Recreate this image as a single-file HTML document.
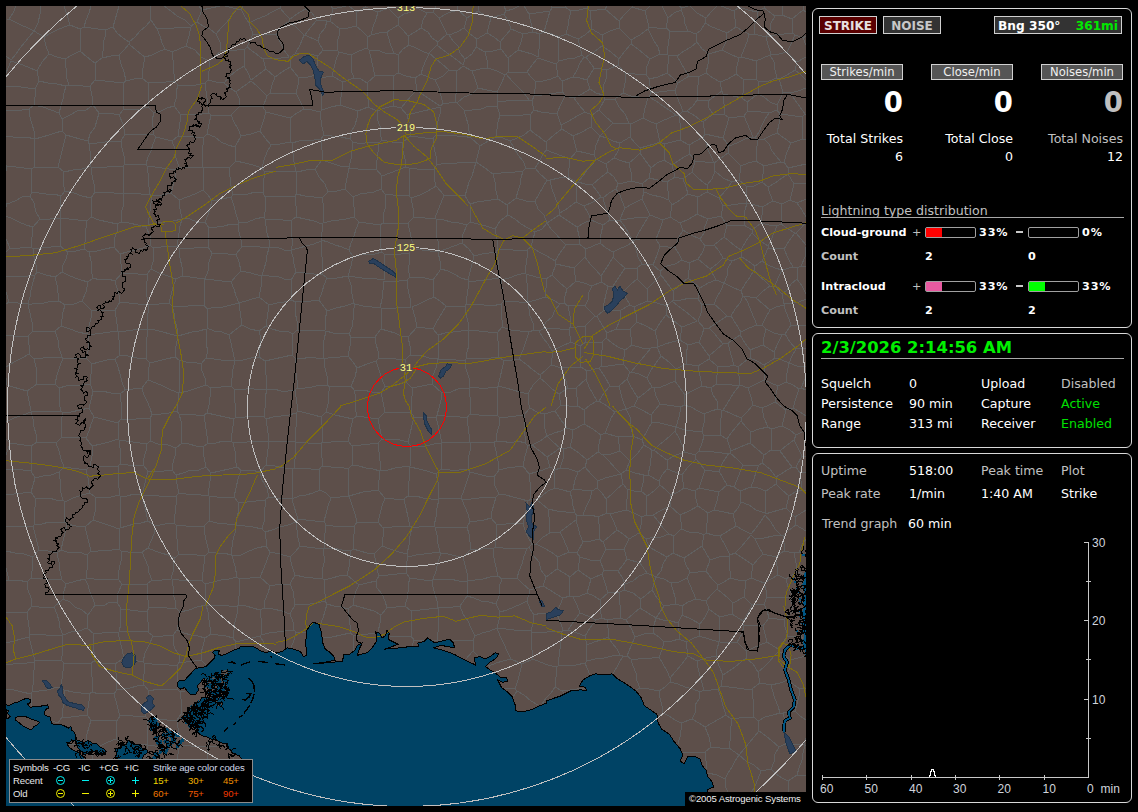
<!DOCTYPE html>
<html lang="en">
<head>
<meta charset="utf-8">
<title>Lightning Tracker</title>
<style>
html,body{margin:0;padding:0;background:#000;}
body{width:1138px;height:812px;position:relative;overflow:hidden;font-family:"DejaVu Sans","Liberation Sans",sans-serif;color:#fff;}
.map{position:absolute;left:6px;top:6px;}
.panel{position:absolute;border:1px solid #d8d8d8;border-radius:6px;box-sizing:border-box;}
.t{position:absolute;white-space:nowrap;line-height:20px;font-size:12.6px;margin-top:1px;}
.r{text-align:right;}
.g{color:#c0c0c0;}
.gr{color:#00e000;}
.b{font-weight:bold;}
.btn{position:absolute;box-sizing:border-box;border:1px solid #d0d0d0;text-align:center;white-space:nowrap;}
.hl{position:absolute;height:1px;background:#a8a8a8;}
.bar{position:absolute;box-sizing:border-box;border:1px solid #a0a0a0;border-radius:2px;height:11px;width:51px;}
.bar i{position:absolute;left:0;top:0;bottom:0;display:block;}
.s11{font-size:11.2px;}
.lg{font-family:"Liberation Sans",sans-serif;font-size:9.6px;letter-spacing:-0.15px;line-height:12px;margin-top:1px;}
</style>
</head>
<body>
<svg class="map" width="800" height="800" viewBox="6 6 800 800" shape-rendering="crispEdges">
<rect x="6" y="6" width="800" height="800" fill="#5d4f4a"/>
<g fill="#004365" stroke="none">
<path d="M6,704.8 9.2,705.6 13.2,703.2 17.2,702.4 22,700 26,698.4 30,699.2 30.8,702.4 27.6,704 30,707.2 38,706.4 45.2,705.6 47.9,704.8 48.4,708 45.2,709.6 44.4,714.4 46.8,716 50,716.8 51.6,723.2 54,724.8 58.8,724 63.6,725.6 68.4,728 70.8,726.4 72,730.4 74.8,732.8 75.6,736.8 77.2,740 81.2,741.6 84.4,742.4 87.6,740.8 90.8,741.6 93.2,744 96.4,743.2 100.4,747.2 103.6,748.8 106,751.2 105.2,754.4 102,755.2 98.8,753.6 95.6,752 91.6,750.4 87.6,753.6 83.6,754.4 81.2,751.2 78,748 74.8,740.8 71.6,740 69.2,743.2 66.8,742.4 68.4,746.4 73.2,750.4 78,752 81.2,755.2 84.4,758 84.4,810 6,810Z"/>
<path d="M6,696 6,696Z"/>
<path d="M114.9,760 116.5,753.6 114.9,748.8 119.7,748 121.3,744 126.1,744.8 127.7,740.8 132.5,741.6 134.1,744 138.9,744.8 142.1,748 146.9,749.6 147.7,752.8 143.7,755.2 142.1,760Z"/>
<path d="M149.3,718.4 152.5,716.8 156,716 156,731.2 152.5,730.4 150.1,726.4 150.9,722.4Z"/>
<path d="M242.4,760 239.2,755.7 232.8,753.3 228.8,748.5 227.2,743.7 221.6,742.9 216.8,740.5 210.4,738.9 205.6,736.5 201.6,735.7 197.6,732.4 195.2,727.6 191.2,726 188,722 184,719.6 182.4,716.4 187.2,714.8 188,710 192.8,706.8 194.4,702.8 200,701.2 201.6,697.2 206.4,698 208.8,694.8 207.2,691.6 204,688.4 204.8,684.4 204,678 201.6,681.2 197.6,685.2 198.4,690 196,694 191.2,694.8 187.2,691.6 184.8,687.6 180,689.2 177.6,686.8 177.1,682.8 180,680.4 184.8,680.4 187.2,677.2 191.2,673.2 194.4,669.2 199.2,667.6 205.6,666.8 210.4,662 214.4,658 215.2,655.6 212.8,652.4 215.2,650 219.2,650.8 218.4,654 221.6,655.6 228,653.2 234.4,650 239.2,648.4 240.8,646 252.1,646 256.9,648.4 261.7,651.6 266.5,652.4 271.3,650.8 276.1,653.2 276,652.8 282.2,651.6 287.1,647.9 293.2,649.1 300.6,651.6 303.1,656.5 306.8,655.3 305.6,643 306.8,630.6 310.5,624.5 313,622 319.1,624.5 321.6,633.1 322.8,643 325.3,649.1 329,651.6 333.9,656.5 335.1,660.2 325.3,662.2 313,663.9 342.5,661.4 343.8,654 349.9,654 354.8,650.3 357.3,645.4 362.2,643 359.8,647.9 357.3,655.3 367.2,652.8 372.1,647.9 377,640.5 375.8,631.9 379.5,633.1 381.9,638 385.6,635.6 386.9,630.6 389.3,633.1 388.1,639.3 393,641.7 398,644.2 391.8,646.7 384.4,649.1 399.2,647.9 409,646.7 418.9,646.7 417.7,643 423.8,641.7 427.5,638 431.2,640.5 434.9,643 443.5,640.5 449.7,639.3 453.4,643 454.6,647.9 448.5,646.7 441.1,645.4 433.7,647.9 443.5,650.3 453.4,654 465.7,660.2 475.6,665.1 474.3,657.7 480.5,656.5 484.2,659 490.3,656.5 495.3,652.8 499,654 495.3,659 489.1,662.7 485.4,666.4 490.3,670.1 496.5,673.8 500.2,677.4 506.4,677.4 507.6,681.1 502.7,682.4 497.7,679.9 501.4,687.3 507.6,692.2 512.5,697.2 515,704.5 515,710.7 522.4,711.9 532.2,709.5 539.6,705.8 546,703.3 546,700.9 553.4,698.4 560.8,695.9 570.6,691 580.5,689.8 586.7,691 585.4,687.3 579.3,686.1 583,679.9 589.1,676.2 595.3,673.8 605.1,675 612,673.8 617.4,678.7 627.3,684.8 635.9,691 640.9,697.2 644.5,705.8 651.9,710.7 656.9,714.4 658.1,723 661.8,729.2 669.2,734.1 674.1,741.5 680.3,748.9 682.7,755.1 680.3,761.2 684,763.7 687.7,756.3 693.8,756.3 700,758.7 702.4,766.1 706.1,769.8 707.4,776 712.3,782.2 713.5,787.1 707.4,789.5 708.6,806 708.6,806 242.4,806Z"/>
</g>
<g fill="#5d4f4a" stroke="#000" stroke-width="1">
<path d="M15.6,717.6 20.4,716 26,716.8 31.6,719.2 36.4,720.8 39.6,722.4 37.2,724.8 34,726.4 31.6,729.6 28.4,728.8 23.6,726.4 19.6,723.2 15.6,720Z"/>
<path d="M6,709.6 8.4,710.4 7.6,713.3 10,716.5 7.9,718.4 6,718.1Z"/>
</g>
<path d="M6,165 7,166 M6,171 7,166 M9,19 7,19 M9,19 13,13 16,6 M382,140 379,143 M382,140 392,142 402,143 M376,169 377,160 378,152 379,143 M376,169 382,176 M382,176 390,173 398,170 406,167 M406,167 405,159 403,151 402,143 M349,168 349,167 M349,168 358,169 367,169 376,169 M379,143 370,142 361,144 353,142 M349,167 351,159 352,151 353,142 M499,278 501,280 M499,278 492,279 484,280 476,281 468,281 M501,280 502,287 503,294 504,301 M468,281 468,289 467,296 466,304 M466,304 475,304 484,305 492,306 501,304 M501,304 504,301 M469,330 468,322 466,314 465,306 M469,330 461,331 453,332 445,333 438,335 M438,335 433,329 M465,306 456,306 446,306 M433,329 437,321 442,313 446,306 M718,804 724,800 730,796 M718,804 718,806 M750,803 750,806 M750,803 748,800 M748,800 739,798 730,796 M804,744 795,744 785,744 M804,744 806,738 M795,711 800,716 806,720 M795,711 783,713 M785,744 785,736 783,729 785,721 783,713 M711,803 718,804 M711,803 709,804 M805,745 803,753 802,760 799,768 797,775 M805,745 806,746 M797,775 806,776 M788,781 797,775 M788,781 782,778 776,774 771,769 M804,744 805,745 M771,769 774,762 775,754 779,747 M785,744 779,747 M795,711 797,704 799,696 800,689 M800,689 806,688 M802,456 796,467 M802,456 798,448 794,440 M794,440 787,445 780,451 M780,451 786,459 792,467 M792,467 796,467 M437,640 442,640 M452,640 462,640 473,640 M437,640 438,632 438,624 438,616 438,608 M473,640 475,636 M460,606 463,614 468,621 471,628 475,636 M460,606 453,607 446,607 438,608 M437,640 432,640 M424,640 414,640 M414,640 411,636 M411,636 411,628 412,619 411,611 M438,608 429,609 420,610 411,611 M375,633 368,634 360,635 353,635 M378,632 380,623 381,615 M381,615 374,611 367,609 360,607 353,605 M350,633 353,635 M350,633 350,625 349,617 348,609 M348,609 353,605 M353,651 353,643 353,635 M324,580 332,578 339,576 347,575 M324,580 324,587 325,594 325,601 M325,601 327,604 M327,604 334,606 341,607 348,609 M353,605 354,598 356,591 359,585 M347,575 353,580 359,585 M119,631 126,631 134,631 141,631 148,632 M119,631 121,624 120,616 121,609 M121,609 130,610 138,611 147,611 M148,632 149,625 147,618 147,611 M266,112 263,107 M266,112 274,114 282,116 290,118 M263,107 267,96 M290,118 297,113 304,109 M267,96 270,93 M270,93 278,93 287,93 296,93 M304,109 300,101 296,93 M9,19 15,22 21,25 28,28 34,31 M41,6 40,14 38,23 34,31 M6,56 11,60 M11,60 16,54 20,48 25,42 29,37 34,31 M349,168 347,178 345,189 M345,189 337,191 328,192 M322,160 331,163 340,166 349,167 M322,160 315,169 M315,169 319,177 325,184 328,192 M295,605 303,604 310,604 317,603 325,601 M295,605 294,598 293,591 290,584 M322,578 313,578 304,577 295,575 M322,578 324,580 M290,584 295,575 M350,139 341,137 332,136 324,135 M350,139 351,132 355,125 357,118 358,111 M340,105 349,108 358,111 M340,105 331,107 322,110 M324,135 322,127 321,120 320,112 M322,110 320,112 M322,160 322,150 321,139 M353,142 350,139 M321,139 324,135 M528,302 529,309 530,316 533,323 534,330 M527,302 519,302 512,301 504,301 M534,330 529,332 M501,304 501,312 502,320 502,327 M502,327 511,330 520,331 529,332 M468,469 459,470 450,470 441,469 M468,469 470,472 M436,474 441,469 M436,474 438,482 438,490 439,499 M470,472 467,481 464,490 461,498 M439,499 447,498 454,498 461,498 M436,135 433,138 M436,135 436,128 438,121 440,114 440,107 M433,138 425,138 418,137 410,136 M410,136 410,129 409,122 407,115 M407,115 415,113 423,111 432,109 440,107 M636,690 640,688 M640,688 649,689 659,691 M658,717 663,713 M663,713 662,706 660,698 659,691 M678,744 680,737 681,730 681,723 M681,723 675,720 669,716 663,713 M603,542 610,536 617,530 M603,542 606,549 M617,530 623,534 629,539 M629,539 624,549 M606,549 615,549 624,549 M629,539 639,533 M646,539 639,533 M646,539 649,547 M649,547 644,555 640,563 M640,563 627,559 M624,549 627,559 M473,651 473,640 M473,651 478,656 M488,665 489,666 M489,666 496,663 503,661 511,659 M475,636 482,633 490,631 497,628 M511,659 507,651 504,644 500,636 497,628 M489,666 489,668 M504,688 515,689 M515,689 518,680 520,672 522,664 M511,659 522,664 M555,687 551,693 546,698 542,704 M555,687 556,677 556,667 M556,667 548,665 540,662 533,659 M538,705 531,701 524,695 517,691 M517,691 515,689 M533,659 522,664 M776,806 783,804 790,801 M790,801 796,806 M750,803 763,806 M788,781 788,791 790,801 M771,769 761,771 M761,771 758,779 755,786 751,793 748,800 M806,803 800,806 M780,713 783,713 M780,713 778,706 775,699 773,692 771,685 M800,689 794,685 788,680 M788,680 780,683 771,685 M746,658 753,664 758,672 M746,658 741,662 735,667 729,671 723,675 M752,689 744,689 737,688 729,687 721,686 M752,689 760,683 M723,675 721,686 M760,683 758,672 M664,642 672,641 679,639 M664,642 662,650 659,657 M670,678 667,671 663,664 659,657 M670,678 676,671 682,664 688,656 M688,656 687,649 686,642 M686,642 679,639 M631,659 638,659 645,658 652,658 659,657 M631,659 633,666 636,673 637,681 640,688 M670,682 665,687 659,691 M670,682 670,678 M719,642 709,639 699,636 M719,642 717,649 716,656 M697,661 706,658 716,656 M697,661 688,656 M699,636 692,639 686,642 M806,491 802,490 M802,490 801,481 800,473 M800,473 806,472 M802,456 806,456 M796,467 800,473 M782,426 784,418 786,410 M782,426 771,429 M771,429 768,427 M768,427 764,418 762,408 M786,410 775,402 M762,408 769,405 775,402 M794,440 796,435 M780,451 771,450 M796,435 790,430 782,426 M771,450 771,443 771,436 771,429 M799,389 793,385 786,382 M799,389 796,398 793,408 M793,408 786,410 M778,386 786,382 M778,386 776,394 775,402 M120,771 122,761 M120,771 129,770 138,769 146,768 M146,768 147,754 M147,749 148,745 M148,745 147,744 M147,744 140,745 M176,803 176,796 174,789 171,782 171,775 M176,804 166,805 156,806 M153,775 162,775 171,775 M153,775 148,782 146,791 142,799 M142,799 152,806 M176,806 176,804 M146,768 153,775 M148,745 155,746 163,747 171,748 179,749 M179,749 177,759 177,770 M177,770 171,775 M206,796 207,788 208,780 M206,796 198,797 191,799 183,801 176,803 M177,770 184,771 191,775 200,776 207,779 M207,779 208,780 M350,633 341,635 332,637 323,638 M327,604 325,611 323,618 320,625 M240,799 240,806 M240,799 233,799 225,800 217,800 209,801 M209,801 210,806 M241,797 240,799 M206,796 209,801 M241,794 239,787 237,780 235,774 M235,774 228,775 221,777 214,779 208,780 M467,596 474,598 481,601 489,602 496,604 M467,596 467,588 468,581 M468,581 475,580 483,579 490,577 498,576 M496,604 499,596 499,587 502,579 M502,579 498,576 M460,606 467,596 M500,612 499,620 497,628 M500,612 496,604 M527,601 530,590 M527,601 521,604 514,607 507,610 500,612 M530,590 523,584 517,578 M517,578 509,578 502,579 M381,615 387,608 M359,585 367,583 376,581 M387,608 385,601 382,594 377,588 376,581 M411,636 404,636 397,636 390,637 M411,611 405,606 M387,608 396,607 405,606 M438,608 437,601 435,594 433,587 432,580 M432,580 424,580 417,579 410,578 M405,606 407,599 408,592 408,585 410,578 M473,651 466,659 M437,640 437,641 M552,351 548,344 543,338 539,331 M552,351 562,346 571,342 M539,331 543,329 M571,342 569,329 M543,329 551,328 560,329 569,329 M353,549 351,551 M353,549 360,551 367,553 374,554 M351,551 350,559 349,567 347,575 M376,581 379,576 M374,554 376,562 377,569 379,576 M410,578 406,573 M379,576 388,575 397,574 406,573 M119,115 109,113 99,113 M119,115 123,124 125,134 M99,113 97,120 95,127 90,134 88,141 M89,144 88,141 M89,144 97,143 105,142 113,141 121,141 M121,141 125,134 M119,115 123,110 M148,107 140,109 132,109 123,110 M148,107 154,113 M125,134 134,134 143,134 153,134 M154,113 152,120 153,127 153,134 M209,113 202,114 195,114 188,114 181,115 M209,113 208,106 207,98 206,91 205,83 M205,83 196,85 187,85 178,85 M178,85 176,92 176,99 174,106 M174,106 181,115 M154,113 161,111 167,108 174,106 M153,134 156,137 M156,137 164,139 172,141 M181,115 180,122 179,129 178,136 M178,136 172,141 M353,549 353,542 354,534 354,527 M383,528 383,537 382,546 M383,528 378,522 M378,522 368,522 357,522 M374,554 382,546 M354,527 357,522 M410,526 401,526 392,527 383,528 M410,526 408,517 406,508 404,499 M378,522 380,514 382,506 385,498 M385,498 394,499 404,499 M436,474 427,471 419,469 410,467 M439,499 431,499 423,498 416,496 408,496 M408,496 408,489 409,481 409,474 410,467 M117,602 118,593 122,584 M117,602 121,609 M149,608 147,611 M149,608 148,600 147,592 147,584 M147,584 138,584 130,584 122,584 M803,38 795,35 M803,38 806,45 M797,62 806,57 M797,62 787,52 M787,52 791,44 795,35 M645,11 647,19 649,27 M645,11 650,6 M649,27 657,28 666,28 M666,28 668,18 M662,6 668,18 M647,289 642,284 637,279 M647,289 654,282 661,275 M653,265 660,271 M653,265 642,264 M637,279 637,268 M661,275 660,271 M637,268 642,264 M462,243 463,234 467,225 M462,243 469,249 474,256 M474,256 482,254 489,253 496,252 M467,225 470,222 M470,222 478,224 486,226 495,229 M495,229 497,239 498,249 M498,249 496,252 M438,252 446,249 454,246 462,243 M438,252 439,244 436,236 437,227 436,219 M436,219 444,220 451,222 459,223 467,225 M468,280 461,278 454,274 448,271 441,269 M468,280 470,272 472,264 474,256 M441,269 440,261 438,252 M468,280 468,281 M499,278 498,270 498,260 496,252 M498,199 507,205 M498,199 491,200 484,201 477,202 470,204 M470,204 470,213 470,222 M495,229 500,221 508,215 M508,215 507,205 M11,61 6,73 M270,93 272,85 275,77 M296,93 298,85 299,78 M275,77 282,72 290,67 M299,78 290,67 M280,8 285,14 290,19 M280,8 280,6 M290,19 297,14 305,9 M305,6 305,9 M243,6 241,9 M241,9 245,17 249,23 M249,23 257,19 265,16 272,12 280,8 M178,85 174,81 M148,107 148,99 148,91 148,83 M174,81 166,82 157,82 148,83 M123,110 123,101 123,92 123,83 M126,81 123,83 M126,81 134,79 142,78 M142,78 148,83 M11,61 20,64 28,67 37,71 M44,37 34,31 M44,37 46,46 49,54 M49,54 42,62 37,71 M35,89 39,81 M35,89 28,88 21,87 13,86 6,86 M39,81 37,71 M438,252 430,251 422,250 414,249 M414,249 412,241 410,232 408,223 M436,219 435,218 M408,223 414,217 M435,218 425,218 414,217 M434,169 437,165 M434,169 434,178 436,186 M437,165 445,163 453,164 461,162 469,163 476,162 M436,186 444,195 M444,195 454,195 465,196 M465,196 467,189 469,182 472,176 474,169 476,162 M409,168 406,167 M409,168 417,169 426,169 434,169 M433,138 434,147 436,156 437,165 M402,143 410,136 M409,168 409,178 409,187 409,196 M409,196 411,198 M411,198 420,195 428,191 436,186 M436,135 443,135 450,135 457,136 464,136 471,138 M471,138 480,146 M480,146 478,154 476,162 M435,218 438,210 441,203 444,195 M411,198 413,208 414,217 M470,204 465,196 M493,174 495,182 496,191 498,199 M493,174 485,168 476,162 M290,118 290,126 290,134 290,142 M321,139 314,140 306,140 299,141 292,143 M304,109 312,110 320,112 M290,142 292,143 M382,176 381,189 M409,196 401,195 393,195 385,194 M381,189 385,194 M345,189 353,197 M381,189 374,192 367,193 360,194 353,197 M408,223 400,223 391,223 383,223 M385,194 385,201 385,209 383,216 383,223 M465,306 466,304 M502,327 497,333 M469,330 479,331 488,332 497,333 M469,330 468,338 469,345 467,352 466,359 M497,333 498,341 498,349 499,357 M499,357 491,358 482,358 474,358 466,359 M436,417 437,415 M436,417 438,425 440,434 442,443 M437,415 445,416 452,416 460,417 467,418 M442,443 451,442 461,443 470,442 M467,418 468,426 469,434 470,442 M468,469 468,460 470,451 470,442 M441,469 441,460 441,452 442,443 M529,332 526,341 523,350 519,359 M499,357 504,361 M519,359 512,360 504,361 M500,418 499,426 497,433 496,441 M500,418 508,417 516,416 524,415 M496,441 503,441 510,443 518,441 525,443 M524,415 525,422 524,429 525,436 525,443 M410,526 412,527 M439,499 437,508 436,517 434,526 M408,496 404,499 M434,526 426,526 419,527 412,527 M382,546 390,549 399,552 407,554 M412,527 410,536 409,545 407,554 M406,573 406,565 408,557 M408,557 407,554 M517,578 519,571 522,564 524,556 527,549 M527,549 519,548 511,548 503,548 495,547 M498,576 496,567 494,558 493,549 M495,547 493,549 M543,586 536,588 530,590 M543,586 546,577 M527,549 529,547 M546,577 541,570 539,562 533,555 529,547 M398,25 403,30 408,36 M398,25 398,18 M408,36 415,32 421,28 M417,8 411,12 404,14 398,18 M417,8 427,13 M427,13 423,20 421,28 M417,90 422,94 428,98 434,102 440,106 M417,90 415,78 M415,78 421,74 M421,74 428,77 435,80 M435,80 439,88 441,96 443,104 M443,104 440,106 M407,115 401,108 M401,108 406,102 411,96 417,90 M449,70 442,64 436,59 429,53 M449,70 443,76 435,80 M429,54 426,60 423,67 421,74 M371,35 373,27 376,19 378,12 M371,35 379,33 387,32 M398,25 387,32 M398,18 393,13 388,8 M378,12 388,8 M343,82 354,78 M343,82 342,90 341,97 340,105 M358,111 368,107 M354,78 361,79 367,83 M367,83 367,91 368,99 368,107 M382,140 380,133 380,126 377,119 377,111 M401,108 393,106 M393,106 385,108 377,111 M377,111 368,107 M711,803 709,801 M670,682 678,684 685,687 693,689 700,692 M681,723 692,719 M692,719 695,713 695,705 699,699 700,692 M697,661 698,668 700,676 702,683 704,690 M716,656 719,666 723,675 M721,686 718,689 M718,689 711,690 704,690 M700,692 704,690 M562,691 555,687 M562,691 570,690 577,689 585,688 M556,667 558,666 M558,666 567,665 576,665 585,663 M590,675 585,663 M562,632 563,630 M562,632 554,631 547,632 539,633 531,632 M563,630 560,621 556,612 M556,612 549,614 541,613 534,615 M534,615 533,623 531,631 M531,632 531,631 M558,666 559,657 560,649 561,640 562,632 M533,659 532,650 531,641 531,632 M543,586 550,590 556,594 563,598 M527,601 530,609 534,615 M563,598 560,605 556,612 M497,628 506,629 514,630 522,630 531,631 M587,645 586,653 587,661 M587,645 594,642 601,640 608,637 M587,661 595,659 604,658 612,656 620,655 M608,637 612,643 617,649 620,655 M656,618 654,625 653,633 M656,618 648,613 640,608 M653,633 644,634 635,637 M640,608 633,614 626,620 M626,620 631,628 635,637 M631,659 627,656 M653,633 659,637 664,642 M635,637 631,646 627,656 M613,674 618,665 623,656 M627,656 623,656 M585,663 587,661 M623,656 620,655 M788,680 789,670 790,660 M771,685 760,683 M758,672 764,667 769,662 774,656 779,651 M790,660 779,651 M730,578 730,571 729,564 729,556 M730,578 724,582 718,585 M729,556 719,557 710,560 M710,560 706,571 M706,571 712,579 718,585 M733,603 744,597 M733,603 728,598 722,593 717,589 M730,578 738,580 745,581 M744,597 745,589 745,581 M717,589 718,585 M710,560 706,553 702,546 M702,546 696,550 690,554 684,558 M706,571 698,572 690,572 M684,558 686,565 690,572 M704,535 702,546 M704,535 697,532 689,532 681,529 M681,529 674,536 M674,536 673,545 673,553 M684,558 673,553 M717,589 711,595 706,601 M706,601 696,599 M696,599 693,592 690,585 687,578 M687,578 690,572 M646,539 654,537 661,537 669,534 M649,547 658,552 667,557 M669,534 674,536 M673,553 667,557 M682,615 678,623 M682,615 682,606 M678,623 671,621 663,620 656,618 M682,606 676,604 M676,604 664,606 M656,618 660,612 664,606 M700,624 691,619 682,615 M700,624 699,636 M679,639 679,631 678,623 M709,609 705,617 700,624 M709,609 706,601 M696,599 688,602 682,606 M671,583 679,582 687,578 M671,583 673,590 675,597 676,604 M806,325 799,325 791,325 M784,305 786,312 789,319 791,325 M784,305 784,304 M806,299 799,302 792,303 784,304 M806,377 801,388 M801,388 806,390 M799,389 801,388 M789,363 787,373 786,382 M789,363 797,366 806,367 M796,435 806,430 M793,408 800,412 806,416 M771,450 764,455 M751,432 759,429 768,427 M751,432 750,443 M750,443 757,449 764,455 M741,421 746,427 751,432 M741,421 736,427 731,433 727,439 M727,439 731,451 M750,443 740,447 731,451 M806,510 795,517 M802,490 795,492 789,496 M789,496 786,508 M786,508 795,517 M743,465 737,459 730,453 M743,465 751,465 759,465 M731,451 730,453 M764,455 762,463 M762,463 759,465 M792,467 784,472 776,477 M762,463 770,469 776,477 M789,496 782,490 776,484 M776,477 776,484 M704,535 706,533 M681,529 681,522 680,515 M680,515 689,511 698,506 M698,506 708,513 M708,513 707,523 706,533 M730,555 729,556 M730,555 725,545 720,536 M720,536 713,535 706,533 M698,506 696,499 695,491 M695,491 699,488 M699,488 709,490 719,492 M708,513 714,510 M719,492 717,501 714,510 M736,526 733,514 M736,526 728,531 720,536 M714,510 724,512 733,514 M784,551 794,553 M784,551 784,543 783,536 M783,536 789,530 796,525 M799,552 794,553 M799,552 802,545 806,539 M796,525 806,531 M786,508 779,510 772,512 765,514 M795,517 796,525 M765,515 771,522 775,529 781,535 M781,535 783,536 M806,555 799,552 M744,597 752,605 M745,581 751,578 M752,605 764,604 M764,583 751,578 M764,583 766,590 767,597 M767,597 764,604 M241,772 235,773 M235,773 234,764 233,755 M295,605 290,614 M290,584 280,584 270,586 M270,586 268,593 265,600 264,608 M290,614 282,611 273,609 264,608 M414,640 412,646 M566,245 560,253 555,261 M566,245 561,240 556,234 551,229 547,223 M535,232 542,229 547,223 M535,232 533,239 531,247 M555,261 547,256 539,252 531,247 M527,302 527,293 527,283 526,274 M501,280 509,278 517,275 525,273 M526,274 525,273 M498,249 506,249 513,250 520,250 527,250 M525,273 526,265 527,258 527,250 M535,232 528,228 521,224 515,219 508,215 M527,250 531,247 M528,302 536,300 545,297 M534,330 539,331 M543,329 546,322 552,317 555,310 560,304 M560,304 553,300 545,297 M526,274 536,277 546,279 M545,297 546,288 546,279 M556,264 552,275 M556,264 555,261 M546,279 552,275 M142,799 135,799 127,799 M126,806 127,799 M120,771 118,774 M118,774 122,782 124,791 127,799 M124,658 115,664 M124,658 133,660 143,662 M115,664 116,673 116,682 117,690 M117,690 123,689 130,688 137,686 144,685 M144,685 143,678 145,670 144,663 M143,662 144,663 M118,632 120,641 122,649 124,658 M118,632 110,632 102,633 94,634 M94,634 93,643 94,652 94,661 M94,661 101,663 108,663 115,664 M153,636 148,632 M153,636 149,645 145,653 143,662 M91,663 91,670 92,677 92,685 92,692 M91,663 94,661 M114,694 117,690 M114,694 107,693 99,694 92,692 M117,602 110,602 103,606 95,605 M86,578 94,579 102,579 110,579 118,579 M118,579 122,584 M85,579 88,585 90,592 93,599 95,605 M94,634 87,628 M87,628 88,615 M88,615 95,605 M10,443 6,455 M10,443 6,439 M121,141 122,148 124,156 125,164 M156,137 153,144 151,151 148,157 146,164 M125,164 135,164 146,164 M357,522 355,514 352,505 349,496 M385,498 378,490 M349,496 356,494 363,492 371,491 378,490 M804,6 803,10 M803,10 792,19 M782,6 782,15 M792,19 782,15 M806,36 803,38 M806,12 803,10 M793,33 795,35 M793,33 792,19 M793,33 784,34 775,35 766,37 M782,15 775,16 M766,37 770,30 771,23 775,16 M764,6 764,8 M775,16 764,8 M806,164 797,166 788,168 M788,168 784,162 M784,162 787,152 791,143 M803,139 791,143 M803,139 806,140 M806,217 802,210 797,203 M797,203 806,199 M631,40 625,34 619,28 M631,40 631,44 M631,44 625,51 619,59 M619,59 611,52 602,46 M619,28 610,31 602,35 M602,35 602,46 M648,29 651,35 654,41 658,47 660,54 M648,29 640,35 631,40 M660,54 650,59 M650,59 644,54 638,49 631,44 M649,79 646,74 M649,79 650,86 651,93 M646,74 635,74 625,73 M651,93 649,97 M623,93 625,83 625,73 M623,93 631,96 639,97 648,98 M648,98 649,97 M667,73 658,77 649,79 M667,73 673,78 678,83 M678,83 675,90 M675,90 667,91 659,92 651,93 M650,59 647,66 646,74 M618,65 619,59 M618,65 625,73 M679,115 683,111 M679,115 676,115 M675,90 677,97 680,104 683,111 M676,115 669,110 663,106 656,101 649,97 M676,115 669,118 662,121 656,124 M656,124 649,121 643,118 M643,118 645,108 648,98 M493,174 501,173 508,172 515,172 523,171 M507,205 516,198 M523,171 521,178 520,185 518,191 516,198 M547,223 544,215 538,209 535,201 M535,201 526,201 516,198 M480,146 488,141 496,137 M496,137 503,138 510,141 M523,171 526,168 M510,141 514,148 518,155 523,161 526,168 M547,180 540,174 535,168 M547,180 543,187 539,194 535,201 M526,168 535,168 M449,70 457,71 M443,104 455,102 M455,102 456,94 456,86 456,78 457,71 M797,203 790,200 M806,183 794,184 M790,200 792,192 794,184 M788,168 788,174 M788,174 794,184 M621,310 630,305 M621,310 612,310 603,311 M630,305 626,298 623,292 M603,311 604,303 606,294 608,286 M623,292 613,286 M613,286 608,286 M647,301 647,289 M647,301 634,307 M634,307 630,305 M637,279 630,285 623,292 M637,268 625,268 M625,268 621,274 617,280 613,286 M625,268 619,263 613,257 M613,257 609,264 605,270 601,276 M601,276 601,282 M601,282 608,286 M35,89 35,97 34,105 M66,86 57,84 48,83 39,81 M66,86 64,93 63,99 61,106 59,113 M34,105 43,107 51,110 59,113 M6,111 14,110 22,110 29,109 M34,105 29,109 M6,136 13,137 20,138 27,137 34,139 M29,109 30,117 32,124 34,131 34,139 M343,82 332,76 M351,55 351,63 351,70 354,78 M351,55 339,52 M332,76 334,68 336,60 339,52 M322,110 321,102 322,94 320,86 321,78 M332,76 321,78 M299,78 308,77 316,75 M321,78 316,75 M249,23 253,34 M253,34 261,34 268,34 276,34 M290,19 289,21 M276,34 282,27 289,21 M44,37 51,33 57,30 64,27 70,25 M70,25 67,15 64,6 M237,9 232,15 227,22 221,28 216,34 M237,9 225,6 M197,22 202,10 M197,22 203,26 210,29 216,34 M202,10 211,8 220,6 M241,9 237,9 M253,34 250,41 247,47 M221,51 229,50 237,50 245,49 M221,51 220,42 216,34 M247,47 245,49 M276,34 280,42 284,50 289,57 M289,57 281,58 272,58 263,59 M247,47 255,53 263,59 M275,77 266,69 M290,67 290,57 M263,59 266,69 M236,92 230,88 224,83 M236,92 244,86 251,81 M224,83 230,76 236,71 244,66 M244,66 248,73 251,80 M240,106 231,115 M240,106 239,98 236,92 M231,115 221,115 211,115 M211,115 209,113 M205,83 208,80 M208,80 216,82 224,83 M263,107 255,106 247,107 240,106 M267,96 262,91 257,86 251,81 M221,51 215,56 209,61 M208,80 209,71 209,61 M245,49 244,58 244,66 M266,69 258,75 251,80 M197,22 191,26 M199,6 202,10 M164,6 171,11 177,16 185,20 191,26 M69,85 66,76 66,68 65,59 M69,85 76,85 83,86 90,86 M95,80 90,86 M95,80 96,71 95,63 M95,63 87,57 80,51 M65,59 72,55 80,51 M49,54 57,57 65,59 M66,86 69,85 M93,105 92,96 90,86 M93,105 86,110 77,111 70,115 62,119 M62,119 59,113 M99,113 93,105 M123,83 114,82 105,81 95,80 M70,25 80,29 M80,29 80,36 80,43 80,51 M328,192 322,198 M353,197 354,207 354,217 M354,217 346,219 339,220 331,221 323,223 M322,198 324,207 323,215 323,223 M266,112 263,122 260,131 M231,115 234,122 238,129 241,136 M260,131 251,134 241,136 M290,142 280,144 271,145 M260,131 265,138 271,145 M412,388 406,382 M412,388 412,396 411,404 411,412 M406,382 399,384 392,386 385,387 M411,412 402,412 394,412 385,412 M385,412 383,402 381,392 M385,387 381,392 M354,217 359,222 M383,223 380,225 M359,222 366,223 373,224 380,225 M414,249 409,253 M382,252 380,243 381,234 380,225 M382,252 384,254 M409,253 401,254 392,254 384,254 M438,335 438,343 438,351 439,359 M466,359 465,360 M465,360 456,360 447,359 439,359 M410,355 405,360 M410,355 419,355 429,358 438,359 M405,360 405,368 406,375 406,382 M412,388 422,386 432,384 M438,359 436,368 433,375 432,384 M414,417 411,412 M414,417 421,417 429,417 436,417 M437,415 439,408 441,400 442,393 M442,393 432,384 M470,414 479,415 488,415 497,415 M470,414 470,405 470,397 469,388 M469,388 470,387 M470,387 479,388 488,388 497,387 M497,387 497,397 497,406 497,415 M500,418 497,415 M467,418 470,414 M494,442 496,441 M494,442 486,442 478,443 470,442 M442,393 451,392 460,388 469,388 M465,360 466,369 469,378 470,387 M439,359 438,359 M498,386 500,378 502,369 504,361 M498,386 497,387 M528,394 520,392 513,390 506,388 498,386 M528,394 528,401 530,408 M524,415 530,408 M470,472 478,474 486,476 494,477 M494,442 496,451 498,461 499,470 M499,470 494,477 M525,443 528,446 M499,470 507,468 515,467 523,466 M528,446 525,456 523,466 M540,375 540,378 M540,375 546,370 551,365 M540,378 546,383 552,389 559,394 M551,365 562,368 M562,368 564,375 566,381 568,388 M559,394 568,388 M528,394 533,385 540,378 M519,359 526,364 533,370 540,375 M552,351 552,358 551,365 M599,401 604,393 610,386 M599,401 607,406 615,412 M610,386 619,386 M615,412 626,409 M619,386 621,394 623,401 626,409 M576,388 577,397 578,406 M576,388 568,388 M559,394 561,405 M561,405 569,406 578,406 M576,388 586,379 M586,379 589,387 593,394 597,401 M597,401 590,405 584,410 M584,410 578,406 M434,526 435,527 M408,557 416,555 424,554 432,553 440,552 M435,527 437,535 438,544 440,552 M461,498 462,500 M462,500 465,507 468,514 470,522 M470,522 467,527 M435,527 443,527 451,527 459,527 467,527 M557,569 558,557 M557,569 564,573 570,577 M558,557 569,552 M570,577 578,570 M578,570 580,557 M569,552 577,553 M580,557 577,553 M546,577 557,569 M529,547 532,544 M532,544 536,544 M536,544 544,548 551,552 558,557 M563,598 570,596 M570,596 569,586 570,577 M603,542 599,539 M599,539 591,541 583,542 M600,561 606,549 M600,561 590,560 580,557 M583,542 577,553 M417,8 417,6 M388,8 388,6 M429,54 422,51 416,48 409,45 M429,53 437,45 M408,36 409,45 M421,28 428,32 432,38 438,42 M437,45 438,42 M457,71 463,66 M437,45 443,50 450,55 457,60 463,65 M438,42 447,34 M465,59 463,65 M465,59 460,53 458,46 453,41 449,35 M449,35 447,34 M365,6 365,7 M349,6 357,12 M357,12 365,7 M378,12 365,7 M333,9 346,6 M333,9 331,6 M356,26 357,12 M356,26 362,31 368,37 M371,35 368,37 M369,50 371,58 373,67 375,76 M369,50 377,50 385,53 394,53 M375,76 384,75 393,76 M398,55 394,53 M398,55 398,64 398,73 M398,73 393,76 M351,55 359,51 367,48 M367,48 369,50 M367,83 375,76 M368,37 367,48 M387,32 389,39 391,46 394,53 M393,106 394,98 393,91 394,84 393,76 M409,45 403,49 398,55 M415,78 406,76 398,73 M692,719 699,723 705,727 M718,689 721,698 723,706 726,715 M705,727 712,723 719,719 726,715 M562,691 564,693 M640,608 641,599 M664,606 657,598 652,590 M641,599 646,595 652,590 M671,583 664,579 656,577 M652,590 656,577 M640,563 647,573 M667,557 663,564 661,571 656,577 M647,573 656,577 M796,349 790,342 785,334 M796,349 792,356 789,363 M789,363 782,360 775,358 M782,335 785,334 M782,335 778,343 774,352 M774,352 775,358 M806,348 796,349 M791,325 785,334 M764,380 764,372 764,365 M764,380 771,383 778,386 M764,365 775,358 M763,345 764,337 766,329 M763,345 774,352 M766,329 774,333 782,335 M750,358 750,350 M750,358 757,361 764,365 M763,345 750,350 M631,372 630,372 M631,372 639,374 647,378 M630,372 627,379 M627,379 630,385 634,392 638,398 M638,398 645,393 652,387 M647,378 652,387 M647,301 657,303 667,306 M667,306 666,315 M634,307 636,314 637,322 M637,322 646,326 655,331 M666,315 660,323 655,331 M770,310 766,317 762,325 M770,310 763,304 756,298 M756,298 744,296 M744,296 748,303 751,311 754,318 757,325 M757,325 762,325 M784,305 776,307 770,310 M766,329 762,325 M731,316 736,324 741,332 M731,316 735,309 740,303 743,296 M743,296 744,296 M741,332 749,328 757,325 M740,335 745,343 750,350 M740,335 741,332 M667,306 672,301 M666,315 674,321 682,327 M682,327 690,324 697,321 M697,321 691,316 685,311 678,306 672,301 M661,275 667,283 673,291 M673,291 673,300 M672,301 673,300 M688,278 694,283 700,288 M688,278 681,284 673,291 M673,300 681,300 690,298 698,299 M700,288 698,299 M698,321 701,313 702,305 M702,305 698,299 M723,258 732,261 M723,258 717,264 710,269 M732,261 728,268 727,276 724,283 M710,269 716,280 M716,280 724,283 M741,250 735,246 729,241 724,237 M741,250 742,257 M742,257 732,261 M714,245 724,237 M714,245 719,251 723,258 M700,288 708,283 716,280 M714,304 702,305 M714,304 717,297 721,290 724,283 M731,316 727,316 M743,296 741,291 M741,291 732,287 724,283 M727,316 721,310 714,304 M741,291 745,284 750,277 754,270 M756,298 763,291 770,286 M770,286 765,281 759,276 754,270 M742,257 748,261 755,266 M755,266 754,270 M796,233 801,239 806,245 M796,233 801,228 806,222 M685,452 682,445 679,438 675,431 M685,452 676,455 667,460 M675,431 670,436 664,441 659,445 654,450 M667,460 660,455 654,450 M660,404 667,405 674,406 681,407 M660,404 655,410 651,415 M681,407 679,417 676,427 M676,427 668,425 660,423 652,422 M651,415 652,422 M660,404 656,396 654,388 M638,398 634,406 M654,388 652,387 M651,415 642,410 634,406 M627,379 619,386 M634,406 626,409 M719,471 723,462 729,453 M719,471 712,471 705,470 M729,453 722,453 714,452 707,451 699,451 M705,470 696,459 M696,459 695,455 M695,455 699,451 M743,465 740,472 737,480 734,487 M730,453 729,453 M727,485 734,487 M727,485 723,478 719,471 M699,488 702,479 705,470 M719,492 727,485 M727,439 720,435 M720,435 712,435 704,436 M704,436 702,443 699,451 M695,491 684,488 M684,488 682,475 M682,475 688,467 696,459 M685,452 695,455 M667,460 667,469 M667,469 675,472 682,475 M702,432 704,436 M702,432 693,431 685,430 676,427 M676,427 675,431 M765,513 756,510 749,505 741,502 M765,513 766,506 765,499 766,491 M766,491 758,488 751,487 M751,487 740,491 M740,491 741,502 M751,534 756,528 761,521 765,515 M751,534 743,530 736,526 M765,514 765,513 M733,514 738,508 741,502 M776,484 766,491 M759,465 756,472 754,479 751,487 M734,487 740,491 M790,660 798,658 806,656 M794,553 796,563 797,572 M806,574 797,572 M784,551 776,557 M776,557 777,566 778,575 M778,575 786,579 M797,572 786,579 M753,565 758,559 763,554 M753,565 744,559 735,553 M763,554 759,547 755,539 M735,553 741,547 746,541 751,535 M751,535 755,539 M776,557 763,554 M778,575 771,579 764,583 M751,578 753,565 M730,555 735,553 M781,535 773,536 764,538 755,539 M788,636 783,642 778,649 M788,636 785,627 784,619 M784,619 777,619 769,618 M778,649 767,642 M767,642 765,634 763,626 M763,626 769,618 M779,651 778,649 M801,636 806,644 M801,636 788,636 M746,658 746,651 M746,651 753,648 760,645 767,642 M743,621 744,625 M743,621 732,614 M744,625 742,634 737,642 M720,617 719,625 719,634 720,642 M720,617 732,614 M720,642 728,642 737,642 M752,605 748,613 743,621 M764,604 767,611 769,618 M763,626 754,625 744,625 M733,603 732,614 M746,651 737,642 M709,609 714,613 720,617 M153,636 163,636 173,635 M177,666 169,665 160,664 152,664 144,663 M177,666 179,662 M179,662 179,655 175,649 173,642 173,635 M177,666 177,674 177,682 M177,687 177,689 M144,685 149,691 M177,689 168,690 158,689 149,691 M120,716 129,715 137,717 145,716 M120,716 118,709 116,701 114,694 M149,691 148,699 148,708 145,716 M147,744 148,736 147,728 148,719 M120,716 117,721 M117,721 116,730 116,739 M116,739 121,743 M145,716 148,719 M182,745 180,737 178,728 177,720 M182,745 191,746 199,746 207,746 M177,720 181,714 M181,714 185,714 M208,739 208,746 M179,749 182,745 M157,719 167,720 177,720 M207,779 207,771 207,763 207,755 207,746 M177,689 180,692 M180,692 181,699 182,707 181,714 M203,687 199,688 M185,691 180,692 M227,745 217,746 208,746 M306,633 296,632 M290,614 293,622 294,630 M296,632 294,630 M264,608 260,610 M294,630 285,631 277,632 269,633 261,635 M261,635 261,626 261,618 260,610 M571,342 580,346 M570,327 569,329 M570,327 577,327 585,326 M585,326 585,334 586,342 M580,346 586,342 M562,368 571,367 581,367 M580,346 580,357 581,367 M599,401 597,401 M610,386 605,377 599,368 M586,379 587,371 M599,368 587,371 M581,367 587,371 M567,289 565,296 564,303 M567,289 576,281 M576,281 584,283 592,286 M592,286 589,292 588,300 585,306 M585,306 576,305 568,306 M568,306 564,303 M560,304 564,303 M552,275 559,282 567,289 M556,264 565,266 574,268 M574,268 576,281 M585,257 579,263 574,268 M585,257 590,264 596,270 601,276 M601,282 592,286 M595,316 597,316 M595,316 590,311 585,306 M597,316 603,311 M570,327 570,316 568,306 M585,326 590,321 595,316 M127,799 118,800 110,802 101,804 93,805 M87,628 79,631 71,632 63,635 M91,663 82,663 73,663 64,663 M64,663 61,660 M62,635 62,644 63,652 61,660 M85,579 76,581 66,584 M88,615 82,610 75,607 70,602 63,599 M66,584 64,591 63,599 M63,635 60,628 59,621 57,614 54,607 M54,607 63,599 M123,166 123,175 123,184 123,193 M123,166 115,166 107,167 99,167 91,167 M123,193 114,193 104,192 95,192 M95,192 94,184 92,175 91,167 M89,144 90,151 90,159 91,166 M123,166 125,164 M6,304 9,302 M9,302 6,292 M123,193 132,193 141,194 149,194 M146,164 147,166 M147,166 148,173 148,180 149,187 149,194 M172,141 175,149 176,158 179,167 M179,167 176,170 M147,166 155,167 162,168 169,169 176,170 M442,443 434,444 426,446 419,446 411,447 M410,466 410,456 411,447 M414,417 412,425 410,434 408,442 M408,442 411,447 M147,584 152,580 M118,579 119,570 121,561 121,551 M121,551 128,552 135,552 142,552 M142,552 145,559 148,566 149,573 152,580 M149,608 158,607 167,608 176,608 M152,580 162,580 171,579 M172,579 173,586 173,594 175,600 176,608 M173,635 177,630 M177,630 179,621 180,612 M176,608 180,612 M264,417 266,419 M264,417 265,408 265,398 267,389 M298,411 296,413 M298,411 297,404 296,397 295,390 M267,389 274,389 281,391 288,391 295,390 M266,419 273,417 281,416 289,415 296,413 M651,168 657,163 664,160 M651,168 645,160 640,153 M640,148 640,153 M640,148 647,146 654,144 660,142 M664,160 664,152 664,144 M664,144 660,142 M680,140 689,145 M680,140 672,142 664,144 M672,165 664,160 M672,165 678,161 684,157 690,154 M689,145 690,154 M680,140 680,132 680,123 679,115 M656,124 658,133 660,142 M672,165 675,177 M649,178 651,168 M649,178 658,180 667,182 M667,182 675,177 M707,192 707,185 M707,192 719,198 M719,198 726,190 732,182 M732,182 723,178 715,171 M707,185 712,179 715,171 M690,154 695,161 M683,179 675,177 M683,179 692,172 M692,172 695,161 M741,166 734,159 728,153 M741,166 740,173 739,180 M739,180 732,182 M715,171 714,163 M728,153 721,158 714,163 M689,145 696,141 703,137 M695,161 705,162 714,163 M703,137 706,143 708,150 711,156 714,163 M707,185 699,179 692,172 M724,114 729,118 M724,114 713,114 M729,118 726,128 723,138 M713,114 703,122 M723,138 714,136 705,134 M703,122 705,134 M744,116 747,123 750,130 753,137 M744,116 737,117 729,118 M753,137 745,139 737,143 729,146 M729,146 723,138 M729,146 728,153 M703,137 705,134 M683,111 687,111 M687,111 695,116 703,122 M797,62 795,70 M795,70 801,75 806,80 M740,6 739,7 M764,8 757,12 M757,12 748,10 739,7 M747,112 754,111 761,112 769,113 M747,112 744,116 M753,137 755,138 M769,113 765,119 762,125 759,132 755,138 M781,162 784,162 M781,162 776,156 772,151 769,144 764,139 M791,143 784,138 777,133 M777,133 770,136 764,139 M756,161 756,153 757,146 757,139 M756,161 764,166 M764,166 772,164 781,162 M764,139 757,139 M756,161 748,163 741,166 M757,139 755,138 M803,139 802,131 802,124 802,117 M777,133 779,124 780,114 M802,117 795,116 788,115 780,114 M769,113 777,110 M777,110 780,114 M594,68 586,57 M594,68 587,80 M587,80 580,78 573,77 M573,77 577,70 580,63 584,57 M584,57 586,57 M618,65 607,70 M607,70 594,68 M602,46 594,52 586,57 M607,70 606,79 603,87 603,95 M603,95 596,93 590,89 M590,89 587,80 M603,95 605,99 M590,89 582,94 574,98 M574,98 579,105 585,112 M592,115 585,112 M592,115 599,110 M599,110 605,99 M623,93 615,99 M605,99 615,99 M546,150 542,156 539,162 535,168 M546,150 546,142 M510,141 517,138 524,135 530,130 M530,130 538,136 546,142 M573,136 582,132 591,127 M573,136 562,129 M591,127 592,115 M585,112 577,116 569,121 561,125 M562,129 561,125 M559,215 560,213 M559,215 553,219 547,223 M547,180 550,180 M560,213 558,205 555,197 552,189 550,180 M496,137 497,129 498,122 500,115 M530,130 530,122 531,114 M500,115 507,116 515,115 523,115 531,114 M619,21 612,15 605,9 M619,21 625,14 632,7 M605,9 607,6 M632,7 632,6 M645,11 632,7 M649,27 648,29 M619,28 619,21 M642,264 638,257 636,249 633,242 M613,257 613,252 M633,242 626,246 619,249 613,252 M653,265 657,255 660,246 M635,240 633,241 M635,240 645,238 656,239 M656,239 660,246 M633,242 633,241 M660,271 667,266 675,264 682,260 M660,246 668,247 675,248 M675,248 679,254 682,260 M688,278 689,270 689,263 M710,269 704,264 698,259 M698,259 689,263 M714,245 705,246 M698,259 702,253 705,246 M689,263 682,260 M795,233 788,229 781,224 M795,233 796,233 M790,200 782,204 M782,204 781,214 781,224 M768,246 771,240 774,233 777,226 M768,246 759,240 752,233 M752,233 752,230 M752,230 761,223 M761,223 769,225 777,226 M741,250 746,241 752,233 M724,237 727,225 M752,230 744,225 M744,225 735,225 727,225 M35,139 42,137 49,135 55,133 62,131 M35,139 34,146 34,153 34,160 34,167 M34,167 42,167 50,167 58,167 M58,167 60,159 62,151 64,143 66,135 M66,135 62,131 M62,119 62,131 M32,169 24,168 16,167 7,166 M32,169 34,167 M88,141 80,139 73,137 66,135 M64,172 73,170 82,169 91,166 M64,172 58,167 M356,26 348,28 340,29 M339,52 337,50 M337,50 337,43 339,36 340,29 M333,9 330,21 M340,29 330,21 M80,29 84,27 M84,27 86,20 89,13 91,6 M126,81 124,72 121,64 119,55 M95,63 102,58 M119,55 111,56 102,58 M142,78 143,68 145,57 M145,57 137,51 129,44 M119,55 124,50 129,44 M84,27 91,28 98,29 105,30 M102,58 103,51 103,44 105,37 105,30 M165,49 162,43 160,36 157,29 M165,49 172,52 M157,29 166,28 174,28 182,27 191,27 M172,52 179,49 186,46 M186,46 189,36 191,27 M174,81 174,74 173,67 173,60 172,52 M145,57 152,55 158,52 165,49 M209,61 201,57 195,50 186,46 M191,26 191,27 M323,223 322,224 M322,224 322,232 321,240 M359,222 356,229 354,236 351,243 349,250 M321,240 328,242 335,245 342,247 349,250 M382,252 375,254 367,254 360,255 353,257 M349,250 353,257 M384,254 384,263 384,271 384,280 M384,280 377,279 370,278 362,278 355,277 348,276 M353,257 351,266 348,276 M321,241 321,249 322,257 322,266 322,274 M348,276 337,278 327,278 M327,278 322,274 M315,169 306,170 297,172 M322,198 314,197 305,196 296,194 M296,194 297,187 296,179 297,172 M292,143 293,153 294,162 296,171 M297,172 296,171 M211,115 209,124 207,134 M241,136 235,147 M235,147 228,145 221,142 215,137 207,134 M178,136 186,136 195,137 203,138 M179,167 187,167 194,167 202,167 M202,167 202,160 202,153 203,145 203,138 M207,134 203,138 M441,269 433,280 M409,253 410,261 408,269 410,277 M410,277 417,277 425,278 433,280 M446,306 440,301 434,297 M433,280 433,289 434,297 M266,419 267,426 268,433 269,441 M296,413 296,420 296,427 295,434 295,441 M295,441 286,441 278,441 269,441 M270,586 260,577 M238,605 246,606 253,608 260,610 M238,605 239,596 239,587 239,579 M260,577 250,578 239,579 M583,542 580,535 578,527 576,520 M569,552 566,545 563,538 560,532 M560,532 568,526 576,520 M536,544 543,537 550,533 M560,532 550,533 M599,539 599,532 599,524 598,517 M598,517 591,515 583,515 M583,515 577,516 M577,516 576,520 M496,497 499,494 M496,497 494,504 492,511 491,518 M499,494 506,495 513,497 521,499 528,501 M497,525 491,518 M497,525 506,524 514,523 523,523 M523,523 525,515 527,508 528,501 M462,500 471,499 479,498 488,497 496,497 M494,477 495,486 499,494 M470,522 477,521 484,520 491,518 M531,499 528,501 M531,499 530,491 530,482 529,474 M523,466 529,474 M495,547 496,540 496,533 497,525 M493,549 486,548 478,550 471,549 M471,549 470,542 469,534 467,527 M532,544 528,537 525,530 523,523 M532,445 528,446 M532,445 540,451 547,457 M529,474 536,472 543,470 550,467 M550,467 547,457 M532,445 540,441 547,436 M547,457 553,453 560,448 M547,436 553,442 560,448 M550,467 555,470 M555,470 560,468 M560,468 563,459 564,449 M560,448 564,449 M544,414 544,421 545,429 547,436 M544,414 555,411 M555,411 561,420 567,428 M547,436 554,433 561,431 567,428 M530,408 537,412 544,414 M561,405 555,411 M584,424 573,430 M584,424 584,410 M573,430 567,428 M573,430 572,439 570,447 M570,447 564,449 M433,579 442,580 450,579 459,581 468,581 M433,579 436,571 438,562 441,553 M441,553 448,554 456,556 463,557 M468,581 467,573 465,565 463,557 M432,580 433,579 M440,552 441,553 M471,549 463,557 M433,12 439,18 M433,12 436,6 M439,18 448,13 458,10 M457,6 458,10 M427,13 433,12 M447,34 443,26 439,18 M464,28 467,18 M464,28 457,32 449,35 M467,18 458,10 M478,6 478,11 M478,11 467,18 M587,6 587,8 M605,9 597,10 590,11 M590,11 587,8 M602,35 592,29 M590,11 591,20 592,29 M582,55 584,57 M582,55 580,47 578,39 M592,29 585,35 578,39 M761,771 754,765 746,761 739,755 M779,747 772,741 766,736 759,731 M739,755 744,749 749,743 754,737 759,731 M752,689 753,699 753,708 754,717 M726,715 731,719 M731,719 739,718 746,717 754,717 M780,713 773,715 765,717 758,721 M759,731 758,721 M758,721 754,717 M705,752 706,761 707,769 M705,752 711,747 M711,747 720,748 729,748 M725,779 728,773 732,767 735,761 739,755 M725,779 717,775 708,773 M739,755 729,748 M683,752 690,753 698,752 705,752 M705,727 709,737 711,747 M731,719 731,726 730,733 730,741 729,748 M730,796 726,788 725,779 M596,620 588,616 580,613 M596,620 590,628 585,636 M580,613 574,621 568,630 M585,636 577,633 568,630 M570,596 573,597 M563,630 568,630 M573,597 577,605 580,613 M587,645 585,636 M608,637 608,628 607,620 M626,620 620,618 M620,618 607,620 M596,620 602,618 M607,620 602,618 M723,344 716,350 709,356 M723,344 718,338 714,333 709,328 M709,356 704,349 699,342 M699,342 702,335 704,328 M709,328 704,328 M740,335 734,339 728,343 M727,316 721,320 715,324 709,328 M728,343 723,344 M698,321 704,328 M750,358 744,362 738,367 M728,343 730,351 732,358 734,365 M738,367 734,365 M682,327 680,340 M699,342 688,345 M688,345 680,340 M655,331 657,339 658,347 M680,340 672,342 665,344 658,347 M651,348 646,354 641,360 636,366 631,372 M651,348 657,347 M647,378 651,370 656,363 661,356 M661,356 657,347 M784,304 782,294 M770,286 775,286 M782,294 775,286 M578,472 569,469 560,468 M578,472 585,467 M570,447 579,453 587,460 M587,460 585,467 M652,422 647,431 642,440 M626,409 630,417 631,427 633,436 M633,436 642,440 M669,534 663,528 658,521 653,515 M680,515 670,506 M670,506 662,510 653,515 M684,488 678,492 671,495 M670,506 671,495 M806,616 793,611 M806,592 805,590 M793,611 792,604 791,597 M805,590 792,595 M791,597 792,595 M801,636 806,627 M784,619 793,611 M806,588 805,590 M767,597 775,597 783,597 791,597 M786,579 788,587 792,595 M296,632 294,640 291,648 M179,662 186,662 194,661 201,660 M177,630 184,633 191,635 198,636 205,638 M205,638 203,646 201,653 201,660 M206,665 201,660 M630,372 623,364 M599,368 601,366 M623,364 615,365 608,366 601,366 M586,342 594,342 602,342 M601,366 601,358 602,350 602,342 M35,661 33,653 31,645 29,637 M35,661 44,660 53,661 61,660 M62,635 54,636 46,635 38,634 30,635 M30,635 29,637 M6,664 13,664 20,663 27,663 34,662 M34,662 35,661 M29,637 21,639 14,641 6,643 M93,805 91,804 M91,804 85,804 M64,663 63,671 62,679 61,687 M34,662 34,670 33,677 33,685 32,692 M61,687 54,688 47,690 39,691 32,692 M6,689 14,690 22,692 31,694 M31,694 32,692 M7,385 6,378 M7,385 13,387 20,389 27,391 M6,367 14,362 22,358 29,354 M37,384 27,391 M37,384 36,375 36,367 34,359 M34,359 29,354 M6,422 14,418 23,415 31,412 M31,411 29,401 27,391 M28,336 29,345 29,354 M28,336 21,336 13,336 6,335 M28,336 33,331 M9,302 18,303 28,304 M33,331 32,322 30,313 28,305 M6,203 7,204 M7,204 6,207 M32,169 31,177 31,184 32,192 M7,204 15,201 22,197 30,196 M32,192 30,196 M31,411 38,412 46,411 53,412 61,411 M61,411 59,403 60,396 59,388 M37,384 46,384 55,384 M55,384 59,388 M176,170 175,178 173,186 171,193 M149,194 152,196 M171,193 162,195 152,196 M349,496 348,496 M378,490 379,480 380,471 M348,469 348,478 348,487 348,496 M348,469 352,465 M380,471 373,469 366,468 359,466 352,465 M410,466 402,467 395,468 388,470 381,471 M324,359 325,368 327,376 327,385 M324,359 323,358 M323,358 316,358 309,357 302,359 295,358 M327,385 320,385 312,387 305,388 297,388 M297,388 297,380 296,373 295,365 295,358 M326,412 321,417 M326,412 328,404 328,395 330,387 M321,417 314,415 306,413 298,411 M330,387 327,385 M295,390 297,388 M292,355 295,358 M292,355 283,357 274,359 265,361 M266,389 266,382 266,375 265,368 265,361 M562,81 573,77 M562,81 558,76 M582,55 575,58 567,59 559,61 M559,61 556,64 M558,76 556,64 M465,59 472,54 476,47 M464,28 470,34 477,39 M477,39 476,47 M504,6 506,11 M506,11 513,9 519,6 M540,34 539,42 539,49 538,57 M540,34 533,32 M533,32 523,34 M523,34 521,42 518,50 M518,50 525,52 532,54 538,57 M722,91 720,82 M722,91 715,96 708,101 M720,82 713,78 706,73 M708,101 697,100 M697,100 697,92 698,85 698,77 M698,77 706,73 M724,114 724,104 723,94 M713,114 709,108 708,101 M723,94 722,91 M687,111 693,106 697,100 M678,83 689,76 M689,76 698,77 M747,112 747,102 M777,105 777,110 M777,105 770,102 764,97 758,94 M747,102 758,94 M723,94 733,96 742,98 M747,102 742,98 M806,88 798,91 790,93 M790,93 795,100 800,107 805,114 M806,114 805,114 M779,79 787,75 795,70 M779,79 783,92 M783,92 790,93 M783,92 780,99 777,105 M802,117 805,114 M568,177 576,182 M568,177 569,168 570,159 M570,159 577,151 M578,182 576,182 M578,182 583,176 587,170 592,165 596,159 M577,151 586,153 594,155 M594,155 596,159 M560,213 568,208 576,202 M550,180 559,178 568,177 M576,202 576,192 576,182 M546,150 554,153 562,156 570,159 M573,136 575,144 577,151 M546,142 554,135 562,129 M584,206 576,202 M584,206 593,202 601,197 M601,197 597,191 592,185 M592,185 585,184 578,182 M591,127 600,136 M600,136 596,145 594,155 M608,172 614,177 618,184 M608,172 606,164 M606,164 614,158 M614,158 622,161 629,163 M629,163 631,172 632,181 M632,181 618,184 M592,185 600,178 608,172 M596,159 606,164 M642,184 632,181 M642,184 649,178 M640,153 635,158 629,163 M561,125 557,113 M531,114 534,110 M534,110 541,112 549,113 557,113 M574,98 565,96 M557,113 561,104 565,96 M562,81 563,92 M563,92 565,96 M478,88 487,90 497,92 M478,88 472,94 464,97 457,103 M464,110 472,110 481,109 489,106 497,106 M464,110 457,103 M497,92 498,101 M497,106 498,101 M455,102 457,103 M463,66 472,71 M472,71 475,79 478,88 M471,138 469,131 468,124 466,117 464,110 M500,115 497,106 M600,243 601,234 603,225 M600,243 593,246 586,249 M579,244 586,249 M579,244 579,236 577,227 M577,227 584,223 591,220 M591,220 603,225 M585,257 586,249 M613,252 606,248 600,243 M566,245 579,244 M559,215 565,219 571,223 577,227 M584,206 588,213 591,220 M642,184 644,192 M667,182 668,191 669,200 M644,192 652,195 661,197 669,200 M635,240 639,232 644,224 648,217 M656,239 660,229 663,220 M648,217 650,215 M650,215 663,220 M620,220 610,220 M620,219 625,208 M610,220 608,213 605,205 603,198 M625,208 622,201 620,195 616,189 M603,198 609,193 616,189 M633,241 629,234 625,227 620,220 M603,225 610,220 M648,217 641,217 634,218 627,219 620,219 M642,199 646,207 650,215 M642,199 634,203 625,208 M601,197 603,198 M618,184 616,189 M644,192 642,199 M613,123 621,123 629,123 M613,123 606,130 600,136 M600,136 607,138 613,141 620,143 M620,143 630,137 M630,137 631,124 M631,124 629,123 M599,110 606,117 613,123 M615,99 619,107 625,114 629,123 M614,158 618,151 620,143 M640,148 635,143 630,137 M643,118 631,124 M675,248 678,239 683,230 M705,246 700,239 M683,230 691,235 700,239 M727,225 721,216 M721,216 708,219 M708,219 705,226 704,233 700,239 M762,207 773,201 M762,207 755,205 747,203 M773,201 770,194 768,187 M746,186 747,194 746,203 M746,186 754,186 762,182 M762,182 768,187 M782,204 773,201 M761,223 762,215 762,207 M781,224 777,226 M744,225 744,218 745,210 747,203 M788,174 782,178 775,183 768,187 M719,198 723,206 M739,180 746,186 M723,206 731,205 738,204 746,203 M764,166 763,174 762,182 M721,216 723,206 M316,75 317,66 318,56 M337,50 323,50 M318,56 323,50 M290,57 295,54 M318,56 310,54 303,53 295,54 M289,21 297,28 304,35 M295,54 300,45 304,35 M317,20 311,27 305,35 M317,20 327,21 M327,21 325,28 320,34 318,41 M305,35 318,41 M305,9 312,13 317,20 M304,35 305,35 M330,21 327,21 M323,50 318,41 M113,27 117,33 123,38 129,42 M113,27 115,20 117,13 119,6 M129,42 135,37 140,31 146,26 151,20 M151,6 150,13 151,20 M129,44 129,42 M105,30 113,27 M157,29 151,20 M321,241 314,244 306,246 299,248 291,250 M322,274 314,274 305,273 296,272 M296,272 294,264 293,257 291,250 M205,279 204,288 205,296 204,305 M205,279 214,280 222,281 231,282 M204,305 207,309 M207,309 215,307 223,307 231,305 239,303 M239,303 236,296 234,289 231,282 M271,145 267,152 264,160 262,168 M235,147 236,161 M262,168 253,165 245,163 236,161 M296,171 288,171 280,171 272,171 264,171 M262,168 264,171 M207,328 208,319 207,309 M206,329 199,331 192,332 185,334 178,336 M204,305 196,305 188,306 180,306 172,306 M178,336 177,328 175,321 174,313 172,306 M205,279 197,278 190,277 182,276 M172,306 169,303 M169,303 171,295 173,287 176,279 M182,276 176,279 M410,277 407,280 M384,281 392,281 399,281 407,280 M348,276 351,285 352,294 354,303 M384,281 383,290 382,299 380,308 M380,308 372,307 363,306 355,304 M354,303 355,304 M375,337 367,337 359,337 351,337 M375,337 376,344 378,351 379,358 M351,337 350,346 348,356 M379,358 376,361 M376,361 367,364 357,368 M357,368 353,362 348,356 M324,359 332,357 340,357 348,356 M323,358 323,349 324,340 326,331 M349,334 341,333 333,333 326,331 M349,334 351,337 M405,360 396,359 388,358 379,358 M385,387 382,379 379,370 376,361 M354,390 363,390 372,392 381,392 M354,390 351,386 M351,386 355,377 357,368 M351,386 341,386 330,387 M321,417 322,425 323,433 322,442 M322,442 321,443 M295,441 296,442 M321,443 312,444 304,442 296,442 M233,443 240,442 247,442 254,441 262,441 269,441 M233,443 235,451 235,459 237,467 M237,467 241,470 M241,470 251,470 260,472 M269,441 268,449 267,457 266,465 M266,465 260,472 M351,551 342,550 333,548 324,548 M354,527 347,526 340,526 333,526 326,525 M324,548 324,540 325,533 326,525 M322,578 322,571 324,563 324,556 323,549 M324,548 323,549 M348,496 340,497 331,498 M331,498 328,506 326,514 324,521 M326,525 324,521 M205,584 202,581 M205,584 213,582 221,580 229,579 237,577 M202,581 203,572 204,564 205,556 M237,577 235,566 232,556 M232,556 231,555 M205,556 209,552 M209,552 216,553 224,553 231,555 M555,488 563,490 570,492 M555,488 548,491 543,495 537,500 M537,500 542,504 548,509 M548,509 557,511 566,512 575,513 M570,492 572,499 573,506 575,513 M573,489 575,480 578,472 M573,489 570,492 M555,470 554,479 555,488 M531,499 537,500 M550,533 549,525 549,517 548,509 M577,516 575,513 M583,515 586,507 590,499 592,491 M592,491 582,490 573,489 M565,7 571,11 M565,7 552,8 M571,11 569,19 568,26 566,34 M550,11 552,8 M550,11 548,18 546,25 544,32 M544,32 552,34 559,37 M559,37 566,34 M565,6 565,7 M587,8 579,10 571,11 M551,6 552,8 M578,39 566,34 M529,14 524,6 M529,14 536,13 543,12 550,11 M540,34 544,32 M529,14 531,23 533,32 M559,61 558,53 558,45 559,37 M556,64 547,61 538,58 M517,691 513,697 M578,570 585,575 591,579 M573,597 580,596 587,593 M591,579 589,586 587,593 M602,618 600,609 600,600 M587,593 594,596 600,600 M624,590 625,584 M624,590 620,592 M620,592 608,593 M625,584 622,577 618,571 M608,593 605,583 602,574 M618,571 611,570 604,570 M604,570 602,574 M641,599 633,593 624,590 M647,573 639,576 633,581 625,584 M620,618 621,609 619,601 620,592 M600,600 608,593 M627,559 623,565 618,571 M591,579 602,574 M600,561 604,570 M709,356 709,359 M734,365 726,367 717,366 M709,359 717,366 M793,267 782,270 M793,267 788,258 784,249 M782,270 775,268 768,265 762,261 M784,249 776,248 768,248 M768,248 765,255 762,261 M755,266 762,261 M775,286 778,278 782,270 M795,233 789,241 784,249 M768,246 768,248 M806,267 801,266 M797,279 797,268 M797,279 802,286 806,294 M801,266 797,268 M806,247 805,257 801,266 M782,294 787,290 791,284 797,279 M793,267 797,268 M592,491 597,488 M585,467 591,474 598,481 M597,488 598,481 M618,437 620,451 M618,437 605,433 M620,451 611,454 603,455 M601,435 599,444 598,452 M601,435 605,433 M598,452 603,455 M615,412 611,418 608,426 605,433 M633,436 626,436 618,437 M584,424 593,429 601,435 M587,460 598,452 M598,481 605,478 613,476 621,474 M621,474 615,468 609,461 603,455 M211,634 218,635 226,636 233,638 M211,634 210,627 209,620 208,612 206,605 M233,638 234,630 235,622 237,614 237,606 M237,606 229,606 222,605 214,605 206,605 M180,612 189,610 197,607 206,605 M205,638 211,634 M238,605 237,606 M239,579 237,577 M205,584 205,595 206,605 M172,579 179,580 187,580 195,580 202,581 M236,642 235,649 M236,642 244,640 252,638 260,636 M260,636 264,643 267,651 M233,638 236,642 M261,635 260,636 M630,329 623,329 616,329 M630,329 631,337 632,345 M632,345 625,350 M625,350 618,347 612,343 606,338 M616,329 607,333 M607,333 606,338 M637,322 630,329 M621,310 620,320 616,329 M651,348 642,348 632,345 M623,364 625,350 M602,342 606,338 M597,316 602,325 607,333 M32,606 31,598 28,590 27,582 M32,606 27,612 M27,612 20,612 13,612 6,612 M27,582 18,580 9,580 M6,581 9,580 M54,607 47,607 39,607 32,606 M30,635 29,627 28,620 27,612 M6,568 9,580 M32,706 31,694 M96,772 96,773 M96,772 94,766 93,759 91,752 M96,773 85,775 M75,745 69,744 M118,774 111,774 104,773 96,772 M91,804 93,796 94,789 95,781 96,773 M116,739 108,742 100,746 M117,721 108,720 100,720 91,720 M91,720 89,727 87,734 86,741 M58,723 52,721 M64,690 64,699 63,708 62,717 M64,690 73,692 81,693 89,694 M62,717 71,717 79,716 87,715 M89,694 89,701 88,708 87,715 M61,687 64,690 M58,723 62,717 M92,692 89,694 M91,720 87,715 M39,550 48,551 57,553 M39,550 33,557 M33,557 32,564 32,571 31,578 M57,553 59,562 60,571 62,580 M62,580 54,579 46,579 38,578 31,578 M6,527 15,526 24,526 33,526 M33,526 35,534 37,542 39,550 M6,551 15,553 24,554 33,557 M27,582 31,578 M66,584 62,580 M28,304 30,297 31,290 33,282 35,275 M6,276 13,276 20,276 28,276 35,275 M6,239 10,248 M6,252 10,248 M95,192 91,198 M64,172 63,182 65,191 M65,191 74,193 82,196 91,198 M32,192 39,193 46,194 54,194 61,196 M65,191 61,196 M28,305 36,303 44,303 52,301 59,301 M59,301 58,293 57,285 55,277 M35,275 37,272 M37,272 46,275 55,277 M59,301 65,305 M88,282 81,280 75,278 68,275 62,272 M88,282 86,292 82,301 M55,277 62,272 M65,305 74,304 82,301 M123,193 123,200 123,207 121,214 121,222 M148,225 149,218 150,211 151,203 152,196 M148,225 146,227 M121,222 129,223 138,225 146,227 M61,411 63,413 M59,388 66,386 74,385 82,385 90,384 M90,384 93,391 M63,413 71,412 80,410 89,408 M93,391 91,400 89,408 M205,279 208,271 209,262 212,253 M179,249 180,258 182,267 182,276 M179,249 186,248 194,248 201,247 208,247 M212,253 208,247 M208,496 201,495 194,494 186,494 179,493 M208,496 209,488 210,481 211,473 M206,467 199,470 191,470 183,473 176,475 M206,467 211,473 M176,475 177,484 179,493 M234,497 236,488 238,479 241,470 M234,497 226,497 217,497 209,496 M237,467 229,469 220,471 211,473 M348,441 350,434 351,427 353,419 M348,441 352,446 M352,446 361,445 370,444 378,443 M353,419 357,416 M357,416 364,417 371,418 378,419 M378,419 380,429 382,439 M382,439 378,443 M326,412 335,415 344,417 353,419 M322,442 331,442 340,441 348,441 M348,469 340,467 331,467 322,466 M352,465 352,455 352,446 M322,466 322,458 321,451 321,443 M381,471 380,461 379,452 378,443 M354,390 356,398 355,407 357,416 M385,412 378,419 M408,442 400,440 391,439 382,439 M259,357 251,358 243,360 235,361 M259,357 260,348 261,339 259,331 M235,361 233,352 231,343 229,335 M259,331 250,329 242,325 M242,325 235,330 229,335 M292,355 292,344 293,334 M265,361 259,357 M266,326 272,329 279,331 287,331 293,334 M266,326 259,331 M207,328 214,331 222,332 229,335 M239,303 240,311 241,318 242,325 M487,33 494,37 500,42 M487,33 489,25 491,18 M500,42 506,35 511,29 M511,29 508,21 504,14 M491,18 504,14 M478,11 484,15 491,18 M477,39 487,33 M506,11 504,14 M523,34 511,29 M558,76 551,79 543,81 536,82 M538,58 532,65 527,72 M527,72 531,77 536,82 M563,92 556,93 549,94 542,95 534,96 M536,82 534,96 M534,110 532,101 M534,96 532,101 M498,101 506,101 514,100 522,101 529,100 M529,100 532,101 M488,68 497,71 505,75 M488,68 487,60 485,52 M508,58 508,72 M508,58 501,49 M508,72 506,74 M485,52 493,51 501,49 M505,75 506,74 M472,71 480,69 488,68 M497,92 501,84 505,75 M476,47 485,52 M518,50 508,58 M527,72 517,72 508,72 M500,42 501,49 M529,100 524,93 518,87 512,81 506,74 M787,52 779,54 771,54 M771,54 768,45 766,37 M757,12 757,19 754,26 754,34 M766,37 754,34 M720,82 728,79 736,74 M742,98 744,88 743,79 M736,74 743,79 M706,73 708,64 709,54 M722,50 709,54 M722,50 730,54 739,58 M736,74 737,66 739,58 M679,6 682,8 M688,6 682,8 M668,18 674,13 681,10 M681,10 682,8 M717,6 711,12 706,18 M721,6 734,11 M734,11 735,19 736,27 M706,18 705,23 M705,23 712,27 720,30 727,33 M736,27 727,33 M690,6 697,13 706,18 M739,7 734,11 M749,34 754,34 M749,34 743,31 736,27 M722,50 726,42 727,33 M749,34 747,42 744,49 741,57 M739,58 741,57 M670,217 672,205 M670,217 680,223 M680,223 689,219 697,214 M672,205 680,200 688,194 M697,214 697,205 698,197 M698,197 688,194 M663,220 670,217 M669,200 672,205 M683,230 680,223 M708,219 697,214 M683,179 686,187 688,194 M707,192 698,197 M266,326 267,319 268,312 269,305 M239,303 249,300 259,297 M269,305 259,297 M297,330 297,321 295,312 295,302 M297,330 306,330 316,330 325,330 M295,302 303,301 311,301 319,300 M325,330 325,320 327,311 M319,300 327,311 M293,334 297,330 M292,300 284,302 277,303 269,305 M292,300 295,302 M327,278 324,285 322,292 319,300 M296,272 291,280 M291,280 291,290 292,300 M354,303 345,306 336,308 327,311 M355,304 353,312 353,320 352,327 349,334 M322,224 314,221 305,219 296,217 M296,194 295,196 M295,196 296,206 296,217 M291,250 293,242 291,235 291,228 292,220 M296,217 292,220 M270,248 277,247 284,250 291,250 M270,248 269,240 267,233 266,226 265,219 M292,220 283,220 274,219 265,219 M269,248 267,255 266,262 264,269 262,275 M269,248 260,247 251,246 242,247 M241,271 251,273 261,276 M241,271 239,262 236,254 M262,275 261,276 M242,247 236,254 M291,280 284,279 277,276 269,276 262,275 M231,282 236,276 241,271 M259,297 261,287 261,276 M212,253 220,253 228,254 236,254 M202,167 204,168 M236,161 229,168 M204,168 212,167 220,167 229,168 M147,304 149,305 M147,304 138,304 129,303 120,302 M149,305 148,313 147,321 147,329 M147,329 140,329 133,330 126,331 118,332 M118,331 117,324 116,317 115,310 M120,302 115,310 M178,336 170,334 163,332 155,330 147,329 M169,303 159,304 149,305 M88,282 93,278 M115,281 108,279 100,280 93,278 M115,281 117,288 119,295 120,302 M82,301 91,310 M91,310 99,310 107,310 115,310 M381,329 381,319 381,309 M381,329 388,331 395,333 401,336 408,337 M381,309 388,308 396,308 404,307 411,307 M408,337 417,327 M417,327 415,317 412,307 M375,337 381,329 M410,355 410,346 408,337 M407,280 408,289 410,298 411,307 M433,329 425,328 417,327 M434,297 427,300 419,304 412,307 M322,466 319,470 M296,442 295,451 295,459 294,468 M294,468 302,468 311,469 319,470 M266,465 275,466 284,468 293,469 M294,468 293,469 M331,498 326,493 320,490 M320,490 319,480 319,470 M324,521 315,521 306,520 298,519 M320,490 313,493 306,495 299,496 292,499 M298,519 296,513 294,506 292,499 M260,472 262,480 267,488 269,497 M293,469 292,476 292,484 292,491 292,498 M269,497 276,498 284,499 292,498 M741,418 747,412 753,405 M741,418 732,414 723,410 M723,410 727,404 731,397 735,391 740,385 M753,405 751,397 748,388 M748,388 740,385 M741,421 741,418 M762,408 753,405 M720,435 720,427 721,418 721,410 M721,410 723,410 M764,380 756,384 748,388 M738,367 739,376 740,385 M717,366 717,375 716,384 M716,384 724,384 732,385 740,385 M702,432 704,423 704,414 M721,410 718,409 M704,414 711,411 718,409 M681,407 684,405 M704,414 698,411 691,407 684,405 M716,384 711,388 M718,409 717,401 713,395 711,388 M598,517 607,513 M597,488 602,493 606,499 M606,499 607,513 M617,530 614,522 610,514 M607,513 610,514 M606,499 612,494 617,489 623,484 M621,474 623,484 M91,198 91,208 91,217 M121,222 117,224 M91,217 99,220 108,222 117,224 M61,196 60,204 60,211 60,218 M91,217 87,221 M60,218 69,219 78,220 87,221 M117,224 117,232 114,239 114,247 M114,247 105,249 97,251 89,252 M89,252 84,249 M87,221 86,228 85,235 85,242 84,249 M93,278 91,270 91,261 89,252 M62,272 63,265 66,259 68,252 M68,252 76,251 84,249 M88,335 88,343 88,351 86,358 M87,334 78,332 70,329 61,326 M86,358 78,358 70,358 63,358 M62,357 59,348 58,340 55,331 M62,357 63,358 M55,331 61,326 M91,310 91,318 89,326 87,334 M118,331 110,332 103,333 95,334 88,335 M65,305 63,312 62,319 61,326 M55,384 57,375 60,366 63,358 M92,364 91,374 90,384 M92,364 86,358 M33,331 41,332 48,331 55,331 M34,359 43,358 53,357 62,357 M122,273 121,264 120,254 M122,273 130,273 138,274 147,274 M120,254 127,252 135,250 143,248 150,245 M147,274 151,269 M151,269 153,262 153,255 153,248 M153,248 150,245 M115,281 122,273 M114,247 120,254 M147,304 147,297 146,289 147,281 147,274 M146,227 150,236 150,245 M176,279 168,276 159,273 151,269 M179,249 177,247 M177,247 169,246 161,247 153,248 M182,219 173,221 165,222 156,223 148,225 M182,219 180,226 179,233 178,240 177,247 M120,394 121,402 121,411 121,419 M120,394 125,390 M121,419 128,419 136,419 143,418 150,418 M150,418 152,415 M152,415 150,408 147,401 144,395 142,388 M125,390 133,389 142,388 M92,364 99,362 107,360 115,359 M93,391 102,391 111,393 120,394 M125,390 122,382 120,374 118,367 115,359 M118,332 119,340 119,347 120,355 M120,355 115,359 M147,329 147,337 146,344 146,351 146,359 M120,355 128,356 137,358 146,359 M770,55 763,58 756,61 M770,55 774,62 775,70 777,78 M756,61 756,70 756,79 M777,78 769,81 759,82 M759,82 756,79 M771,54 770,55 M741,57 749,59 756,61 M779,79 777,78 M743,79 756,79 M758,94 759,82 M697,42 696,34 M697,42 691,47 684,51 677,56 M696,34 688,31 M688,31 679,31 670,31 M670,31 669,39 668,46 667,54 M677,56 668,55 M668,55 667,54 M709,54 702,49 697,42 M705,23 701,30 696,34 M689,76 685,70 681,63 677,56 M681,10 684,17 685,24 688,31 M666,28 670,31 M660,54 667,54 M667,73 668,64 668,55 M264,171 264,178 263,186 263,193 M229,168 230,177 231,186 233,195 M263,193 255,192 248,194 240,194 233,195 M295,196 287,196 280,197 273,196 265,197 M263,193 265,197 M265,219 264,217 M265,197 266,207 264,217 M171,193 179,200 M204,168 203,176 203,183 203,190 M203,190 195,194 187,197 179,200 M182,219 182,218 M179,200 180,209 182,218 M206,329 207,336 206,344 208,351 206,358 M235,361 228,360 221,360 214,359 206,358 M179,393 179,384 179,376 179,368 179,360 M179,393 171,390 163,386 156,383 148,380 M150,363 148,371 148,380 M150,363 158,361 166,359 175,357 M175,357 179,360 M179,393 188,391 197,388 206,385 M206,385 205,378 202,371 201,364 M201,364 193,362 186,362 179,360 M179,393 178,402 177,411 M177,411 169,413 161,414 152,415 M142,388 148,380 M146,359 150,363 M178,336 176,346 175,357 M206,358 201,364 M204,415 205,422 206,429 207,436 208,443 M204,415 196,415 187,414 179,414 M179,414 181,421 182,428 181,436 182,443 M182,443 189,444 196,446 203,447 M203,447 208,443 M177,411 179,414 M150,441 158,444 168,445 176,448 M150,441 150,433 150,426 150,418 M176,448 182,443 M172,470 173,463 175,456 176,448 M172,470 176,475 M206,467 204,457 203,447 M233,443 231,441 M231,441 223,441 216,443 208,443 M265,500 265,507 264,515 264,522 262,529 M265,500 256,501 247,502 238,502 M262,529 253,527 245,526 236,525 M238,502 239,510 237,517 236,525 M234,497 238,502 M269,497 265,500 M209,496 209,505 209,513 209,521 M209,521 217,523 227,524 236,525 M209,552 207,544 205,535 204,526 M231,555 232,547 233,540 235,533 236,525 M204,526 209,521 M296,522 288,525 280,527 272,530 265,532 M296,522 297,530 298,538 300,546 M290,557 280,554 270,552 M290,557 295,552 300,546 M265,532 266,539 266,546 M270,552 266,546 M298,519 296,522 M262,529 265,532 M323,549 315,548 307,547 300,546 M295,575 292,566 290,557 M260,577 264,568 267,560 270,552 M232,556 241,555 249,551 257,548 266,546 M685,395 694,390 702,386 M685,395 680,388 675,381 M702,386 700,376 698,366 M675,381 676,369 M676,369 686,364 M686,364 698,366 M711,388 702,386 M684,405 685,395 M654,388 661,387 668,384 675,381 M709,359 698,366 M661,356 669,362 676,369 M688,345 686,354 686,364 M642,440 644,445 M620,451 625,456 630,461 M630,461 637,454 644,445 M621,474 626,470 M630,461 626,470 M654,450 652,450 M652,450 644,445 M667,469 662,475 659,481 M671,495 666,490 660,485 M659,481 660,485 M652,450 651,458 650,466 648,475 M659,481 648,475 M626,470 635,473 644,475 M648,475 644,475 M627,489 634,491 641,491 M627,489 627,499 626,510 M626,510 634,513 642,517 M647,496 641,491 M647,496 646,505 646,515 M642,517 646,515 M623,484 627,489 M644,475 643,483 641,491 M610,514 618,512 626,510 M639,533 641,525 642,517 M660,485 654,491 647,496 M653,515 646,515 M40,219 50,219 60,218 M40,219 33,227 M60,218 60,228 60,237 60,246 M33,227 32,237 31,247 M60,246 51,247 42,248 33,249 M31,247 33,249 M30,196 34,203 36,212 40,219 M6,216 13,219 19,222 26,225 33,227 M68,252 60,246 M10,248 20,248 31,247 M37,272 36,265 34,257 33,249 M176,525 174,523 M176,525 176,532 177,539 177,547 179,554 M174,523 165,524 155,526 M155,526 154,534 151,541 148,548 M148,548 155,551 161,553 168,555 175,558 M179,554 175,558 M204,526 195,526 186,526 176,525 M179,493 176,496 M176,496 176,505 175,514 174,523 M205,556 197,555 188,554 179,554 M176,496 168,496 159,496 151,495 142,495 M142,495 144,504 146,512 148,521 M148,521 155,526 M142,552 148,548 M171,579 173,572 173,565 175,558 M6,495 14,494 23,493 31,492 M33,526 34,525 M31,492 35,498 M34,525 34,516 35,507 35,498 M6,469 14,469 23,470 31,471 M31,492 33,485 35,478 M31,471 35,478 M10,443 17,444 24,445 31,446 M31,471 31,462 31,454 31,446 M35,498 42,498 49,498 56,500 63,500 M63,500 61,493 60,486 60,479 59,472 M35,478 43,476 51,475 59,472 M31,412 33,419 34,427 36,434 37,442 M31,446 37,442 M121,551 119,549 M148,521 141,523 134,524 127,526 120,528 M119,549 119,539 119,529 M120,528 119,529 M89,408 94,417 M121,419 118,423 M94,417 102,419 110,421 118,423 M150,441 147,444 M118,423 118,431 118,439 M118,439 119,440 M147,444 140,443 133,442 126,441 119,440 M231,197 234,206 236,214 239,223 M231,197 222,199 212,201 M212,201 210,208 208,215 205,222 M238,224 231,224 224,226 217,227 209,228 M238,224 239,223 M209,228 205,222 M264,217 255,219 248,222 239,223 M233,195 231,197 M203,190 208,195 212,201 M182,218 190,219 197,222 205,222 M208,247 208,237 209,228 M242,247 241,240 239,232 238,224 M211,388 221,387 231,386 M211,388 210,397 209,405 207,413 M207,413 216,415 225,417 234,419 M234,389 231,386 M234,389 234,396 235,403 235,410 236,417 M236,417 234,419 M206,385 211,388 M235,361 233,369 232,378 231,386 M204,415 207,413 M231,441 232,433 233,426 234,419 M266,389 258,390 250,388 242,390 234,389 M264,417 254,416 245,417 236,417 M37,442 47,442 56,443 M59,472 64,467 M64,467 61,459 59,451 56,443 M63,413 61,421 61,429 62,437 M94,417 91,424 89,431 86,438 M62,437 70,437 78,437 86,438 M62,437 56,443 M118,439 109,442 101,444 92,446 M86,438 92,446 M120,528 120,520 120,512 120,504 120,496 M120,496 127,496 134,494 142,495 M147,444 146,451 144,458 143,465 M119,440 120,448 120,456 120,464 M120,464 128,465 135,465 143,465 M172,470 164,471 156,471 148,471 M142,495 144,487 146,479 148,471 M148,471 143,465 M64,467 71,468 79,469 86,470 M92,446 92,456 90,466 M86,470 90,466 M120,464 118,466 M90,466 100,466 109,466 118,466 M120,496 119,495 M118,466 118,473 118,481 119,488 119,495 M34,525 42,524 49,522 57,522 65,522 M63,500 65,502 M65,502 64,512 65,522 M86,470 88,478 89,485 90,493 M65,502 73,498 82,495 90,493 M119,495 111,497 103,497 95,497 M90,493 95,497 M119,529 111,526 102,523 93,520 M95,497 96,504 95,512 93,520 M67,524 76,526 85,527 M67,524 65,533 63,541 61,550 M85,527 87,535 89,543 91,551 M61,550 70,553 79,552 87,555 M87,555 91,551 M93,520 85,527 M65,522 67,524 M57,553 61,550 M119,549 112,550 105,550 98,551 91,551 M86,578 87,570 88,563 87,555" fill="none" stroke="#606060" stroke-width="1"/>
<g fill="#2a405c" stroke="#1f3349" stroke-width="1">
<path d="M299.4,60.2 304.3,56.5 309.3,55.3 313,59 315.4,65.1 319.1,71.3 323.3,72 321.6,76.2 319.9,79.9 321.6,87.3 324,92.2 322.8,95.9 319.1,88.5 315.4,84.8 314.9,77.4 313,70.1 310.5,65.1 306.8,61.4 303.1,63.9Z"/>
<path d="M368.4,261.4 373.3,258.5 379.5,262.2 385.6,266.4 391.8,270.5 395.5,273.8 396.2,277.4 391.8,275 385.6,271.3 379.5,267.6 374.5,263.9 369.6,263.2Z"/>
<path d="M438.6,376 441.1,369.8 446,366.1 447.2,363.7 451.4,364.9 449.7,368.6 445.5,371.6 443.5,376 440.6,378Z"/>
<path d="M604.4,307 608.8,304.5 612.5,300.9 613.8,294.7 612.5,288.5 615,286.1 617.4,289.8 619.9,286.1 622.9,291 627.3,293.5 624.3,297.2 619.9,300.9 616.2,305.8 611.3,310.7 607.6,313.2 605.1,310.7Z"/>
<path d="M423.8,413.4 426.3,415.9 426.8,420.8 429.2,425.7 431.7,429.4 431.2,434.3 428.7,431.9 426.8,428.2 424.3,423.2 423.8,418.3Z"/>
<path d="M526.1,503.3 529.8,507 532.2,502.1 534.2,509.5 531,516.9 532.2,524.3 536.7,526.7 533.5,531.6 533.5,539 529.8,536.6 526.1,531.6 528.5,526.7 526.1,519.3 527.3,511.9Z"/>
<path d="M539.1,600.6 541.6,600.1 544.5,606 541.6,606Z"/>
<path d="M546,613.4 550.9,612.2 555.9,607.2 558.3,609.7 563.2,610.9 560.8,614.6 553.4,617.1 546,619.6Z"/>
<path d="M783.7,731.6 788.7,736.6 792.4,744 796.1,751.4 789.9,753.8 786.2,744Z"/>
<path d="M123,659 126.7,654 131.6,652.8 135.3,655.3 136.1,661.4 132.9,666.4 128,668.1 123.8,666.4 121.8,662.7Z"/>
<path d="M141,707 144,703.3 147.7,700.9 146.4,697.2 150.1,695.2 153.3,698.4 152.6,703.3 154.6,705.8 151.4,709.5 147.7,711.9 144,713.9 141,711.4Z"/>
<path d="M42.5,680.8 46,680 49.2,683.2 52.1,687.2 49.2,688.8 46,687.2 44.4,684Z"/>
<path d="M57.2,691.2 59.6,688.8 61.2,684.8 62.8,688 62,692.8 65.2,697.6 67.6,701.6 73.2,703.2 77.2,704 81.2,704 84.4,707.2 83.6,710.4 79.6,709.6 75.6,708 70,706.4 66,704.8 62.8,702.4 61.2,697.6 58.8,695.2Z"/>
</g>
<g fill="none" stroke="#806e0c" stroke-width="1">
<path d="M180.9,6 189.5,13.4 195.7,24.5 199.4,35.6 200.6,45.4 200.6,70.1 201.1,87.3 197.7,98.4 193.2,104.5 188.3,111.9 187.1,121.8 183.4,134.1 178.5,144 175.5,150.1 174.8,156.3 166.1,168.6 158.7,183.4 151.4,195.7 145.9,206 M240,6 232.7,13.4 229,20.8 227.7,35.6 226.5,50.3 224,59 217.9,63.9 210.5,67.6 201.9,71.3 M240,6 248.7,14.6 249.9,22 257.3,29.4 262.2,38 263.5,47.9 267.1,55.3 276,60.2 M203.1,206 220.3,193.2 235.1,185.8 252.4,178.5 267.1,173.5 276,171.1 M276,59.7 288.3,61.4 293.2,56.5 300.6,53.5 308,53.3 316.7,59 330.2,67.6 342.5,77.4 362.2,91 374.5,104.5 384.4,111.9 396.7,119.3 404.1,126.7 405.3,134.1 M473.1,6 472.6,20.8 468.2,35.6 459.5,47.9 448.5,55.3 436.1,59 431.2,66.4 427.5,79.9 421.4,92.2 416.4,103.3 410.3,111.9 409,119.3 405.3,129.2 M367.2,126.7 370.9,116.9 379.5,107 394.3,99.6 409,100.9 423.8,104.5 433.7,111.9 437.4,126.7 436.1,139 431.2,148.9 430,158.7 416.4,163.7 399.2,164.9 384.4,162.4 374.5,153.8 367.2,144 365.9,134.1 367.2,126.7 M276,167.4 290.8,164.9 313,160 332.7,160 349.9,151.4 367.2,146.4 384.4,142.7 396.7,140.3 404.1,135.3 M404.1,135.3 423.8,132.9 443.5,131.6 463.2,134.1 482.9,139 497.7,136.6 517.4,136.6 532.2,146.4 546,156.3 M404.1,135.3 402.9,148.9 401.6,163.7 398,176 396.2,190.8 398,206 M404.1,135.3 414,146.4 426.3,156.3 436.1,168.6 446,183.4 455.8,193.2 468.2,206 M588.4,6 586.7,20.8 591.6,33.1 602.7,43 604.6,55.3 601.4,70.1 599,82.4 603.9,94.7 599,103.3 590.3,110.7 595.3,121.8 605.1,134.1 611.3,146.4 616.2,148.4 M546,158.3 565.7,157.5 583,161.2 595.3,160 610.1,151.4 619.9,147.7 M595.3,160 583,173.5 570.6,188.3 555.9,206 M619.9,147.7 639.6,150.1 651.9,146.4 659.3,142.7 671.6,132.9 688.9,126.7 706.1,118.1 723.4,107 743.1,95.9 757.9,87.3 772.7,81.1 787.4,77.4 805.9,71.3 M659.3,142.7 669.2,152.6 672.9,163.7 684,173.5 686.4,183.4 693.8,189.5 706.1,189.5 723.4,188.3 743.1,183.4 760.3,180.9 772.7,176 792.4,173.5 805.9,174.8 M716,189.5 720.9,198.2 727.1,206 M6,257 30.6,255.3 55.3,252.8 79.9,245.4 109.5,235.1 134.1,226.9 153.8,224.5 163.7,224.5 M160.7,224.5 163.7,221.3 172.3,221.3 176,225.2 175.5,230.1 171.1,231.9 161.7,231.4 160.7,224.5 M145.2,206 148.9,214.6 153.8,223.2 160.7,225.7 M176,223.2 188.3,215.9 203.1,206 M164.9,231.4 167.4,247.9 169.8,265.1 173.5,287.3 172.3,309.5 176,329.2 180.9,353.8 183.9,373.5 182.2,393.2 176,406 M398,206 398.7,225.7 394.3,250.3 396.7,275 396.2,299.6 399.2,321.8 402.1,344 402.9,363.7 405.3,380.7 403.4,393 405.3,400.4 409,406 M414,366.1 426.3,351.4 443.5,339 458.3,324.3 470.6,307 485.4,279.9 495.3,262.7 499,250.3 503.9,240.5 512.5,235.6 522.4,238 M470.6,206 475.6,215.9 482.9,228.2 492.8,234.3 503.9,239.3 M522.4,238 532.2,230.6 546,220.8 M522.4,238 532.2,247.9 537.1,262.7 540.8,277.4 544.5,292.2 M414,367.4 428.7,363.7 448.5,362.4 468.2,363.7 485.4,360.7 510,356.3 532.2,353.3 546,351.4 M414,367.4 404.1,376 391.8,385.8 379.5,393.2 357.3,400.6 340.1,406 M388.1,387.1 399.2,384.6 410.3,378.5 416.4,368.6 M584.2,348.9 592.8,335.3 610.1,324.3 629.8,314.4 649.5,304.5 669.2,291 686.4,282.4 706.1,276.2 723.4,265.1 728.3,256.5 743.1,250.3 757.9,243 772.7,233.1 792.4,226.9 805.9,222.8 M725.8,206 735.7,215.9 745.6,217.1 755.4,230.6 760.3,243 764,257.7 770.2,279.9 776.4,294.7 M739.4,257.7 748,267.6 762.8,277.4 777.6,287.3 792.4,299.6 805.9,308.2 M584.2,352.6 607.6,356.3 632.2,362.4 664.3,368.6 693.8,371.1 718.5,372.3 750.5,373.5 762.8,368.6 780,358.7 797.3,346.4 805.9,339 M583,344 573.1,324.3 574.3,309.5 583,294.7 M573.1,324.3 558.3,314.4 550.9,299.6 546,294.7 M546,352.6 560.8,351.4 575.6,347.7 M583,356.3 570.6,366.1 558.3,383.4 550.9,406 M585.4,358.7 595.3,373.5 605.1,393.2 610.1,406 M575.6,342.7 583,336.6 592.8,336.6 594,353.8 590.3,361.2 580.5,362.4 575.1,356.3 575.6,342.7 M546,215.9 553.4,209.7 557.1,206 M6,460.7 30.6,463.2 55.3,466.4 77.4,471.3 89.8,476.2 99.6,475.5 114.4,473.8 134.1,472.5 146.4,478.7 153.8,479.9 173.5,479.4 198.2,476.2 222.8,475 252.4,473.8 276,468.8 M176,406 168.6,418.3 162.4,430.6 161.2,450.3 156.3,465.1 151.4,477.4 146.4,487.3 139,502.1 134.1,516.9 131.6,539 130.4,563.7 129.2,583.4 126.7,606 M147.7,478.7 153.8,468.8 M257.3,475 249.9,492.2 242.5,507 236.4,519.3 235.1,529.2 227.7,536.6 220.3,546.4 215.4,556.3 215.4,573.5 212.9,588.3 205.6,606 M409,406 411.5,415.9 420.1,430.6 426.3,447.9 433.7,462.7 439.1,472 M439.1,472 460.8,472 485.4,463.9 510,450.3 522.4,433.1 534.7,415.9 546,407.2 M439.1,472 437.4,479.9 428.7,497.2 418.9,516.9 406.6,536.6 391.8,553.8 374.5,569.8 349.9,585.8 325.3,598.2 310.5,606 M341.3,406 325.3,423.2 308,440.5 293.2,457.7 280.9,466.4 276,468.1 M612.5,406 619.9,414.6 627.3,422 632.2,429.4 633.5,436.8 631,450.3 629.8,470.1 630.3,489.8 631,504.5 634.7,521.8 642.1,536.6 647,546.4 649.5,563.7 654.4,583.4 659.3,598.2 660.6,606 M627.3,422 637.2,429.4 644.5,438 651.9,445.4 666.7,452.8 684,460.2 706.1,465.1 730.8,467.6 760.3,472.5 780,479.9 799.8,487.3 805.9,493.5 M804.7,536.6 801,553.8 799.8,563.7 792.4,578.5 786.2,593.2 785,606 M276,642.5 285.9,640.5 295.7,635.6 305.6,629.4 313,622.8 325.3,624.5 340.1,626.9 354.8,631.9 364.7,636.8 374.5,638 384.4,634.3 394.3,626.9 404.1,622 423.8,618.3 443.5,616.3 455.8,621.3 473.1,617.1 480.5,615.4 497.7,617.1 515,615.9 532.2,623.2 546,625.7 M309.3,606 306.8,613.4 305.6,623.2 306.8,629.4 M546,627.7 563.2,634.3 583,640 612.5,639.3 644.5,645.4 674.1,651.6 693.8,654 706.1,660.2 730.8,661.4 755.4,659 778.8,655.3 M660.6,606 666.7,618.3 676.6,630.6 691.4,643 703.7,659 713.5,672.5 719.7,689.8 725.8,707 738.2,724.3 745.6,744 748,763.7 754.2,783.4 754.9,792 M783.7,606 787.4,620.8 786.9,638 780,647.9 778.8,659 787.4,666.4 797.3,672.5 803.5,684.8 805.9,697.2 M778.8,647.9 782.5,643 788.7,645.4 791.1,655.3 789.9,665.1 782.5,666.4 778.1,660.2 778.8,647.9 M6,662.7 15.9,659 35.6,654 55.3,647.9 67.6,644.2 87.3,645.4 104.5,641.7 124.3,640.5 144,641.7 158.7,645.4 173.5,652.8 185.8,656.5 203.1,652.8 217.9,647.9 240,643 264.7,643 276,644.2 M6,617.1 12.2,625.7 14.6,638 13.4,650.3 15.9,659 M126.7,606 126.2,620.8 128,633.1 131.6,643 134.1,655.3 132.9,667.6 132.1,675 M203.1,606 200.6,618.3 193.2,633.1 188.3,645.4 185.8,656.5 180.9,667.6 171.1,677.4 161.2,686.1 144,681.1 131.6,675 114.4,671.3 99.6,666.4 92.2,655.3 89.8,645.4"/>
</g>
<g fill="none" stroke="#000" stroke-width="1">
<path d="M6,704.8 9.2,705.6 13.2,703.2 17.2,702.4 22,700 26,698.4 30,699.2 30.8,702.4 27.6,704 30,707.2 38,706.4 45.2,705.6 47.9,704.8 48.4,708 45.2,709.6 44.4,714.4 46.8,716 50,716.8 51.6,723.2 54,724.8 58.8,724 63.6,725.6 68.4,728 70.8,726.4 72,730.4 74.8,732.8 75.6,736.8 77.2,740 81.2,741.6 84.4,742.4 87.6,740.8 90.8,741.6 93.2,744 96.4,743.2 100.4,747.2 103.6,748.8 106,751.2 105.2,754.4 102,755.2 98.8,753.6 95.6,752 91.6,750.4 87.6,753.6 83.6,754.4 81.2,751.2 78,748 74.8,740.8 71.6,740 69.2,743.2 66.8,742.4 68.4,746.4 73.2,750.4 78,752 81.2,755.2 84.4,758 M114.9,760 116.5,753.6 114.9,748.8 119.7,748 121.3,744 126.1,744.8 127.7,740.8 132.5,741.6 134.1,744 138.9,744.8 142.1,748 146.9,749.6 147.7,752.8 143.7,755.2 142.1,760 M149.3,718.4 152.5,716.8 156,716 156,731.2 152.5,730.4 150.1,726.4 150.9,722.4 M242.4,760 239.2,755.7 232.8,753.3 228.8,748.5 227.2,743.7 221.6,742.9 216.8,740.5 210.4,738.9 205.6,736.5 201.6,735.7 197.6,732.4 195.2,727.6 191.2,726 188,722 184,719.6 182.4,716.4 187.2,714.8 188,710 192.8,706.8 194.4,702.8 200,701.2 201.6,697.2 206.4,698 208.8,694.8 207.2,691.6 204,688.4 204.8,684.4 204,678 201.6,681.2 197.6,685.2 198.4,690 196,694 191.2,694.8 187.2,691.6 184.8,687.6 180,689.2 177.6,686.8 177.1,682.8 180,680.4 184.8,680.4 187.2,677.2 191.2,673.2 194.4,669.2 199.2,667.6 205.6,666.8 210.4,662 214.4,658 215.2,655.6 212.8,652.4 215.2,650 219.2,650.8 218.4,654 221.6,655.6 228,653.2 234.4,650 239.2,648.4 240.8,646 252.1,646 256.9,648.4 261.7,651.6 266.5,652.4 271.3,650.8 276.1,653.2 276,652.8 282.2,651.6 287.1,647.9 293.2,649.1 300.6,651.6 303.1,656.5 306.8,655.3 305.6,643 306.8,630.6 310.5,624.5 313,622 319.1,624.5 321.6,633.1 322.8,643 325.3,649.1 329,651.6 333.9,656.5 335.1,660.2 325.3,662.2 313,663.9 342.5,661.4 343.8,654 349.9,654 354.8,650.3 357.3,645.4 362.2,643 359.8,647.9 357.3,655.3 367.2,652.8 372.1,647.9 377,640.5 375.8,631.9 379.5,633.1 381.9,638 385.6,635.6 386.9,630.6 389.3,633.1 388.1,639.3 393,641.7 398,644.2 391.8,646.7 384.4,649.1 399.2,647.9 409,646.7 418.9,646.7 417.7,643 423.8,641.7 427.5,638 431.2,640.5 434.9,643 443.5,640.5 449.7,639.3 453.4,643 454.6,647.9 448.5,646.7 441.1,645.4 433.7,647.9 443.5,650.3 453.4,654 465.7,660.2 475.6,665.1 474.3,657.7 480.5,656.5 484.2,659 490.3,656.5 495.3,652.8 499,654 495.3,659 489.1,662.7 485.4,666.4 490.3,670.1 496.5,673.8 500.2,677.4 506.4,677.4 507.6,681.1 502.7,682.4 497.7,679.9 501.4,687.3 507.6,692.2 512.5,697.2 515,704.5 515,710.7 522.4,711.9 532.2,709.5 539.6,705.8 546,703.3 546,700.9 553.4,698.4 560.8,695.9 570.6,691 580.5,689.8 586.7,691 585.4,687.3 579.3,686.1 583,679.9 589.1,676.2 595.3,673.8 605.1,675 612,673.8 617.4,678.7 627.3,684.8 635.9,691 640.9,697.2 644.5,705.8 651.9,710.7 656.9,714.4 658.1,723 661.8,729.2 669.2,734.1 674.1,741.5 680.3,748.9 682.7,755.1 680.3,761.2 684,763.7 687.7,756.3 693.8,756.3 700,758.7 702.4,766.1 706.1,769.8 707.4,776 712.3,782.2 713.5,787.1 707.4,789.5 708.6,806"/>
<path d="M6,105.3 155.1,105.3 156.3,111.9 160.7,114.4 160.7,120.6 156.8,126.7 150.1,131.6 144,140.3 137.8,149.4 187.1,149.4 M201.9,6 203.1,12.2 206.8,18.3 208.5,26.9 203.1,30.6 201.9,35.6 206.8,41.7 210.5,47.9 212.5,55.3 217.9,59 222.8,57.7 225.3,54 M276,54 273.5,51.1 269.2,51.5 267.1,49.1 263.4,48.6 260.5,45.9 257.3,45.4 255,42.4 250.7,43 248.7,40.5 246.3,41.4 244.6,38.6 242.5,39.3 239.9,38.9 238.6,42 236.4,41.7 235.5,44.3 232.2,44.5 231.4,46.7 228.8,48.7 228.7,52.3 226.5,54 227.6,56.1 224.4,57.2 225.3,59 226,60.8 228.4,59.9 229,61.4 230.8,62.1 229.9,64.5 231.4,65.1 229.4,67 231.8,69.7 230.2,71.3 229.9,73.6 226.8,73.1 226.5,75 226,76.6 228.1,77.4 227.7,78.7 229.3,77.8 229.4,80.6 230.7,79.9 229.1,81.3 230.3,83.6 229,84.8 230.3,87.3 226.7,88.8 227.7,91 224.7,92.7 226.5,96.9 224,98.4 223,100.1 221.2,97.8 220.3,99.1 220.6,96.1 216.5,96 216.6,93.5 215.3,94.4 214,92.8 212.9,93.5 210.7,95.1 212.3,98.2 210.5,99.6 210.7,102.4 208.4,104.6 208.5,107 207.7,105 205,106.2 204.3,104.5 203.7,102.6 205.6,101.2 205.1,99.6 204.6,98 202.4,98.5 201.9,97.2 201.5,99.4 198.6,97.8 198.2,99.6 197.6,101.2 199.9,101.9 199.4,103.3 201,102.8 201.8,104.9 203.1,104.5 201.6,106.5 203.1,109 201.9,110.7 201.5,112.9 198.6,112.6 198.2,114.4 195.8,115.3 196.5,118.5 194.5,119.3 196.7,119.2 197.5,121.8 199.4,121.8 198.3,123.6 201.5,124 200.6,125.5 199.7,127.3 197.7,125.3 196.9,126.7 196.4,124.6 193.7,126 193.2,124.3 192.8,126.5 189.9,126.2 189.5,128 188.8,130.5 192.5,130.8 192,132.9 194.1,132.4 193.9,135.6 195.7,135.3 194.3,136.8 195.6,139 194.5,140.3 193.8,143 190.2,141.8 189.5,144 186.8,145.1 189.3,148.4 187.1,149.4 189.5,150 188.8,153.2 190.8,153.8 189.4,155.6 193.1,155.3 192,156.8 190.7,158.6 188.2,157.2 187.1,158.7 184.9,159.8 186.4,162.7 184.6,163.7 186.6,163.4 186.6,166.3 188.3,166.1 185.9,165.2 184.3,168.1 182.2,167.4 181.9,169.7 178.8,167.9 178.5,169.8 176.4,168.8 175.3,171.9 173.5,171.1 173.8,174 169.6,173.6 169.8,176 170.9,178.2 173.8,176.7 174.8,178.5 175.9,179.6 174.6,181.2 175.5,182.2 174,180.9 172.4,183.2 171.1,182.2 171.4,185.3 167.2,185.7 167.4,188.3 168,190.3 170.6,189.2 171.1,190.8 169.5,192 167.4,191 166.1,192 164,192.5 164.1,195.2 162.4,195.7 162.8,197.6 160.9,199 161.2,200.6 160,198.2 157.4,201.4 156.3,199.4 157.1,201.8 153.2,201.1 153.8,203.1 156.4,204.9 159,201.6 161.2,203.1 160.9,205.4 157.8,204.1 157.5,206 M208.5,105.3 276,105.3 M304.3,6 309.3,10.9 308,17.1 299.4,20.8 288.3,23.2 280.9,26.9 277.2,31.9 278.5,38 282.9,43 283.4,49.1 279.7,52.8 276,54 M276,105.3 312.5,105.3 311.7,97.2 309.5,89.3 325.3,92.2 404.1,90.5 421.4,91.5 485.4,93.5 546,94.2 M546,94.7 570.6,96.4 635.9,97.2 693.8,96.4 787.4,94.2 805.9,97.9 M635.9,95.9 644.5,91 659.3,86.1 675.3,82.4 680.3,75 688.9,72.5 696.3,68.8 697.5,61.4 706.1,56.5 708.6,49.1 723.4,41.7 740.6,34.3 750.5,25.7 757.9,18.3 764,13.4 762.8,10.9 755.4,9.7 748,6 M764,13.4 765.3,19.6 764,26.9 770.2,31.9 777.6,34.3 782.5,40.5 792.4,41.7 802.2,36.8 805.9,33.1 M787.4,94.2 783.7,100.9 782.5,109.5 779.6,115.6 782,119.3 775.1,118.1 769,123 762.8,131.6 757.9,139 750.5,139 745.6,135.3 735.7,137.8 728.3,144 723.4,151.4 718.5,152.6 716,145.2 712.3,144 706.1,148.9 701.2,153.8 693.8,155.1 692.6,162.4 687.7,168.6 680.3,167.4 674.1,171.1 666.7,174.8 659.3,180.9 649.5,188.3 639.6,187.1 627.3,189.5 617.4,193.2 611.3,200.6 610.5,206 M158.7,206 155.9,205.9 156.1,209.7 153.8,209.7 155.2,211.2 153.9,213.3 155.1,214.6 155.7,216.4 158.2,215.6 158.7,217.1 159.7,219.2 156.7,220.3 157.5,222 157.3,224 160.1,224 160,225.7 158,227 155.5,225.9 153.8,226.9 151,228.3 153.7,231.8 151.4,233.1 149.2,235.3 145.9,233.8 144,235.6 142.2,236.4 144.2,238.6 142.7,239.3 144.9,239.7 144.6,242.6 146.4,243 145.8,245 148.2,246.2 147.7,247.9 146.7,250.2 143.6,249.7 142.7,251.6 140.5,250.2 139.6,253.9 137.8,252.8 135.3,252.7 136.2,249.2 134.1,249.1 132.8,247.8 131.5,250.1 130.4,249.1 131.6,250.6 130.6,252.7 131.6,254 129.1,253.3 128.8,257 126.7,256.5 127.4,258.5 125,259.7 125.5,261.4 126.3,263.9 129.7,263 130.4,265.1 130.3,267.2 128.1,268.3 128,270.1 127.3,268.1 125,270.4 124.3,268.8 124.8,271 121.9,271.9 122.3,273.8 122.2,276.3 125.5,276.6 125.5,278.7 125.9,281.3 122.8,282.6 123,284.8 122,287.1 124.6,289 123.8,291 121.9,293.3 118.6,291.6 116.9,293.5 114.3,292.5 114.1,296.7 111.9,295.9 113.6,296.7 113,298.9 114.4,299.6 112.4,298.9 111.2,301.4 109.5,300.9 108.1,302.5 105.7,302 104.5,303.3 102.4,304.6 105,307.1 103.3,308.2 100.9,308.8 100.4,305.3 98.4,305.8 96.9,307.3 98.4,309.4 97.2,310.7 100,309.8 102.1,312.6 104.5,311.9 101.9,312.7 103,316.2 100.9,316.9 101.5,319.7 97.9,320.7 98.4,323 95.7,323.4 94.5,326.3 92.2,326.7 90.8,329.4 87.3,327 86.1,329.2 86.7,331.9 90.4,330.6 91,332.9 90.5,335.2 87.8,335.9 87.3,337.8 85,339.1 87.9,341.6 86.1,342.7 89.1,342.5 89.6,346.5 92.2,346.4 89.7,345.7 89.4,349.4 87.3,348.9 84.8,349.9 83.2,346.9 81.1,347.7 80.5,349.7 82.8,350.9 82.4,352.6 85.3,351.6 86.1,355.8 88.5,355.1 86.1,354.5 85.6,357.9 83.6,357.5 80.8,357.3 79.8,354.1 77.4,353.8 75.6,354.5 76.5,356.9 75,357.5 78.3,358.4 77.2,362.8 79.9,363.7 77.2,364.5 77.2,367.9 75,368.6 77.2,369.7 75.6,372.6 77.4,373.5 75.2,373.9 76.8,376.8 75,377.2 77.8,376.4 78.7,380.3 81.1,379.7 83.8,379.7 83.8,376.1 86.1,376 87.5,377.5 86.1,379.6 87.3,380.9 84.2,381.4 83.7,385.3 81.1,385.8 82.9,387.2 80.9,389.6 82.4,390.8 83.5,393 86.4,391.4 87.3,393.2 87.9,395.7 84.3,396.1 84.8,398.2 84.2,400.2 86.6,401.4 86.1,403.1 83.4,405.1 79.7,404.3 77.4,406 M142.7,238 276,238.5 M276,238.5 299.4,237.5 398,238 492.8,239.3 546,238.5 M299.4,237.5 301.9,243 306.8,247.9 307.3,251.6 305.6,267.6 300.6,316.9 294.5,378.5 291.3,406 M492.8,239.3 496.5,262.7 502.7,292.2 508.8,329.2 513.7,358.7 518.7,388.3 521.1,406 M546,238.8 587.9,238.8 679,238 M587.9,238.8 589.1,225.7 591.6,215.9 599,214.6 607.6,213.4 610.5,206 M679,238 693.8,233.1 703.7,230.6 718.5,225.7 730.8,220.8 743.1,220.3 767.7,221.3 805.9,223.2 M679,238 677.8,243 669.2,250.3 664.3,255.3 660.6,263.9 669.2,271.3 676.6,276.2 684,283.6 693.8,283.6 697.5,289.8 703.7,302.1 707.4,311.9 716,324.3 723.4,334.1 733.2,340.3 741.9,348.9 746.8,358.7 755.4,363.7 762.8,371.1 767.7,376 765.3,382.2 770.2,388.3 775.1,395.7 780,401.9 783.7,406 M6,415.4 79.9,415.4 M77.4,406 78.6,408.1 81.3,408 82.4,409.7 82.6,412.3 79.8,413.7 79.9,415.9 78,416.6 77.8,418.9 76.2,419.6 78.2,420.9 75.8,423.3 77.4,424.5 79.8,425.2 81.5,422.7 83.6,423.2 83.2,421.1 85.6,420 85.3,418.3 84.2,421.7 85.7,425.3 84.8,428.2 83.9,430.7 80.7,431 79.9,433.1 78.8,435.7 80.8,438.3 79.9,440.5 81.9,442.7 80.8,446 82.4,447.9 83.1,450.6 86.6,450.5 87.3,452.8 87.8,450.7 90.6,452 91,450.3 88.4,451.2 90.6,454.5 88.5,455.3 87.7,458 84.3,455.5 83.6,457.7 83.2,460 85.1,461.9 84.8,463.9 87.4,463.8 88.8,466.5 91,466.4 93.1,467.5 94.1,464.2 95.9,465.1 98.1,466.8 97.8,469.9 99.6,471.3 97.5,473.3 100.8,475.7 99.1,477.4 97.6,479.3 94.8,478.4 93.5,479.9 91,481.9 93.1,485.5 91,487.3 89.1,489.3 86.4,486.9 84.8,488.5 82.3,487.8 82,491.5 79.9,491 81.1,493 80.1,495.5 81.1,497.2 82.9,499.1 85.8,498.1 87.3,499.6 87.9,502.1 84.3,502.4 84.8,504.5 82.4,505.6 81.9,508.5 79.9,509.5 78.8,511.8 76,512.5 75,514.4 72.8,514.8 73.1,517.7 71.3,518.1 69.5,520.2 66.6,518.1 65.1,519.8 65.2,521.8 67.5,522.6 67.6,524.3 69.6,524.4 70.3,526.6 72,526.7 70,526.8 69.3,529 67.6,529.2 65.6,530 64.4,527.3 62.7,528 60.6,529.8 63.1,532.5 61.4,534.1 60.9,536.4 58.1,537 57.7,539 55.8,537.6 55.6,541.4 54,540.3 56.6,540.5 56.9,543.8 59,544 57,545.3 59.3,547.8 57.7,548.9 56.3,551.5 52.8,551.6 51.6,553.8 49,554.6 50,558 47.9,558.7 50.3,560 47.2,562.6 49.1,563.7 51.4,564 52,561 54,561.2 54.6,563.6 52.3,565.4 52.8,567.4 49.7,567.3 48,570.6 45.4,570.6 46.3,572.8 43.5,574.1 44.2,576 43.8,578.4 47,578.9 46.7,580.9 47.7,583 44.7,584 45.4,585.8 46.1,587.7 48.5,587.9 49.1,589.5 48.6,591.9 45.9,592.5 45.4,594.5 M45.4,594.5 185.8,594.5 187.1,596.9 183.9,600.6 183.4,606 M291.3,406 287.1,443 282.2,492.2 279.7,529.2 280.9,566.1 283.4,606 M521.1,406 524.8,420.8 527.3,433.1 531,447.9 537.1,459 539.6,467.6 537.1,475 544.5,479.9 546,482.4 539.6,487.3 533.5,494.7 532.2,504.5 534.7,516.9 532.2,534.1 533.5,548.9 531,561.2 529.8,576 534.7,588.3 538.4,596.9 542.1,606 M341.3,606 345,594.5 537.1,594.5 M783.7,406 792.4,410.9 797.3,415.9 799.8,425.7 804.7,433.1 804.7,443 805.9,445.4 M283.4,606 284.6,625.7 285.4,647.9 M341.3,606 347.4,613.4 352.4,619.6 357.3,623.2 358.5,630.6 356.1,636.8 357.3,641.7 361,643 M546,620.3 644.5,625.7 743.1,631.9 745.1,643 749.3,650.3 757.9,651.1 758.4,635.6 760.3,625.7 757.4,618.3 762.8,610.9 769,609.7 775.1,613.4 786.2,617.1 794.8,615.9 802.2,613.4 M183.4,606 179.7,613.4 178,623.2 180.9,633.1 187.1,640.5 189.5,647.9 188.3,655.3 193.2,662.7 196.9,667.6 M740,631.9 743.7,632.3 744.6,639.7 747,648.9 751.1,650.8 757.5,650.4 759.4,639.7 758.5,628.6 757.5,617.5 760.3,612.9 764.9,609.8 769.5,611.1 776.9,613.8 785.2,616.6 795.4,618.5"/>
</g>
<path d="M203.9,710.7 205.6,713.0 203.4,713.9 200.9,713.9 201.8,711.8Z M194.5,721.4 193.8,720.3 194.3,718.8 195.1,720.0Z M208.4,700.0 209.6,700.6 209.1,702.3 207.8,702.7 206.9,701.2 207.1,700.2Z M198.6,731.8 197.2,731.1 197.3,728.9 198.7,727.5 199.8,729.6 200.3,731.5Z M205.4,712.0 204.5,713.7 203.2,714.3 201.6,712.7 203.0,711.3 204.5,709.9Z M202.2,722.2 203.6,721.8 203.9,723.2 203.1,724.3 202.0,723.2Z M202.3,712.8 201.7,715.9 199.3,715.7 200.0,712.7Z M185.1,723.6 185.7,720.5 188.1,721.0 188.0,723.6Z M197.7,709.7 196.6,708.5 198.2,707.2 199.5,708.4 199.2,710.1Z M209.0,697.1 209.5,699.4 207.5,698.8 206.7,697.9 207.9,696.8Z M199.4,700.8 198.5,702.2 197.8,700.6 198.7,699.4Z M208.3,698.8 208.9,700.5 208.3,701.6 206.5,702.7 205.8,700.3 206.7,698.2Z M191.6,705.0 192.7,706.8 191.4,708.4 190.1,706.5Z M189.5,716.9 190.6,714.9 192.0,715.3 193.8,717.3 192.4,718.8 189.5,718.6Z M198.2,725.7 198.8,727.1 197.6,728.6 196.6,727.5 195.8,726.6 196.9,725.2Z M187.0,721.6 188.5,722.2 188.0,723.9 186.7,722.9Z M192.1,713.3 192.4,712.1 193.2,712.3 194.0,713.0 193.4,714.2 192.5,714.4Z M194.9,719.7 197.1,721.3 197.9,722.6 195.2,724.2 194.5,722.1Z M200.6,715.1 199.8,713.9 199.8,712.3 201.3,711.0 202.2,712.5 202.1,714.6Z M197.8,705.6 195.9,708.9 192.8,707.4 194.6,705.3Z M182.1,717.0 183.7,715.7 185.4,717.9 184.0,718.9 181.3,718.5Z M205.4,709.3 203.9,708.3 204.0,707.1 205.4,707.0 206.5,707.9Z M202.1,719.2 202.4,722.7 199.7,722.9 199.5,719.5Z M196.5,713.8 197.8,713.0 198.6,713.9 198.5,715.7 196.7,715.7Z M186.9,721.3 187.2,723.0 186.0,723.3 185.2,721.8Z M199.6,704.2 200.5,705.0 200.7,706.1 199.7,706.3 198.6,706.2 198.8,705.1Z M206.6,705.2 207.3,702.5 208.9,702.5 210.4,703.4 211.1,704.9 208.7,705.8Z M201.8,711.1 202.0,709.6 203.2,709.6 204.0,710.8 203.0,711.6Z M209.3,704.5 208.4,704.7 208.0,704.1 208.0,703.2 209.6,703.4Z M197.0,718.1 197.4,716.9 198.8,717.7 198.9,718.4 198.2,719.3 197.1,719.2Z M196.4,727.4 195.0,726.7 195.3,725.9 195.9,725.3 197.0,725.2 196.8,726.5Z M189.0,724.3 186.8,723.8 187.4,722.4 189.2,720.5 190.9,722.2 191.1,724.1Z M199.9,723.0 198.9,723.5 197.9,724.1 197.9,723.0 198.1,722.2 198.9,722.5Z M195.1,718.6 195.0,717.7 195.4,716.8 196.7,716.8 196.9,717.9 196.5,718.6Z M203.9,721.1 203.2,719.7 204.1,718.6 205.4,719.3 205.0,720.8Z M191.8,725.9 191.1,728.1 189.4,727.5 188.0,726.4 189.5,725.4Z M200.6,715.5 199.8,714.3 201.4,714.3 202.3,714.8 201.8,715.8Z M201.2,726.0 199.9,724.3 200.2,722.6 201.7,722.7 202.1,724.1Z M191.2,715.1 189.4,713.5 190.8,712.3 193.6,712.2 194.3,713.8 192.7,714.9Z M169.1,731.2 172.1,733.0 171.0,735.6 168.7,736.5 166.0,735.1 166.9,731.8Z M164.4,729.5 165.8,727.3 167.6,727.9 169.1,730.3 167.1,731.2 164.6,732.0Z M170.9,742.5 170.6,740.1 173.1,738.2 175.7,739.6 175.6,742.3 173.3,744.1Z M164.2,733.2 166.1,734.5 165.8,736.4 164.0,737.0 162.9,736.9 162.0,734.8Z M175.9,744.2 179.1,743.3 179.7,746.2 178.2,748.6 176.1,747.4Z M167.7,744.8 166.0,743.5 165.5,741.7 168.3,740.8 169.7,743.5Z M163.6,735.4 163.4,734.3 163.3,733.0 164.5,733.2 165.8,734.0 165.0,734.9Z M164.4,745.0 163.1,748.7 159.7,749.1 160.0,745.5Z M167.7,747.8 166.9,746.1 167.7,744.5 169.2,744.8 170.4,746.0 169.6,746.8Z M158.4,739.5 161.0,742.0 158.6,745.8 156.4,743.7 155.0,741.3Z M167.1,732.7 168.1,730.8 169.4,732.2 170.2,733.5 167.8,734.0Z M167.8,735.2 169.4,735.3 169.7,736.9 167.6,737.3Z M171.7,741.0 172.1,739.9 173.7,740.4 174.5,741.6 173.0,742.9 171.9,742.2Z M167.8,747.1 168.6,749.4 167.3,751.4 165.5,748.7Z M154.8,722.5 155.4,724.7 154.4,727.1 152.9,725.8 152.0,723.7Z M178.6,734.7 179.8,736.0 179.4,737.8 177.9,737.2 176.7,735.9Z M154.3,755.6 156.0,756.7 157.5,758.8 155.9,759.8 152.8,760.8 151.9,757.9Z M166.2,742.6 165.7,739.6 169.1,738.0 169.4,741.6Z M171.7,739.4 170.0,737.4 173.3,736.1 174.6,738.7Z M159.0,752.7 159.6,750.0 161.6,750.4 162.7,753.3 160.0,753.7Z M158.9,725.5 155.6,725.6 154.4,724.0 155.1,721.1 157.9,722.2 159.2,723.5Z M184.5,739.7 183.7,741.5 182.2,742.6 180.5,740.6 180.7,739.1 182.7,738.4Z M158.9,733.8 159.9,736.1 158.8,738.3 157.3,736.0Z M154.1,731.5 151.4,730.6 149.0,729.8 149.9,726.6 153.3,726.7 153.8,728.5Z M156.8,720.7 155.9,723.4 153.1,724.9 151.9,721.4 154.1,720.4Z M167.9,743.0 171.0,742.1 171.7,745.5 168.6,746.0Z M162.5,742.7 161.1,744.6 159.6,743.8 159.2,741.7 159.9,739.9 162.2,740.0Z M159.1,751.4 159.2,749.9 161.7,750.1 162.8,751.3 160.7,753.1Z M164.2,737.5 166.2,735.1 167.8,737.3 166.5,738.6Z M156.8,740.4 155.6,738.9 155.6,737.2 158.2,737.3 157.9,739.1Z M172.6,733.4 170.0,734.2 168.5,731.7 171.9,730.5Z M178.2,740.9 180.9,740.2 181.5,742.7 180.1,745.0 177.2,743.3Z M153.5,730.8 151.9,728.4 154.9,728.3 156.6,729.9Z M164.6,739.8 168.4,739.9 168.0,742.7 164.3,743.9 163.2,741.4Z M174.6,735.7 175.4,733.1 176.8,732.6 178.9,733.5 179.4,735.2 177.0,737.0Z M157.0,718.8 158.2,720.6 156.2,722.2 153.7,720.7 154.8,718.8Z M166.0,732.4 163.3,730.5 165.7,727.9 167.5,730.1Z M155.2,752.4 155.9,753.7 155.2,754.4 154.0,755.4 153.2,753.6 153.7,752.6Z M165.2,749.7 168.2,750.3 166.9,752.9 165.7,755.1 163.9,753.3 163.2,751.4Z M157.8,756.2 156.1,755.4 154.2,754.5 155.2,752.9 157.5,752.2 159.6,753.5Z M170.3,733.4 173.5,732.5 174.9,734.9 171.5,735.9Z M150.5,719.1 152.1,722.2 149.3,722.7 147.8,720.6Z M149.8,720.1 152.2,721.0 151.8,723.1 150.1,722.8Z M156.6,739.4 153.8,738.0 155.5,736.1 157.2,737.2Z M180.1,744.4 178.8,742.5 181.7,741.3 182.6,743.9Z M172.6,732.6 175.6,732.6 175.9,735.4 174.8,738.3 171.7,737.5 170.4,735.0Z M152.2,725.9 152.6,723.7 154.2,721.3 157.2,723.8 156.3,727.2 153.4,727.2Z M170.6,736.4 169.8,734.3 171.3,733.4 172.8,734.4 172.7,736.0 171.5,737.4Z M174.3,732.7 171.8,731.9 171.6,730.4 174.1,730.0Z" fill="#004365"/>
<path d="M217.2,695.3 218.4,694.8 218.7,696.1 217.8,696.5Z M211.3,682.2 210.1,683.3 208.3,683.2 208.4,681.7 208.7,680.7 210.3,680.8Z M220.0,703.9 219.8,702.6 221.3,701.6 222.8,702.3 222.1,704.0 221.1,705.0Z M225.1,683.5 223.8,683.4 223.6,681.9 225.2,681.5 225.8,682.8Z M213.5,692.0 212.0,691.2 211.2,690.2 212.6,688.2 213.8,689.6Z M222.3,670.5 224.8,671.6 224.4,675.2 221.3,674.1Z M222.5,695.8 220.6,693.4 223.4,691.1 225.4,694.1Z M216.5,685.7 217.6,688.1 215.7,690.5 213.7,687.4Z M209.1,698.6 207.9,696.6 208.9,695.6 210.9,695.3 211.2,697.0Z M209.5,696.9 208.7,693.7 211.3,693.7 212.3,696.3Z M204.9,684.4 204.9,683.1 206.5,682.8 207.3,683.5 207.9,684.9 206.4,685.3Z M212.1,699.9 212.3,701.0 211.3,701.3 210.4,700.9 210.4,699.9 211.4,699.8Z M214.2,701.8 214.5,699.8 217.2,700.2 216.2,702.8Z M215.4,679.0 213.1,679.4 212.0,678.1 213.9,677.1Z M215.6,691.3 216.3,689.5 217.6,690.6 217.0,691.5Z M214.8,695.0 216.2,696.0 215.7,697.4 214.1,697.0 213.7,696.2Z M206.0,679.0 207.5,680.7 206.8,682.5 205.1,683.1 204.4,681.3 204.7,679.4Z M222.2,672.8 223.9,670.1 226.8,672.1 224.7,674.8Z M223.9,685.7 222.2,685.8 221.0,685.6 220.3,683.4 222.4,681.5 223.4,683.4Z M226.8,692.4 225.7,693.0 224.1,691.7 225.4,689.9 226.6,689.4 227.7,690.7Z M224.6,686.6 225.4,684.3 226.7,684.1 227.5,685.3 227.3,687.1 225.7,688.2Z M219.7,696.3 218.8,693.9 220.3,693.1 221.4,694.4Z M217.0,696.1 218.2,694.8 219.3,695.4 220.8,696.9 219.3,697.8 218.0,697.5Z M224.6,672.3 225.5,670.3 227.6,670.5 229.2,671.8 227.1,673.9Z M222.7,677.9 223.2,680.1 221.3,681.2 220.4,678.6Z M227.7,696.1 225.9,696.5 225.8,694.6 227.2,694.6Z M217.8,703.3 219.4,705.1 218.1,706.8 216.5,705.3Z M223.8,681.7 223.6,682.6 222.7,683.1 222.1,682.2 222.1,681.3 223.2,680.6Z M221.2,674.0 222.4,672.4 224.2,674.5 223.7,676.1 220.6,676.6Z M225.4,671.6 225.3,673.0 223.9,672.7 222.8,671.9 224.0,670.3 225.1,670.5Z M221.3,686.5 221.9,685.1 223.4,685.5 222.8,686.8Z M207.0,687.4 209.3,687.9 207.8,690.1 206.3,690.8 205.1,689.8 204.7,687.9Z" fill="#5d4f4a"/>
<path d="M208.7,695.6 207.5,695.6 206.1,694.5 205.9,692.8 206.5,692.0 207.1,691.5 208.6,690.1 M216.1,679.8 215.2,681.6 216.4,683.2 217.2,683.9 218.2,684.1 219.8,683.5 221.4,682.8 M214.3,691.6 216.2,691.0 216.0,689.6 214.7,688.4 214.2,687.0 214.7,684.9 M206.4,690.0 204.5,689.7 203.3,689.8 202.8,688.7 203.6,688.1 205.4,688.5 M220.0,686.1 220.1,687.3 221.8,687.4 222.3,686.5 222.1,685.2 222.5,683.8 222.8,682.9 M212.7,676.3 214.3,675.0 215.2,674.4 215.0,672.4 M220.5,701.8 222.3,702.9 222.8,704.1 221.7,705.1 221.8,706.9 223.1,708.3 223.1,709.6 M215.8,695.9 214.3,696.1 213.8,697.1 214.8,698.3 214.4,699.2 213.7,700.7 212.0,700.5 M219.5,674.3 219.9,676.1 218.7,677.4 217.6,677.5 217.2,678.7 218.0,679.7 218.0,680.9 M225.9,685.8 226.5,687.9 225.7,689.6 226.7,690.8 M213.5,684.0 215.3,682.7 214.5,681.2 214.0,680.2 M220.4,699.4 221.5,698.7 223.0,698.4 224.2,696.9 223.2,695.7 224.2,694.4 M212.2,676.2 212.8,675.5 214.8,675.0 216.6,674.4 M212.4,683.2 212.4,684.0 213.2,685.9 212.4,687.3 210.7,688.3 M213.3,680.8 211.6,681.7 211.9,682.7 213.4,682.6 M213.1,680.6 214.2,679.7 215.9,679.2 216.9,678.1 217.0,677.1 215.6,675.5 M225.0,692.4 226.1,693.9 226.5,694.9 228.2,695.2 M211.6,695.9 212.1,696.5 212.9,697.3 213.7,696.8 M227.2,674.1 227.0,675.7 226.6,676.7 225.3,677.5 224.5,677.5 222.9,676.0 222.4,675.2 M211.1,692.3 212.5,692.0 213.1,690.7 214.9,690.3 216.6,689.6 M208.7,692.1 209.3,691.0 210.3,690.8 211.1,690.2 210.6,689.1 M221.9,684.5 221.2,685.6 221.8,687.4 220.8,688.4 220.4,689.4 219.0,689.5 M221.6,690.3 220.2,691.9 219.2,691.3 217.8,689.8 217.2,688.7 M225.7,688.7 224.7,688.0 225.0,686.1 225.6,684.8 227.3,683.6 227.5,681.8 228.2,680.3 M220.5,691.8 219.6,693.2 220.1,694.0 219.8,695.5 M218.2,685.0 218.7,684.3 220.5,683.9 221.2,683.5 223.3,683.7 223.6,684.6 M212.4,678.5 211.5,676.7 211.5,675.5 211.3,673.9 210.8,672.9 M209.8,696.8 208.9,697.4 208.3,698.4 207.9,699.9 206.9,701.4 206.7,703.1 M221.7,695.1 220.0,694.7 218.2,695.7 216.6,694.4 215.7,692.5 214.2,691.8 214.7,689.7 M224.5,690.9 222.8,691.9 220.8,691.7 219.9,691.0 M218.5,679.7 218.1,677.8 219.2,676.4 218.3,675.0 217.5,674.0 216.5,672.7 M214.0,684.1 214.5,685.4 216.7,685.1 216.7,683.9 215.6,682.9 214.7,683.5 213.3,685.1 M221.2,672.9 222.2,672.3 224.1,672.4 225.1,672.6 226.5,671.9 227.6,672.0 M220.6,703.3 219.2,702.6 217.8,703.5 217.4,705.1 216.9,706.6 216.1,708.5 M209.8,694.7 210.9,696.5 212.8,697.4 214.4,698.1 215.3,697.4 217.4,697.1 M210.2,690.7 209.2,690.5 208.5,689.9 207.7,687.9 206.6,688.0 M223.8,689.0 225.6,688.4 226.9,689.0 227.8,688.9 228.4,688.3 228.8,687.3 M220.5,697.1 219.4,696.4 218.2,697.1 217.0,697.7 215.7,696.3 M225.6,694.0 224.7,693.6 223.1,694.0 222.1,692.6 220.6,691.6 219.4,689.9 M221.2,694.6 220.2,694.4 219.5,695.7 220.6,696.9 222.3,696.3 223.5,696.3 223.9,695.4 M218.2,696.2 216.6,697.0 215.0,696.8 214.1,697.4 M217.7,678.5 218.3,678.0 219.9,676.8 220.9,675.9 M227.3,692.5 228.1,690.9 228.3,689.3 226.9,688.5 226.1,689.5 M224.7,692.5 223.5,692.8 223.1,691.9 221.4,692.0 220.1,690.5 M219.5,693.1 218.3,694.8 218.9,696.6 219.2,697.9 218.3,699.6 217.2,700.9 215.9,700.7 M225.4,686.7 225.4,685.9 224.9,684.0 225.4,682.9 227.0,682.7 228.1,683.7 M222.6,685.5 221.1,685.3 219.4,685.7 218.8,685.1 217.5,683.8 216.3,683.5 216.1,682.6 M219.0,695.3 219.9,694.0 220.7,693.5 222.0,694.6 223.8,694.2 225.9,694.2 M224.1,698.4 223.9,697.6 224.9,696.7 225.8,695.3 226.4,693.2 227.7,693.1 228.6,692.0 M216.7,676.0 216.2,674.5 215.3,673.5 215.9,672.2 216.8,672.3 218.0,672.5 219.3,672.2 M225.1,694.4 225.4,693.2 225.8,692.3 227.7,692.7 228.5,693.6 M207.0,678.1 207.2,679.1 206.4,679.9 205.9,680.9 204.2,681.1 203.4,680.3 M204.8,690.0 205.5,691.6 206.4,693.3 208.3,693.8 208.3,694.8 208.5,695.7 M223.9,688.5 224.7,688.3 226.2,687.9 227.9,688.7 M225.4,677.8 224.2,678.7 222.5,677.5 221.9,675.8 M225.4,692.8 225.8,691.0 226.3,690.2 228.2,689.1 229.2,689.6 229.8,690.3 M227.6,669.4 227.6,670.8 229.5,671.3 230.8,671.7 232.7,671.0 M205.0,686.3 206.3,685.2 207.1,683.4 205.6,682.4 205.0,680.9 202.9,680.9 201.9,679.3 M223.1,698.5 221.7,696.8 220.7,695.9 218.8,695.0 217.1,695.2 215.0,695.3 214.5,697.5 M213.0,699.3 213.5,701.1 215.3,702.1 215.9,702.9 217.8,702.5 218.4,701.6 M207.0,676.6 205.8,675.8 205.1,674.7 204.3,674.0 202.9,673.4 201.3,674.5 M227.5,690.2 226.5,691.9 224.9,691.7 223.3,693.0 M204.9,688.6 204.0,689.8 204.5,691.9 203.1,692.7 201.0,692.6 200.7,691.7 M212.5,698.8 211.6,699.9 210.3,700.0 208.8,698.4 M221.4,677.2 220.2,677.6 219.4,677.0 217.4,676.9 216.0,676.7 215.0,677.2 M208.5,685.7 207.9,684.5 206.2,683.8 205.4,684.2 M216.0,697.5 215.2,697.0 214.8,695.6 213.0,694.7 212.2,694.3 210.6,693.9 209.4,693.9 M212.4,680.0 211.0,680.3 210.8,681.9 211.6,683.0 212.9,684.0 213.1,685.4 212.4,686.6 M226.6,695.4 226.1,697.4 227.8,698.5 229.7,698.0 231.1,698.7 232.6,698.8 233.7,699.5 M222.2,679.3 222.6,680.1 222.7,681.0 223.9,681.6 224.0,682.6 223.8,683.8 224.0,684.8 M209.2,678.4 209.2,680.3 208.5,680.9 206.6,681.5 205.6,683.3 M217.7,688.3 218.0,687.2 217.0,686.1 216.0,684.1 216.8,683.0 M221.3,701.2 220.3,703.1 218.5,703.3 217.7,703.2 M208.5,681.6 209.4,681.3 209.5,679.3 210.1,677.6 209.3,676.2 207.6,676.0 M211.7,689.8 212.2,688.5 211.6,687.1 212.2,685.8 213.2,685.2 214.5,683.6 213.4,681.8 M213.7,695.3 213.8,697.1 214.6,697.9 215.8,698.6 216.0,699.5 M215.8,683.6 217.4,683.2 218.9,683.9 219.6,685.4 220.1,686.7 M213.8,676.3 214.8,674.4 215.1,673.2 216.1,672.7 216.9,673.1 M222.9,678.8 222.2,677.2 222.7,675.9 222.9,675.0 222.0,674.4 221.1,674.1 219.6,674.2 M217.8,696.6 217.2,695.7 218.2,694.5 219.3,694.8 220.4,695.8 221.3,696.4 222.7,696.0 M212.0,693.9 211.0,694.7 210.2,694.3 209.3,695.4 207.9,696.3 M211.4,692.9 209.6,692.6 208.5,691.9 209.0,689.8 209.8,689.6 M218.9,680.4 218.5,679.6 218.3,678.6 216.6,678.3 M228.9,675.7 228.0,674.3 228.6,673.4 230.7,672.9 231.7,673.5 M218.6,690.3 219.4,689.9 220.9,689.1 222.5,688.4 224.1,687.3 225.1,687.0 225.7,687.6 M213.3,691.9 214.0,692.4 215.2,691.7 217.1,691.6 218.7,692.0 M215.0,700.8 213.2,701.6 211.2,702.4 209.3,702.4 208.2,703.4 207.4,704.3 M215.8,693.5 215.8,692.6 215.1,691.8 212.9,691.9 211.2,691.5 210.3,693.4 M205.6,687.1 205.5,686.0 206.7,684.9 207.0,684.1 208.7,683.9 M205.0,682.3 203.2,682.9 202.3,683.4 202.7,685.2 M221.1,675.8 222.5,676.9 224.0,676.0 225.1,677.0 227.2,677.2 228.2,678.3 M204.4,684.5 202.8,684.4 202.1,683.2 202.9,681.9 204.2,681.4 205.3,681.7 M220.2,679.1 221.3,677.9 220.8,676.6 220.2,676.1 M217.0,704.0 218.1,704.1 218.9,704.0 219.7,705.3 219.9,706.1 220.4,707.0 221.3,706.9 M221.9,679.8 222.8,679.4 224.0,679.2 225.4,679.4 227.1,680.2 228.1,680.6 229.6,681.1 M221.4,673.2 221.5,672.4 221.6,670.6 223.2,669.8 M212.4,681.0 214.0,681.7 215.4,682.1 217.2,681.2 218.1,681.0 M227.7,694.3 225.6,694.1 224.7,692.6 223.9,692.0 222.6,692.6 222.9,693.6 223.9,694.1 M217.0,689.1 215.5,688.4 214.4,688.4 213.1,687.8 212.2,686.4 211.1,685.4 M225.2,696.3 224.7,697.3 224.4,698.2 223.8,699.6 224.3,700.7 225.3,700.7 M227.5,672.9 227.7,674.9 226.2,675.7 224.2,675.1 223.3,674.8 221.9,675.6 M221.5,683.4 220.4,685.2 221.1,687.2 220.6,689.2 220.6,691.1 M209.3,679.8 208.6,681.8 206.8,682.1 205.5,680.9 206.0,679.9 M192.0,716.5 192.6,717.7 193.9,718.1 196.1,718.3 M209.1,708.0 208.8,706.7 207.5,706.6 205.7,705.6 203.9,706.5 203.0,705.6 M204.4,703.7 203.4,704.0 202.9,703.2 203.6,702.4 205.2,701.4 205.4,700.1 203.8,698.9 M198.9,723.4 197.0,722.4 197.0,721.1 195.7,720.5 M192.9,729.6 192.0,728.8 191.1,728.6 189.9,729.8 189.7,730.7 M198.3,721.1 196.2,720.7 195.3,721.6 195.5,723.4 194.2,723.9 M204.8,713.6 203.7,714.5 202.3,713.4 200.4,713.9 198.6,712.9 M196.7,711.8 196.5,710.1 194.9,709.3 194.9,707.3 196.2,706.5 197.6,705.6 M197.2,731.3 195.7,732.0 194.0,733.0 192.8,733.1 192.1,734.5 M183.1,718.0 181.9,719.2 180.0,719.6 178.4,721.0 177.7,721.6 176.8,722.3 M200.4,709.7 199.4,709.9 198.0,709.6 196.9,708.4 196.1,707.5 196.6,706.8 M207.3,701.2 208.2,700.4 210.0,700.0 211.0,701.1 212.2,700.8 213.1,700.2 213.5,699.0 M214.4,705.2 215.2,703.4 216.1,701.9 215.1,700.7 214.1,699.2 213.6,698.4 213.5,696.5 M205.7,712.0 204.1,712.2 202.3,711.3 200.7,710.3 201.2,708.6 M202.2,713.5 200.9,714.4 199.5,714.4 198.6,714.4 M187.1,719.4 186.4,720.2 187.3,722.2 188.7,722.4 188.8,723.9 187.5,725.5 M198.9,722.4 198.6,721.0 199.8,719.1 199.3,718.3 M206.3,706.8 207.9,707.9 208.9,707.4 209.7,707.5 M201.1,706.6 202.8,706.7 204.0,707.0 204.1,709.2 203.5,710.8 201.9,710.6 200.9,709.4 M195.0,729.1 195.1,728.1 196.0,727.9 196.6,726.2 196.9,725.1 197.0,723.0 196.3,722.3 M192.0,725.8 191.2,726.5 190.9,727.3 191.8,728.6 193.1,729.0 194.2,730.6 M203.5,700.6 205.5,701.1 206.6,699.7 207.8,699.8 M203.1,710.0 201.8,711.2 202.8,712.8 202.5,714.3 201.7,714.9 200.8,715.1 M204.8,698.2 205.5,697.5 205.3,696.0 205.9,694.3 M206.5,706.2 205.4,706.3 203.9,705.9 202.9,705.5 201.1,705.6 200.5,707.1 201.1,707.8 M187.8,719.2 186.9,719.2 185.8,719.7 185.8,721.2 186.6,722.5 188.3,723.4 189.1,723.5 M204.5,707.3 203.0,705.7 202.2,705.1 201.9,703.5 M197.7,710.8 198.3,708.8 197.3,706.9 195.7,707.1 195.0,705.6 194.5,703.6 M191.7,719.4 190.9,719.9 189.3,718.9 188.4,717.0 M195.6,714.9 196.6,715.6 197.3,717.4 199.1,717.3 199.9,718.8 201.2,719.8 M197.1,705.8 196.9,704.3 196.8,702.3 198.0,701.5 M198.3,730.7 197.1,730.2 195.8,730.3 194.8,732.2 193.1,732.8 M193.3,727.6 195.2,727.7 195.9,726.7 197.1,726.5 198.4,727.0 199.7,728.3 M192.2,708.5 193.2,708.6 194.9,708.8 195.8,708.0 M190.1,717.9 188.7,717.9 187.5,716.3 187.3,715.0 187.4,713.7 188.8,712.7 189.0,711.9 M201.8,727.4 203.3,728.7 203.6,730.1 202.1,731.5 201.1,731.5 M203.5,716.0 204.4,717.0 206.4,716.5 207.4,717.4 207.1,719.2 M201.9,722.0 200.7,721.8 199.4,721.4 197.8,721.7 197.7,723.6 199.2,724.0 200.5,723.9 M198.8,702.9 197.2,702.7 196.1,703.4 194.3,703.6 M198.6,732.6 196.9,733.1 195.2,732.6 194.1,734.1 194.7,735.1 M205.3,700.9 203.4,701.8 201.9,703.1 202.1,704.0 201.7,705.0 200.6,706.5 201.0,708.4 M207.2,705.4 208.2,705.4 209.3,706.3 211.3,706.5 212.2,707.0 212.3,708.2 M204.0,705.7 205.2,706.8 207.0,706.9 207.5,708.9 208.6,709.8 207.8,711.5 M188.1,723.3 187.8,722.4 189.0,720.6 189.6,719.8 190.3,718.6 190.2,716.8 190.6,716.0 M195.3,730.8 194.5,729.2 193.7,727.2 193.0,726.3 192.6,725.1 M209.4,710.0 208.4,711.7 207.4,712.4 207.8,713.9 207.1,714.7 207.2,716.2 205.6,717.4 M183.1,718.4 184.4,719.1 185.6,718.9 187.2,719.9 187.4,720.8 185.7,721.8 M204.6,700.8 205.3,701.4 205.1,702.7 204.3,704.2 203.3,704.0 202.9,705.0 M206.3,701.8 205.0,703.1 204.8,704.9 202.8,705.4 202.3,704.5 202.4,703.3 203.8,701.9 M191.8,720.5 191.2,719.7 192.3,718.0 193.2,717.0 195.1,717.3 M209.7,705.2 211.2,705.5 212.6,705.2 213.8,704.4 M207.8,714.3 206.8,714.4 205.6,714.0 204.4,712.5 202.6,712.1 202.0,711.1 M197.0,724.2 198.3,723.1 199.4,723.4 201.3,723.6 202.5,723.5 202.9,722.2 201.6,720.6 M193.3,707.3 194.7,706.2 196.3,705.9 197.0,706.6 198.4,707.7 199.9,708.7 M184.8,717.7 183.2,716.8 182.2,717.7 180.9,718.1 M198.8,729.6 197.7,731.2 196.3,732.6 196.5,734.1 196.5,735.2 195.8,737.0 M202.5,718.9 203.8,717.7 204.8,717.7 206.1,717.6 206.7,718.2 M206.4,708.9 205.0,709.6 203.4,711.1 202.4,712.9 203.3,714.5 M207.8,713.3 207.9,711.9 208.2,710.8 207.3,710.3 M200.2,712.1 202.0,712.6 202.6,714.5 203.6,716.4 202.5,717.9 M205.2,703.7 206.7,704.3 207.6,704.0 208.3,702.8 207.9,701.2 M203.2,712.3 203.4,711.1 202.5,710.7 202.9,708.7 202.9,707.1 204.9,706.5 M209.0,705.0 207.1,704.9 205.3,704.9 204.3,704.1 204.2,702.9 M206.8,709.1 205.6,708.8 204.9,707.7 204.0,707.9 M193.2,711.2 195.1,711.9 196.0,713.5 197.8,713.3 199.6,712.8 200.1,712.0 M191.1,718.1 189.8,718.4 187.8,718.5 186.7,717.9 186.3,716.3 M195.7,715.7 196.5,713.9 197.8,713.2 198.8,713.1 199.8,712.3 M194.4,710.6 196.5,710.8 197.6,711.8 199.3,713.2 200.0,713.8 200.7,715.1 202.1,716.4 M208.9,701.3 207.2,701.1 206.6,701.6 204.9,702.4 M187.0,717.9 185.8,717.7 184.9,717.9 184.0,719.1 M191.2,715.4 190.6,716.3 190.5,717.2 190.5,719.0 190.4,720.6 190.1,722.4 188.1,722.6 M194.1,710.0 193.1,709.0 191.4,709.0 191.1,710.2 M198.5,706.6 199.7,707.3 199.6,708.7 199.0,709.5 197.1,709.6 M188.7,725.3 189.0,726.3 190.3,726.4 191.8,726.0 193.1,724.5 194.3,725.1 195.1,724.8 M197.9,725.9 196.2,725.8 195.6,724.8 195.8,723.4 197.5,722.8 199.2,722.6 199.8,721.1 M188.7,713.5 187.9,712.1 188.5,710.0 187.1,708.6 188.0,707.0 189.5,707.0 M196.8,722.4 197.2,724.2 197.6,724.9 197.9,725.8 199.8,726.1 200.9,726.1 202.1,727.5 M188.2,711.3 188.9,713.0 189.7,714.3 190.1,716.0 M188.0,718.5 187.6,717.6 187.6,716.4 186.8,715.4 186.1,713.5 184.4,713.0 182.8,711.8 M197.4,731.4 197.0,729.3 197.3,727.8 196.7,726.1 196.4,724.1 197.2,723.1 196.9,721.8 M191.3,719.7 191.3,718.3 191.2,717.4 189.9,715.9 189.1,714.2 188.4,713.7 M198.9,715.6 197.2,716.6 195.5,715.7 194.6,714.5 194.0,713.6 M187.9,722.7 186.0,721.9 184.7,720.2 183.6,719.8 183.4,718.9 184.0,718.3 M196.9,711.2 197.7,710.6 198.6,709.6 199.8,710.1 M192.8,719.5 191.9,719.1 190.9,717.3 191.1,716.4 M207.3,715.2 208.0,713.5 209.7,713.0 210.9,712.9 212.2,713.6 214.1,714.6 M207.2,697.4 208.3,698.0 209.4,698.1 210.6,698.6 211.4,698.2 M187.9,710.6 187.6,712.5 188.9,713.0 190.9,713.5 191.3,714.2 M184.7,720.9 184.2,721.8 183.3,722.2 182.3,721.0 M192.4,724.0 192.8,722.9 193.8,721.9 194.1,720.8 193.5,719.3 M192.6,723.4 192.1,721.8 190.7,720.7 189.1,722.1 189.1,723.7 M184.4,715.0 185.2,713.1 186.7,712.9 188.5,712.0 189.1,710.2 M192.6,706.1 191.6,706.2 191.2,707.4 191.8,709.4 191.2,711.4 190.2,712.5 M205.3,706.7 207.2,707.5 208.6,706.4 209.5,706.7 M201.7,723.8 201.1,723.0 200.2,722.8 199.5,720.9 199.9,719.3 201.0,718.2 201.6,716.7 M188.2,711.4 189.5,712.7 190.6,714.5 191.1,715.8 192.4,717.0 M214.2,704.9 212.3,705.5 211.6,706.6 210.4,706.3 M191.3,707.2 191.8,707.9 191.7,709.2 192.9,710.3 194.3,711.0 195.5,711.9 197.4,712.1 M192.0,707.8 190.5,708.4 188.5,709.0 188.6,711.1 186.9,711.9 185.6,712.6 184.2,712.9 M194.5,715.2 196.1,714.3 197.6,713.8 198.6,714.4 200.3,713.6 201.0,714.3 M202.0,719.2 202.9,719.7 203.9,720.6 203.3,722.0 205.0,723.4 205.5,724.5 205.3,726.7 M196.1,725.2 196.8,724.7 198.3,723.8 199.9,722.3 200.5,721.5 202.0,722.1 202.9,723.0 M193.8,711.6 193.3,712.8 193.2,714.4 192.4,715.9 192.1,717.6 191.9,718.5 M191.3,723.7 191.4,725.1 192.5,725.6 193.2,725.3 195.0,724.1 M229.2,758.0 228.2,757.6 228.0,755.8 228.5,754.2 M212.0,742.9 212.4,741.1 213.1,739.8 213.1,738.7 213.8,738.2 214.6,737.6 M232.9,753.7 231.0,754.3 230.3,755.0 228.4,754.3 227.8,752.7 M225.2,747.9 223.8,746.3 222.7,745.6 221.1,746.4 219.3,745.7 219.4,743.7 219.5,741.5 M229.1,749.9 230.1,749.7 231.5,750.3 233.0,748.9 234.3,748.7 235.6,748.6 M232.7,757.0 231.4,755.6 229.3,756.2 229.4,757.3 229.4,759.0 231.3,759.8 232.4,759.1 M226.1,750.2 225.8,749.4 227.7,748.2 226.9,746.2 226.9,744.9 226.9,743.9 226.6,742.9 M230.8,757.3 231.3,756.5 231.8,755.5 232.9,755.9 233.3,755.1 M223.4,745.1 222.9,745.8 221.2,745.4 220.5,746.1 218.4,745.5 218.1,744.4 M207.5,741.7 206.3,742.6 207.0,743.9 207.0,745.1 206.9,746.8 M210.5,740.8 211.6,741.6 212.6,742.7 214.2,743.6 214.8,743.0 M216.8,740.7 215.9,739.3 216.0,738.0 215.8,736.2 213.9,735.7 212.9,736.3 212.5,737.8 M233.4,756.7 234.0,755.6 234.6,753.5 235.5,753.5 M210.0,742.5 209.2,744.5 208.6,746.0 208.4,747.4 209.2,749.2 208.5,750.3 206.9,749.7 M210.5,743.4 210.4,742.1 209.4,741.6 208.4,741.3 M235.3,759.1 234.8,761.0 234.9,762.4 234.3,764.0 234.9,764.7 236.7,765.3 237.5,766.3 M208.3,737.8 210.1,738.5 209.9,739.5 208.6,740.4 208.5,741.5 209.8,742.3 211.0,741.7 M216.2,744.1 217.7,745.4 218.8,746.0 219.7,746.9 220.5,748.8 M232.3,758.5 231.4,759.9 229.9,760.4 228.5,760.8 227.7,761.5 226.7,761.6 M169.5,734.3 168.1,734.4 166.6,735.1 166.6,735.9 M168.7,741.0 167.0,740.7 165.8,741.3 166.0,743.4 167.2,743.7 168.7,743.5 M157.0,738.9 156.6,738.1 155.4,738.1 153.4,738.0 M169.5,746.2 170.7,744.3 171.6,743.3 173.2,742.1 M162.1,732.1 161.2,731.8 160.1,730.6 158.7,730.5 M176.3,743.4 176.9,745.1 178.8,746.2 179.4,745.4 180.5,744.9 181.5,745.2 182.4,746.8 M160.4,743.2 158.8,741.8 157.6,741.6 156.1,740.4 154.9,739.9 153.9,739.4 154.0,738.2 M154.6,755.3 155.7,756.2 156.8,756.8 156.7,758.5 155.8,759.5 M162.7,729.1 163.7,727.5 164.8,727.9 164.8,729.6 163.7,730.5 162.7,731.8 M169.4,732.8 170.8,733.6 172.3,734.4 172.4,736.2 170.3,737.0 M152.5,759.5 152.0,760.2 151.1,760.6 151.3,761.8 151.4,763.9 151.4,764.7 M172.2,733.9 172.8,733.4 173.5,731.9 174.7,731.3 175.8,731.3 176.0,730.4 M165.3,729.4 166.8,730.6 166.8,732.5 168.4,733.1 168.3,734.2 166.5,735.3 165.8,736.2 M173.7,733.8 174.3,735.2 173.0,736.4 172.9,737.5 173.7,738.3 175.1,739.0 175.8,740.0 M176.1,738.6 174.9,738.5 173.6,738.9 173.5,740.6 172.8,741.1 M152.8,758.4 150.8,759.1 149.8,758.6 149.3,756.8 147.4,756.7 146.5,757.4 145.8,756.9 M152.2,758.2 151.6,759.8 150.8,760.8 150.8,762.2 M163.8,750.2 162.0,749.9 160.3,748.7 159.0,748.5 157.9,747.8 158.1,746.8 158.2,745.6 M151.9,729.8 151.5,728.9 151.3,727.1 151.7,726.0 152.0,724.0 151.1,723.6 M168.3,754.4 169.7,753.2 171.1,754.4 171.8,753.9 173.0,754.9 174.0,754.8 M154.3,726.2 154.7,724.7 156.2,724.4 156.7,722.4 M157.2,730.5 155.6,731.3 155.0,732.3 155.1,733.6 153.8,734.1 151.9,734.7 M158.0,755.4 159.1,756.4 158.5,757.8 160.1,759.0 161.6,760.3 162.2,761.0 M160.7,742.1 159.8,742.9 158.7,742.7 158.6,741.2 M169.7,746.3 170.8,744.6 170.5,742.4 170.9,740.9 M166.3,746.7 165.5,747.2 164.4,747.2 163.3,745.6 161.6,744.4 160.9,744.0 M158.1,733.0 158.5,734.8 159.4,736.1 160.8,735.5 162.4,736.0 163.5,736.9 M166.3,738.9 167.4,740.3 168.9,740.9 170.4,741.5 172.4,740.9 M162.1,758.6 162.7,759.8 163.6,760.2 165.2,761.6 165.8,763.6 165.6,765.4 M158.3,750.7 157.0,751.0 155.6,750.7 155.0,752.0 M176.7,737.8 176.5,738.6 175.2,739.4 174.6,740.5 173.5,740.3 172.1,741.8 M161.0,734.3 162.8,733.6 164.0,734.6 165.1,735.5 164.9,737.2 166.3,738.6 M155.9,736.8 158.0,736.9 158.8,738.5 158.7,740.5 M178.8,743.3 179.4,742.3 179.9,741.1 180.6,740.7 M156.4,726.9 157.6,727.4 158.7,726.9 159.6,726.7 159.6,725.8 159.5,724.9 160.0,723.8 M152.1,728.5 151.6,726.7 152.5,726.1 153.7,726.6 154.7,727.0 155.6,726.5 M166.0,743.4 166.4,745.4 167.5,747.3 166.6,748.4 164.8,748.9 162.8,749.4 M159.0,744.7 159.1,745.7 160.2,746.4 160.2,747.3 162.0,747.7 163.0,747.3 164.5,746.2 M171.2,746.0 172.1,747.6 173.9,748.3 175.9,748.2 176.8,749.5 M155.9,752.7 153.9,752.6 152.7,752.5 152.1,751.5 150.1,751.4 148.6,752.4 M164.8,750.1 164.9,749.0 164.0,748.0 163.2,746.8 161.5,746.1 160.2,746.7 159.7,747.7 M160.9,758.9 162.2,759.8 164.3,759.9 164.9,761.1 165.5,761.8 166.6,763.3 166.5,764.4 M174.0,743.0 175.2,742.8 176.0,744.0 177.6,744.1 M177.4,744.6 177.9,743.5 178.7,742.6 179.0,741.1 180.0,740.8 M157.3,731.1 155.5,730.5 154.4,730.5 153.6,729.3 151.7,729.6 M159.5,757.0 159.2,755.1 157.3,754.3 156.4,753.2 154.8,752.3 153.5,753.4 153.4,754.9 M164.9,735.6 165.7,735.0 166.6,734.5 168.1,735.4 M164.2,757.8 164.7,755.8 163.7,754.5 163.2,752.6 162.7,751.4 161.7,750.4 159.9,751.0 M164.4,751.7 163.9,750.6 164.6,749.2 163.9,747.8 M164.4,753.4 165.0,754.0 166.3,754.7 166.7,756.0 M159.1,756.8 158.7,755.7 157.6,754.8 157.7,753.2 156.8,752.3 M162.9,745.4 161.7,744.9 160.0,743.8 158.5,744.4 158.3,745.6 M169.2,746.2 169.6,745.1 171.5,744.0 172.3,742.1 171.3,740.8 M154.5,733.1 153.7,733.3 153.2,732.1 154.7,731.0 M162.2,748.0 160.9,747.4 160.7,746.2 159.2,745.9 M154.5,730.7 153.1,730.9 151.6,729.9 150.1,730.1 149.5,728.3 150.5,727.2 152.6,727.0 M154.9,728.5 153.2,727.8 152.7,726.1 152.6,724.2 154.1,722.8 M171.9,732.8 173.5,733.0 174.6,732.9 175.6,732.3 176.7,732.2 M157.9,740.0 157.0,740.5 156.7,741.8 154.6,741.7 M159.0,728.2 157.6,728.2 157.1,727.0 156.3,726.3 156.1,725.0 M162.5,739.8 161.3,738.5 162.1,737.4 163.5,736.8 165.3,737.0 M158.6,746.9 160.1,746.0 160.7,746.6 161.9,746.7 162.9,745.9 M160.4,756.5 158.7,757.7 157.8,757.7 156.7,756.2 155.8,755.9 M162.7,740.4 163.7,739.1 165.4,738.5 167.2,737.6 168.1,737.4 M155.1,730.7 156.4,729.2 158.3,728.8 159.8,727.6 161.7,726.8 162.8,728.3 161.8,729.8 M162.6,727.5 161.0,727.9 159.8,726.2 159.5,724.6 160.3,723.0 M162.2,731.0 163.7,729.8 163.2,727.8 164.8,726.5 M160.8,730.8 161.0,729.2 163.0,728.7 164.7,729.8 165.3,731.9 163.4,732.9 M158.5,746.9 159.3,746.8 160.7,745.5 162.7,745.6 164.6,746.1 165.4,748.2 167.2,748.1 M151.3,757.9 149.8,758.1 148.7,759.2 147.8,758.8 M169.5,747.3 168.7,747.6 167.4,747.6 165.5,747.9 164.2,746.7 162.6,747.2 161.1,746.1 M171.6,730.8 172.2,731.7 173.8,732.4 174.0,734.2 M155.9,736.2 156.7,735.6 156.8,733.9 155.2,733.5 154.9,732.4 153.0,731.6 M153.4,728.3 154.1,730.0 154.6,730.8 155.2,731.2 M162.8,758.1 161.5,759.0 160.3,760.1 160.9,761.5 162.3,761.3 M164.6,730.8 165.5,730.1 165.5,729.2 164.7,728.0 M155.5,726.1 154.8,725.6 153.4,725.8 151.6,726.1 151.0,727.0 M84.5,757.1 85.5,757.9 86.5,759.5 86.5,761.3 85.7,761.5 84.7,762.5 M78.3,752.7 76.8,753.0 75.8,753.7 75.5,755.3 76.2,756.5 75.9,758.3 M82.4,754.9 82.4,753.5 82.4,752.4 80.9,751.2 79.6,750.0 77.5,750.7 M94.1,753.7 96.1,754.4 97.2,753.3 97.9,753.6 M87.0,748.3 88.6,747.4 89.4,746.8 89.5,745.1 91.3,744.9 92.1,745.2 M88.9,753.3 89.5,754.2 90.8,754.5 91.8,754.4 93.6,754.5 M88.6,754.9 90.5,754.3 91.0,753.5 92.2,752.9 92.0,751.1 91.5,750.2 90.2,748.9 M77.1,743.8 76.2,742.9 76.0,741.1 75.6,739.4 76.2,738.0 M101.3,749.7 100.5,750.8 98.9,752.3 99.3,754.1 98.4,754.8 M82.1,752.3 83.8,752.4 85.9,752.7 86.6,753.0 86.4,753.9 85.7,754.4 85.9,755.9 M85.6,745.3 85.5,744.1 83.6,743.8 82.8,741.9 82.9,740.4 83.1,739.1 M82.6,753.9 83.5,752.9 82.7,751.6 80.5,751.8 79.8,752.6 78.3,753.0 M94.7,754.3 96.0,754.1 96.3,752.5 97.9,751.6 97.9,750.6 96.8,750.4 95.7,752.2 M86.3,744.1 87.3,745.0 87.0,745.8 85.6,745.7 83.7,746.2 82.4,746.4 M80.3,746.2 78.7,745.9 77.4,745.0 76.0,745.0 74.9,745.4 74.8,746.6 M85.2,757.1 83.8,756.7 83.1,756.3 82.1,755.7 81.3,755.7 80.6,757.0 81.3,758.6 M103.4,751.3 104.6,752.7 104.6,753.5 102.8,754.2 102.0,753.8 101.7,752.9 99.8,752.9 M102.4,755.8 102.3,754.7 101.3,753.9 99.6,753.2 98.0,754.2 96.7,754.7 96.4,756.4 M95.2,753.7 95.9,752.2 95.6,751.3 94.7,750.4 M68.2,743.1 70.2,743.2 70.9,743.7 72.3,742.6 72.7,741.3 74.2,740.7 M103.3,749.5 102.5,751.4 101.8,752.3 99.9,753.1 99.8,754.6 101.8,755.3 M103.5,751.9 103.2,754.1 101.5,754.5 100.3,754.6 98.6,754.5 98.2,755.8 97.4,756.9 M84.2,745.1 83.6,746.9 84.8,748.1 85.7,748.3 87.1,747.6 M79.3,751.1 80.1,753.1 80.4,753.9 79.6,755.3 80.9,756.7 80.5,757.5 81.9,759.1 M80.6,742.7 81.5,743.3 83.2,743.3 83.7,745.3 84.5,746.5 M84.0,756.9 85.6,757.9 85.1,759.4 86.2,760.6 85.2,762.5 83.4,762.2 81.9,763.0 M89.0,752.8 89.7,753.0 90.6,752.2 92.4,751.8 M83.9,745.4 83.1,745.7 82.3,744.3 81.3,744.3 79.5,743.3 78.3,744.0 M104.7,754.4 103.8,753.1 104.3,752.4 105.9,751.8 106.7,751.3 M87.7,744.2 88.4,743.6 88.1,741.7 88.7,740.1 M86.0,751.6 87.1,751.4 87.9,751.8 89.6,753.0 M73.4,741.3 75.2,740.5 76.1,741.2 76.3,742.7 78.3,743.5 79.4,742.2 M141.6,753.1 139.7,752.2 138.6,750.5 138.8,749.4 138.9,747.6 M136.8,746.5 135.4,746.8 134.3,747.9 134.1,749.5 134.2,750.6 M122.2,744.7 121.8,746.5 120.7,747.5 119.2,747.8 M133.8,751.8 134.6,750.4 135.8,750.7 136.8,751.5 136.3,752.9 M143.3,751.0 143.7,749.9 144.3,749.3 145.1,748.5 145.2,746.3 144.5,745.7 143.5,746.1 M124.8,742.0 123.8,742.4 122.1,743.4 120.8,742.6 119.4,743.5 117.2,743.7 115.6,744.6 M147.7,752.0 148.9,752.0 150.1,753.6 151.7,754.5 153.1,754.8 153.7,753.9 M141.2,751.8 140.3,752.4 138.8,752.6 137.4,753.4 136.7,752.7 M133.8,754.3 133.3,752.8 134.2,752.2 134.1,750.4 M118.6,755.4 118.3,757.0 117.5,757.5 116.7,758.2 116.7,759.4 116.3,760.7 M137.1,746.6 137.8,746.2 138.5,746.8 139.6,747.4 M142.9,757.8 142.2,759.4 141.6,760.8 140.6,761.8 139.1,761.4 138.0,760.3 M118.8,745.8 119.1,744.0 118.4,743.4 118.7,742.6 119.1,740.5 118.8,738.6 119.0,737.1 M123.4,754.3 124.2,753.9 125.1,754.2 126.3,753.9 127.5,752.9 128.0,751.7 M139.1,756.3 138.3,755.1 138.6,754.0 139.8,753.6 141.1,753.8 142.5,754.2 M121.2,747.7 121.1,746.5 120.4,746.0 119.8,744.9 120.8,743.2 M128.0,750.6 128.2,749.7 129.0,749.6 129.6,751.1 129.7,752.1 131.8,752.4 M139.4,747.6 140.5,748.3 141.7,747.9 141.9,746.4 141.1,745.2 139.9,744.8 139.2,745.3 M116.9,757.5 116.8,758.4 118.1,760.1 118.7,762.0 119.3,763.7 120.1,765.4 M127.3,740.4 125.9,739.7 125.1,739.0 125.4,738.0 127.2,738.1 128.0,736.6 129.1,735.7 M128.2,748.2 127.4,748.3 126.5,748.2 126.1,746.8 125.6,745.6 M134.8,743.8 134.0,744.2 133.1,744.1 132.3,743.7 131.0,745.2 131.6,746.7 133.3,748.0 M121.0,746.3 121.6,745.7 122.6,745.7 123.4,745.1 124.2,745.8 125.1,745.2 M117.7,749.2 119.4,748.6 120.8,747.9 122.1,747.6 M126.2,747.8 125.5,748.7 125.3,750.5 125.0,751.6 M138.6,756.5 137.9,756.0 136.8,755.9 134.6,756.1 M138.8,747.2 138.8,748.6 138.1,749.3 139.3,750.9 141.4,751.0 142.9,749.7 142.4,747.7 M118.2,757.2 116.0,757.6 114.5,757.8 113.3,758.4 112.9,759.5 M136.3,755.5 137.2,756.5 138.6,757.2 139.3,756.2 139.3,755.3 139.7,753.6 138.4,752.5 M138.8,748.4 136.9,749.3 136.1,748.8 134.9,749.5 132.8,748.8 131.9,748.4 M124.2,743.9 122.6,743.2 122.6,742.1 121.8,740.6 120.0,740.5 M120.3,755.7 120.7,756.4 119.6,757.4 118.1,757.5 116.7,759.0 116.0,759.8 M135.7,747.6 134.6,748.5 134.5,750.4 133.7,751.3 134.4,753.2 136.0,753.0 M119.2,746.5 118.4,747.7 117.1,748.4 117.1,750.1 117.2,751.3 115.4,751.9 113.9,751.5 M129.9,747.4 130.3,745.6 131.5,744.7 131.7,743.1 130.2,742.0 129.2,740.4 M154.2,730.1 155.1,732.1 155.8,732.6 156.6,732.9 156.7,735.0 M152.7,722.3 153.2,721.6 152.1,720.1 152.5,719.2 M155.4,718.5 154.8,719.7 153.4,719.6 152.7,718.1 152.7,716.8 150.9,716.0 M148.9,720.9 147.7,720.7 146.9,719.7 146.1,720.0 144.5,719.5 143.7,719.9 142.5,718.6 M151.4,727.3 153.3,726.7 155.1,726.9 155.8,727.6 157.1,728.5 158.8,727.4 M151.7,728.7 153.2,729.7 154.0,731.1 153.4,732.2 M149.6,718.9 148.8,720.6 149.3,721.8 149.9,722.4 M153.3,723.4 153.0,724.3 152.6,725.0 153.1,726.7 154.4,727.1 M150.6,720.1 151.6,719.6 152.2,718.1 153.1,717.5 153.4,716.4 M153.9,724.4 155.7,725.2 156.6,726.8 156.0,728.1 155.5,729.1 154.1,730.5 M154.6,729.5 154.9,730.8 155.6,731.8 156.9,732.7 158.0,731.9 159.0,731.6 160.1,733.4 M151.5,722.1 150.7,723.8 150.1,725.3 148.9,725.1 147.3,723.9" fill="none" stroke="#000" stroke-width="1"/>
<path d="M248.9,678.0 252.1,681.2 254.0,686.0 254.5,692.4 M254.0,694.0 252.9,698.8 250.8,702.8 M249.7,705.2 246.5,710.0 244.0,713.2 M242.4,714.8 239.2,717.7 M236.0,722.0 233.6,725.2 M228.0,727.6 224.0,731.6 M245.7,693.2 250.5,694.0 248.9,697.2 244.9,700.4 242.4,698.8 M228.4,662.8 232.0,662.0 235.7,663.9 M241.2,664.9 245.7,663.3 250.5,661.7 M258.1,661.2 263.3,662.0 268.1,662.8 M270.5,656.4 272.1,657.5 M274.5,663.6 280.1,664.4 284.9,664.9" fill="none" stroke="#000" stroke-width="1.4"/>
<path d="M806.1,571.4 803.7,574.2 804.6,579.7 802.4,584.3 803.9,589.8 804.6,595.4 802.8,600.9 804.2,606.5 801.8,612.9 803.7,621.2 802.4,626.8 804.1,636.0 802.8,643.4 804.6,650.8 806.1,658.1Z" fill="#005684"/>
<path d="M804.6,647.4 800.0,648.0 795.4,646.1 789.8,645.2 785.2,649.8 783.4,656.3 787.1,661.8 785.0,670.1 788.7,679.9 791.1,689.8 794.8,699.6 793.6,707.0 788.7,711.9 789.9,718.1 785.0,720.6 783.7,726.7 784.5,732.1" fill="none" stroke="#000" stroke-width="3.6" stroke-linejoin="round"/>
<path d="M804.6,647.4 800.0,648.0 795.4,646.1 789.8,645.2 785.2,649.8 783.4,656.3 787.1,661.8 785.0,670.1 788.7,679.9 791.1,689.8 794.8,699.6 793.6,707.0 788.7,711.9 789.9,718.1 785.0,720.6 783.7,726.7 784.5,732.1" fill="none" stroke="#005684" stroke-width="1.8" stroke-linejoin="round"/>
<path d="M800.0,611.2 799.3,612.8 797.4,611.9 798.7,610.6Z M798.5,641.6 798.4,642.9 797.5,642.5 797.1,641.1 798.1,640.7Z M803.3,623.5 804.1,624.0 804.2,624.9 803.1,625.4 802.7,624.4Z M795.5,633.6 796.0,633.4 796.8,633.6 796.5,634.3 795.7,634.6Z M800.0,617.1 799.1,616.4 799.5,615.0 800.6,615.4 801.3,616.5Z M799.0,588.4 797.7,588.2 797.6,586.8 798.6,586.6 799.2,587.0Z M802.6,622.2 801.6,623.8 800.0,622.8 800.3,622.0 801.3,621.6Z M800.7,592.4 799.6,593.6 798.0,592.6 799.2,591.5Z M804.8,555.2 803.4,556.2 802.1,555.6 802.4,553.7 804.0,553.9Z M801.0,611.1 801.7,610.8 802.3,610.6 802.5,611.6 802.0,612.1 801.4,612.1Z M793.2,578.3 794.1,578.3 794.5,579.2 793.8,579.7 792.9,579.3Z M796.4,640.1 797.9,639.9 797.8,640.9 796.9,641.0Z M797.5,588.9 796.7,589.5 795.9,589.3 795.5,588.3 796.8,588.2Z M799.2,615.7 799.0,614.4 800.2,614.1 800.9,614.9 801.1,616.4 799.8,616.5Z M801.7,650.3 799.6,650.8 799.3,648.6 801.2,648.0Z M801.0,641.5 802.4,641.5 802.1,643.2 800.7,642.6Z M801.0,599.4 800.4,600.7 799.0,599.8 798.4,598.8 799.7,598.2 801.0,598.1Z M795.4,639.9 795.8,638.7 796.8,639.0 797.1,640.0 796.7,640.5 795.7,640.9Z M798.7,631.8 796.6,632.0 796.3,630.6 797.6,630.0Z M804.5,619.7 804.6,618.8 805.8,618.9 805.4,619.7Z M797.9,649.4 797.2,650.2 796.0,649.7 796.8,648.8Z M796.3,580.7 795.8,582.5 794.4,582.7 794.1,581.0 794.8,580.2Z M804.0,554.2 805.5,554.2 806.0,555.8 803.7,555.9Z M800.7,602.0 800.2,602.8 799.5,602.3 798.8,601.7 799.7,601.1 800.5,601.4Z M803.7,642.9 803.9,641.3 805.0,640.8 805.8,642.4 804.9,643.1Z" fill="#005684"/>
<path d="M796.4,617.7 795.9,616.8 794.2,616.9 793.3,617.2 M803.8,580.9 802.3,581.2 801.2,581.1 800.3,581.6 799.7,582.4 M805.3,571.6 806.8,572.7 807.6,574.0 808.9,574.9 809.0,576.8 810.7,577.1 811.5,577.6 M800.3,613.8 800.1,612.3 800.8,611.2 800.2,610.5 M805.4,619.9 805.5,618.6 805.1,617.7 805.4,615.8 806.2,614.8 807.1,614.2 806.9,612.4 M803.2,621.2 804.6,621.8 806.0,622.4 805.8,624.4 M794.4,606.7 794.8,605.6 794.0,604.6 793.7,602.9 793.1,601.0 792.7,599.7 791.6,599.7 790.5,598.6 M798.3,606.2 796.7,607.3 795.5,608.8 795.3,609.6 794.8,611.1 M804.1,656.2 805.9,656.0 807.0,655.0 807.5,653.7 808.3,652.8 M803.1,619.5 803.9,621.1 804.7,621.5 805.6,621.3 806.4,621.8 808.1,621.4 M802.5,615.3 803.6,616.3 805.3,616.7 806.9,617.9 M789.1,614.4 788.0,613.8 788.1,612.3 788.8,611.7 788.6,610.1 787.6,609.3 M805.1,631.9 804.2,632.3 802.5,631.9 801.9,630.4 803.1,629.1 803.9,629.1 804.3,628.0 803.8,627.2 M796.2,586.3 796.0,584.9 796.4,583.3 797.2,582.0 M798.6,589.7 797.6,588.6 796.8,587.5 797.3,586.4 798.1,585.5 M796.1,645.8 796.3,646.7 795.8,648.4 794.6,649.9 793.1,650.8 M804.8,612.4 806.4,612.7 807.0,613.5 806.7,614.5 807.6,615.5 809.1,614.5 809.3,612.9 M798.2,635.0 797.0,634.1 797.6,632.5 799.5,632.9 799.6,633.8 800.7,633.9 801.0,633.0 802.8,632.3 M796.3,636.0 798.0,636.2 798.6,637.1 799.0,638.9 799.9,639.7 801.2,640.3 M805.9,615.2 806.9,615.8 808.0,616.4 808.6,615.8 M793.7,620.6 792.4,620.2 791.5,620.1 790.8,620.6 791.1,622.4 790.4,624.0 791.1,625.0 790.4,626.1 M804.7,655.8 805.7,656.0 806.5,655.5 807.8,654.8 808.8,655.1 810.1,656.2 810.1,657.2 810.0,658.1 M797.2,589.0 797.2,590.4 798.0,590.7 798.6,592.3 M805.6,557.4 805.0,555.8 805.6,554.6 806.0,553.7 806.2,551.9 805.1,550.6 805.2,549.6 M801.6,622.7 802.4,622.1 804.3,622.1 805.7,622.2 807.0,621.6 807.7,619.9 M804.9,641.8 803.7,640.9 802.3,640.7 801.6,641.9 801.2,643.0 M792.7,590.6 794.0,590.5 794.7,591.9 794.0,592.4 792.5,592.4 790.8,592.2 M802.9,641.6 801.8,642.0 801.7,643.1 802.4,643.8 M794.7,643.8 792.9,644.5 791.4,645.1 790.8,644.6 789.8,644.4 789.3,645.5 788.2,645.5 M796.5,602.5 795.4,602.3 793.6,602.5 792.7,601.7 792.9,600.6 791.8,599.4 790.5,598.6 789.3,599.4 M794.0,611.4 793.7,612.6 793.0,613.3 791.9,614.0 M787.3,617.2 787.4,618.3 789.2,619.2 790.7,620.5 792.1,619.6 M803.7,601.5 803.2,599.9 801.9,599.8 801.6,600.8 M801.2,577.7 800.2,578.4 799.3,578.3 798.3,579.1 M794.6,620.7 793.1,620.0 792.5,620.5 792.0,621.7 791.1,622.7 790.6,623.9 789.9,625.3 M805.3,607.5 804.8,606.8 805.6,605.8 806.8,604.6 808.2,604.6 808.5,605.3 809.4,606.1 M793.3,606.0 794.0,606.5 794.2,607.5 794.8,608.3 794.5,609.3 794.7,610.5 795.5,611.3 795.7,612.8 M801.8,568.2 800.4,567.2 801.1,565.6 803.0,565.9 803.4,567.2 804.9,567.8 805.8,568.8 806.7,568.5 M801.8,602.4 801.4,603.6 799.5,603.9 798.0,602.9 M804.8,571.3 805.1,570.2 804.3,569.8 804.3,568.3 803.0,567.5 801.2,567.5 800.4,568.4 M805.0,612.0 805.5,611.0 806.7,610.4 807.6,611.1 M797.4,582.1 798.5,583.6 798.2,584.8 797.2,585.0 797.2,587.0 798.6,587.7 799.5,586.6 800.7,587.0 M803.2,595.8 803.3,594.8 804.6,593.8 805.4,593.1 805.3,592.2 M795.3,578.9 796.1,579.4 797.1,578.3 797.9,578.6 797.8,579.7 798.7,581.1 M805.9,594.3 804.9,594.8 803.6,594.1 802.1,593.9 801.0,595.2 800.6,596.6 M793.7,644.5 793.7,645.5 794.6,646.1 796.4,646.9 796.7,648.0 M801.8,628.9 800.7,628.4 800.8,627.4 799.8,626.7 M798.2,642.9 796.8,642.7 795.1,643.0 794.0,643.6 794.5,645.0 796.2,645.8 796.9,645.2 798.4,644.0 M798.8,589.6 799.5,588.8 800.2,587.9 801.3,586.2 M798.4,647.4 799.8,648.1 800.2,649.2 800.6,651.0 800.5,652.2 M804.8,613.1 805.8,612.5 806.7,612.4 808.1,613.0 M793.2,599.3 793.2,600.7 794.1,600.9 794.4,601.9 M794.4,595.1 795.0,594.4 794.5,592.8 793.7,591.2 792.5,589.9 M792.5,600.7 792.8,601.7 792.8,602.9 792.3,604.2 792.1,606.0 790.9,607.6 790.9,608.9 790.2,610.2 M802.8,588.0 804.4,588.3 805.5,587.2 806.0,586.1 805.5,584.7 M801.9,574.8 802.1,576.2 800.7,577.1 799.4,576.1 M797.3,588.3 798.3,588.7 799.2,589.2 799.0,590.5 797.7,591.8 M805.8,577.7 806.1,576.4 806.7,574.7 807.8,573.6 808.7,573.9 M797.1,597.4 798.0,597.7 798.7,596.8 800.5,596.1 801.9,595.1 803.3,595.9 803.7,596.9 802.5,598.4 M800.0,604.9 800.8,604.3 801.7,603.4 803.1,604.3 803.3,605.9 805.0,606.2 M800.9,627.2 799.3,627.5 797.9,628.0 797.2,627.5 M801.7,615.6 800.5,616.3 800.7,618.2 802.4,619.2 803.3,620.0 M805.1,600.4 803.7,600.3 803.1,599.6 802.9,598.1 801.5,597.7 M795.2,627.5 795.2,628.5 795.2,629.3 795.4,630.4 797.0,631.0 M802.3,631.8 801.3,631.9 800.1,631.3 799.1,630.6 M796.6,610.8 796.4,610.0 796.3,608.2 794.8,607.7 794.2,608.5 M799.0,609.3 798.4,609.9 798.4,611.7 797.0,612.1 796.2,610.5 795.0,609.3 M792.5,578.3 791.8,577.6 790.5,576.7 789.4,575.9 789.8,574.1 M801.3,594.3 800.4,593.7 800.2,592.6 799.2,592.4 799.0,590.6 M798.0,596.9 796.8,596.6 795.0,596.4 794.9,595.6 795.7,594.2 M797.3,592.9 796.8,592.0 795.2,590.9 794.0,589.4 792.2,588.6 M799.1,649.7 799.3,648.5 800.9,647.6 802.0,647.4 M794.9,590.6 795.9,591.1 796.8,590.8 797.5,590.4 797.3,588.8 798.1,587.9 M788.6,595.8 789.9,596.9 791.7,597.2 792.3,598.2 793.8,597.8 794.7,596.4 M797.8,645.5 798.1,647.2 799.5,647.5 800.8,648.1 801.8,646.8 803.2,646.5 803.5,645.5 M800.4,624.2 799.4,623.2 798.9,622.4 799.4,621.8 801.0,621.2 802.3,620.2 803.7,621.3 803.8,622.3 M798.6,574.7 797.7,574.1 797.9,573.0 797.0,571.2 798.3,570.0 797.9,568.3 M795.0,597.2 794.9,598.1 795.5,599.7 794.4,601.4 793.9,602.9 794.8,604.7 795.7,605.7 M803.7,581.3 803.4,579.4 803.1,578.6 802.6,577.5 803.7,575.9 802.9,574.9 M789.2,595.8 791.1,596.3 792.6,596.8 793.1,596.0 793.0,594.6 792.3,593.9 792.6,592.6 791.3,591.7 M797.8,593.5 798.0,591.5 797.2,590.4 795.4,590.3 794.7,592.2 795.3,593.2 794.3,594.1 M803.6,632.2 803.4,633.5 802.1,633.5 801.4,634.9 M798.1,638.7 796.8,638.8 796.5,637.8 795.3,637.7 794.2,637.8 M800.3,574.6 799.0,574.7 798.2,576.2 796.9,576.7 795.7,575.3 795.9,573.7 M805.3,634.4 806.0,633.5 804.9,632.2 804.4,631.3 805.0,630.3 804.8,629.4 806.0,628.2 805.0,626.5 M795.5,597.1 796.3,595.5 797.3,594.8 798.8,594.1 799.8,593.4 800.5,592.4 M795.3,615.8 796.4,614.8 798.1,615.5 799.1,615.2 800.8,615.6 802.4,616.2 802.3,617.2 802.3,618.2 M801.5,614.6 800.4,614.6 799.5,614.8 798.9,614.2 797.5,613.8 M795.7,577.3 796.1,575.4 794.7,574.6 795.2,573.1 795.5,572.1 796.4,570.7 795.5,569.2 M802.3,617.2 802.8,615.6 802.9,614.5 802.4,613.4 M804.6,623.5 804.4,622.7 805.1,621.9 806.2,620.9 807.0,620.8 807.6,622.1 806.7,623.7 M804.5,626.4 803.2,626.1 802.6,624.7 802.0,623.2 801.3,622.8 800.7,621.5 799.7,619.9 M803.1,582.7 801.4,581.9 799.8,581.2 797.9,581.8 796.3,581.3 795.5,580.4 795.0,579.3 793.9,578.0 M803.3,553.6 801.5,553.3 801.3,551.4 802.7,550.9 803.2,549.9 803.3,548.0 803.5,546.4 804.4,545.7 M800.8,588.3 802.0,588.8 803.6,589.2 803.5,590.3 805.2,591.0 805.8,592.6 804.2,593.8 802.7,594.4 M797.8,639.5 797.4,638.6 796.8,637.9 795.2,637.6 M805.2,643.8 806.8,643.9 807.8,645.3 809.2,645.5 809.4,646.5 810.3,646.9 811.0,646.0 812.0,644.4 M796.5,576.8 796.5,578.8 794.9,579.6 793.7,580.0 792.3,579.8 791.9,578.0 791.6,577.1 M800.2,593.1 801.2,592.9 802.4,593.9 802.7,595.8 802.6,597.5 803.2,598.3 804.6,598.1 805.1,597.2 M798.1,633.6 799.3,634.6 801.0,633.7 802.6,632.7 803.4,633.6 M800.8,577.6 801.3,578.6 802.8,579.6 804.4,579.0 804.9,577.9 806.4,576.9 M801.4,649.2 803.2,649.7 804.2,649.2 804.4,648.3 802.7,647.4 M804.7,618.6 804.8,619.7 805.2,621.1 806.4,621.9 807.9,622.7 M799.6,579.9 798.7,580.1 798.5,581.2 797.6,582.1 795.9,582.2 M804.0,588.1 804.1,586.6 804.1,585.7 803.5,585.1 802.3,585.0 800.7,586.0 M797.5,607.2 796.7,608.5 796.0,609.0 795.1,608.9 794.8,607.1 M804.6,628.1 805.7,629.7 806.9,630.8 807.7,631.2 807.9,632.0 807.0,633.4 806.9,634.5 806.4,635.7 M803.0,631.3 802.6,630.0 802.5,628.8 803.6,627.4 804.7,626.7 806.3,627.3 M803.0,641.7 801.8,640.9 800.0,640.9 798.9,642.3 797.9,642.1 797.5,640.3 795.8,639.7 M792.8,627.9 791.4,626.9 792.1,625.3 791.8,624.3 793.3,623.3 M805.0,577.0 803.0,577.0 801.9,576.9 801.1,578.0 799.8,578.8 M796.5,599.2 795.4,598.6 793.7,598.9 792.9,599.5 792.8,600.8 791.2,601.3 M793.1,592.3 794.6,592.0 796.1,593.2 797.7,592.2 797.2,590.9 796.2,589.7 M794.8,624.0 796.1,624.3 797.5,624.6 798.4,623.8 800.2,623.4 M802.9,630.3 803.8,629.3 804.1,628.1 803.9,627.1 804.3,625.8 804.1,624.5 803.8,623.5 M794.5,617.6 794.5,616.8 795.9,616.0 795.7,614.3 794.9,613.1 793.8,612.3 M804.1,641.1 804.4,642.5 806.1,643.1 806.5,644.9 807.7,644.9 M791.4,595.9 793.3,595.4 793.5,594.0 792.9,592.4 792.5,591.1 790.8,590.7 790.7,588.9 M805.6,571.2 806.2,570.1 807.7,569.7 809.1,570.8 M805.6,565.5 806.0,566.2 807.8,565.9 809.0,565.0 810.1,564.0 811.2,564.2 M801.2,631.5 801.7,632.7 801.4,633.8 800.7,635.2 800.0,636.6 800.2,637.9 801.3,638.0 M801.6,607.6 801.0,609.0 801.2,610.0 800.8,610.9 801.7,612.1 802.1,612.8 803.0,614.5 M799.2,638.7 800.7,638.7 801.4,640.1 800.7,641.6 801.2,642.8 M803.3,599.5 802.0,600.7 801.6,601.7 801.5,602.6 800.5,603.8 799.6,604.1 798.7,602.5 799.5,601.9 M792.1,643.9 791.9,642.3 792.5,641.4 792.2,639.5 790.9,639.2 789.1,639.6 788.5,640.6 788.9,641.4 M792.7,599.6 793.9,599.7 794.9,599.5 796.1,601.0 797.1,601.2 797.6,600.2 M805.3,648.2 804.9,649.5 803.2,649.5 802.6,650.6 802.9,652.0 M802.6,650.3 802.9,651.7 803.4,653.0 805.2,653.5 805.7,652.8 806.3,651.7 807.4,651.9 M792.2,612.1 791.0,611.7 791.1,610.8 793.0,610.6 794.0,611.4 794.9,611.0 795.3,610.1 796.1,608.7 M796.4,597.4 795.5,596.6 794.3,596.0 793.5,595.8 M795.3,638.1 795.1,638.9 796.7,639.9 796.1,641.7 M804.7,625.8 803.9,625.5 802.6,626.2 802.9,627.6 803.4,629.2 802.1,630.6 800.8,630.8 799.5,630.8 M788.9,614.6 789.5,613.8 789.1,612.2 788.9,611.1 787.7,610.6 786.8,610.4 785.6,611.1 785.5,613.1 M804.7,607.8 803.3,607.7 802.1,608.3 800.5,608.7 799.7,610.2 798.2,610.3 796.9,610.4 M802.5,566.2 802.0,568.0 801.4,569.0 800.9,569.9 801.6,570.6 803.1,570.7 803.7,569.8 M804.7,557.4 805.3,556.7 806.5,556.6 807.4,556.4 808.2,557.4 M797.1,588.7 798.5,588.0 798.7,586.9 797.8,585.8 M790.0,614.0 788.9,612.7 787.6,612.1 785.6,612.0 M801.5,625.0 799.9,625.0 799.7,623.5 800.3,622.6 801.7,622.9 M799.7,592.3 799.4,593.5 798.7,594.9 798.5,595.6 798.7,597.1 798.2,599.0 797.3,600.2" fill="none" stroke="#000" stroke-width="1"/>
<rect x="6" y="761" width="250" height="45" fill="#004365"/>
<g fill="none" stroke="#c0c0c0" stroke-width="1">
<circle cx="407" cy="407" r="159.5"/>
<circle cx="407" cy="407" r="279.5"/>
<circle cx="407" cy="407" r="399.5"/>
<circle cx="407" cy="407" r="519.5"/>
</g>
<circle cx="407" cy="407" r="39.5" fill="none" stroke="#f00" stroke-width="1"/>
<rect x="399.1" y="363" width="13.8" height="9" fill="#5d4f4a"/>
<text x="406" y="371" text-anchor="middle" font-family="'Liberation Mono',monospace" font-size="10.3" fill="#ffff80">31</text>
<rect x="395.9" y="243" width="20.2" height="9" fill="#5d4f4a"/>
<text x="406" y="251" text-anchor="middle" font-family="'Liberation Mono',monospace" font-size="10.3" fill="#ffff80">125</text>
<rect x="395.9" y="123" width="20.2" height="9" fill="#5d4f4a"/>
<text x="406" y="131" text-anchor="middle" font-family="'Liberation Mono',monospace" font-size="10.3" fill="#ffff80">219</text>
<rect x="395.9" y="3" width="20.2" height="9" fill="#5d4f4a"/>
<text x="406" y="11" text-anchor="middle" font-family="'Liberation Mono',monospace" font-size="10.3" fill="#ffff80">313</text>
</svg>

<!-- legend -->
<div style="position:absolute;left:9px;top:759px;width:244px;height:44px;box-sizing:border-box;border:1px solid #8c8c8c;background:#000;"></div>
<div class="t lg" style="left:13px;top:761px;color:#e8e8e8;">Symbols</div>
<div class="t lg" style="left:53px;top:761px;color:#f0f0f0;">-CG</div>
<div class="t lg" style="left:78px;top:761px;color:#f0f0f0;">-IC</div>
<div class="t lg" style="left:99px;top:761px;color:#f0f0f0;">+CG</div>
<div class="t lg" style="left:124px;top:761px;color:#f0f0f0;">+IC</div>
<div class="t lg" style="left:153px;top:761px;color:#d0d8e8;">Strike age color codes</div>
<div class="t lg" style="left:13px;top:774px;color:#e8e8e8;">Recent</div>
<div class="t lg" style="left:13px;top:787px;color:#e8e8e8;">Old</div>
<div class="t lg" style="left:153px;top:774px;color:#f0d800;">15+</div>
<div class="t lg" style="left:188px;top:774px;color:#f0b000;">30+</div>
<div class="t lg" style="left:223px;top:774px;color:#f09000;">45+</div>
<div class="t lg" style="left:153px;top:787px;color:#f07800;">60+</div>
<div class="t lg" style="left:188px;top:787px;color:#f05800;">75+</div>
<div class="t lg" style="left:223px;top:787px;color:#f03800;">90+</div>
<svg style="position:absolute;left:50px;top:772px;" width="100" height="30" viewBox="50 772 100 30" fill="none" stroke-width="1">
 <g stroke="#00f0f0"><circle cx="60.5" cy="780.5" r="4"/><path d="M58,780.5h5 M82,780.5h7 M108,780.5h5M110.5,778v5 M132,780.5h7M135.5,777v7"/><circle cx="110.5" cy="780.5" r="4"/></g>
 <g stroke="#f0f000"><circle cx="60.5" cy="793.5" r="4"/><path d="M58,793.5h5 M82,793.5h7 M108,793.5h5M110.5,791v5 M132,793.5h7M135.5,790v7"/><circle cx="110.5" cy="793.5" r="4"/></g>
</svg>

<!-- copyright -->
<div style="position:absolute;left:685px;top:792px;width:121px;height:14px;background:#000;"></div>
<div class="t lg" style="left:689px;top:792px;color:#f0f0f0;">©2005 Astrogenic Systems</div>

<!-- panel 1 -->
<div class="panel" style="left:812px;top:8px;width:320px;height:320px;"></div>
<div class="btn b" style="left:819px;top:16px;width:58px;height:18px;background:#5a0000;color:#e8e0e0;font-size:12px;line-height:18px;">STRIKE</div>
<div class="btn b" style="left:883px;top:16px;width:58px;height:18px;background:#333;color:#c8c8c8;font-size:12px;line-height:18px;">NOISE</div>
<div class="btn b" style="left:994px;top:16px;width:128px;height:18px;background:#333;font-size:12.2px;line-height:18px;text-align:left;"><span style="position:absolute;left:3px;">Bng 350°</span><span style="position:absolute;right:3px;color:#00e800;">361mi</span></div>

<div class="btn" style="left:821px;top:64px;width:82px;height:16px;background:#555;font-size:11.6px;line-height:14px;color:#f0f0f0;">Strikes/min</div>
<div class="btn" style="left:931px;top:64px;width:82px;height:16px;background:#555;font-size:11.6px;line-height:14px;color:#f0f0f0;">Close/min</div>
<div class="btn" style="left:1041px;top:64px;width:82px;height:16px;background:#555;font-size:11.6px;line-height:14px;color:#f0f0f0;">Noises/min</div>

<div class="t b r" style="left:803px;width:100px;top:81px;font-size:27.5px;line-height:40px;">0</div>
<div class="t b r" style="left:913px;width:100px;top:81px;font-size:27.5px;line-height:40px;">0</div>
<div class="t b r" style="left:1023px;width:100px;top:81px;font-size:27.5px;line-height:40px;color:#c0c0c0;">0</div>

<div class="t r" style="left:783px;width:120px;top:128px;">Total Strikes</div>
<div class="t r" style="left:893px;width:120px;top:128px;">Total Close</div>
<div class="t r g" style="left:1003px;width:120px;top:128px;">Total Noises</div>
<div class="t r" style="left:783px;width:120px;top:146px;">6</div>
<div class="t r" style="left:893px;width:120px;top:146px;">0</div>
<div class="t r" style="left:1003px;width:120px;top:146px;">12</div>

<div class="t g" style="left:821px;top:200px;">Lightning type distribution</div>
<div class="hl" style="left:821px;top:217px;width:303px;"></div>

<div class="t b s11" style="left:821px;top:222px;">Cloud-ground</div>
<div class="t s11 g" style="left:912px;top:222px;">+</div>
<div class="bar" style="left:925px;top:227px;"><i style="width:16px;background:#f00;"></i></div>
<div class="t b s11" style="left:979px;top:222px;letter-spacing:0.9px;">33%</div>
<div style="position:absolute;left:1016px;top:231px;width:7px;height:2px;background:#c8c8c8;"></div>
<div class="bar" style="left:1028px;top:227px;"></div>
<div class="t b s11" style="left:1082px;top:222px;letter-spacing:0.9px;">0%</div>
<div class="t b s11 g" style="left:821px;top:246px;">Count</div>
<div class="t b s11" style="left:925px;top:246px;">2</div>
<div class="t b s11" style="left:1028px;top:246px;">0</div>

<div class="t b s11" style="left:821px;top:276px;">Intracloud</div>
<div class="t s11 g" style="left:912px;top:276px;">+</div>
<div class="bar" style="left:925px;top:281px;"><i style="width:16px;background:#e85aa0;"></i></div>
<div class="t b s11" style="left:979px;top:276px;letter-spacing:0.9px;">33%</div>
<div style="position:absolute;left:1016px;top:285px;width:7px;height:2px;background:#c8c8c8;"></div>
<div class="bar" style="left:1028px;top:281px;"><i style="width:16px;background:#0f0;"></i></div>
<div class="t b s11" style="left:1082px;top:276px;letter-spacing:0.9px;">33%</div>
<div class="t b s11 g" style="left:821px;top:300px;">Count</div>
<div class="t b s11" style="left:925px;top:300px;">2</div>
<div class="t b s11" style="left:1028px;top:300px;">2</div>

<!-- panel 2 -->
<div class="panel" style="left:812px;top:333px;width:320px;height:115px;"></div>
<div class="t b" style="left:821px;top:337px;font-size:16.4px;color:#00f000;">2/3/2026 2:14:56 AM</div>
<div class="hl" style="left:821px;top:358px;width:303px;"></div>
<div class="t" style="left:821px;top:373px;">Squelch</div>
<div class="t" style="left:821px;top:393px;">Persistence</div>
<div class="t" style="left:821px;top:413px;">Range</div>
<div class="t" style="left:909px;top:373px;">0</div>
<div class="t" style="left:909px;top:393px;">90 min</div>
<div class="t" style="left:909px;top:413px;">313 mi</div>
<div class="t" style="left:981px;top:373px;">Upload</div>
<div class="t" style="left:981px;top:393px;">Capture</div>
<div class="t" style="left:981px;top:413px;">Receiver</div>
<div class="t g" style="left:1061px;top:373px;">Disabled</div>
<div class="t gr" style="left:1061px;top:393px;">Active</div>
<div class="t gr" style="left:1061px;top:413px;">Enabled</div>

<!-- panel 3 -->
<div class="panel" style="left:812px;top:453px;width:320px;height:350px;"></div>
<div class="t g" style="left:821px;top:460px;">Uptime</div>
<div class="t" style="left:909px;top:460px;">518:00</div>
<div class="t g" style="left:981px;top:460px;">Peak time</div>
<div class="t g" style="left:1061px;top:460px;">Plot</div>
<div class="t g" style="left:821px;top:483px;">Peak rate</div>
<div class="t" style="left:909px;top:483px;">1/min</div>
<div class="t" style="left:981px;top:483px;">1:40 AM</div>
<div class="t" style="left:1061px;top:483px;">Strike</div>
<div class="t g" style="left:822px;top:513px;">Trend graph</div>
<div class="t" style="left:908px;top:513px;">60 min</div>

<svg style="position:absolute;left:812px;top:530px;" width="320" height="272" viewBox="812 530 320 272" shape-rendering="crispEdges">
 <g stroke="#c8c8c8" stroke-width="1" fill="none">
  <path d="M1088.5,542v236 M822,777.5h267"/>
  <path d="M1084,542.5h5 M1084,620.5h5 M1084,699.5h5 M1086,581.5h5 M1086,659.5h5 M1086,738.5h5"/>
  <path d="M822.5,775v5 M866.5,775v5 M911.5,775v5 M955.5,775v5 M999.5,775v5 M1044.5,775v5"/>
 </g>
 <path d="M929.5,777.5L931.5,769.5h2L935.5,777.5" stroke="#fff" fill="none" stroke-width="1"/>
 <g font-family="'Liberation Sans',sans-serif" font-size="12" fill="#d0d4dc">
  <text x="1092" y="547">30</text><text x="1092" y="625">20</text><text x="1092" y="704">10</text>
  <text x="820" y="793">60</text><text x="864.5" y="793">50</text><text x="909" y="793">40</text><text x="953" y="793">30</text><text x="997.5" y="793">20</text><text x="1042.5" y="793">10</text><text x="1087" y="793">0</text><text x="1100.5" y="793">min</text>
 </g>
</svg>
</body>
</html>
